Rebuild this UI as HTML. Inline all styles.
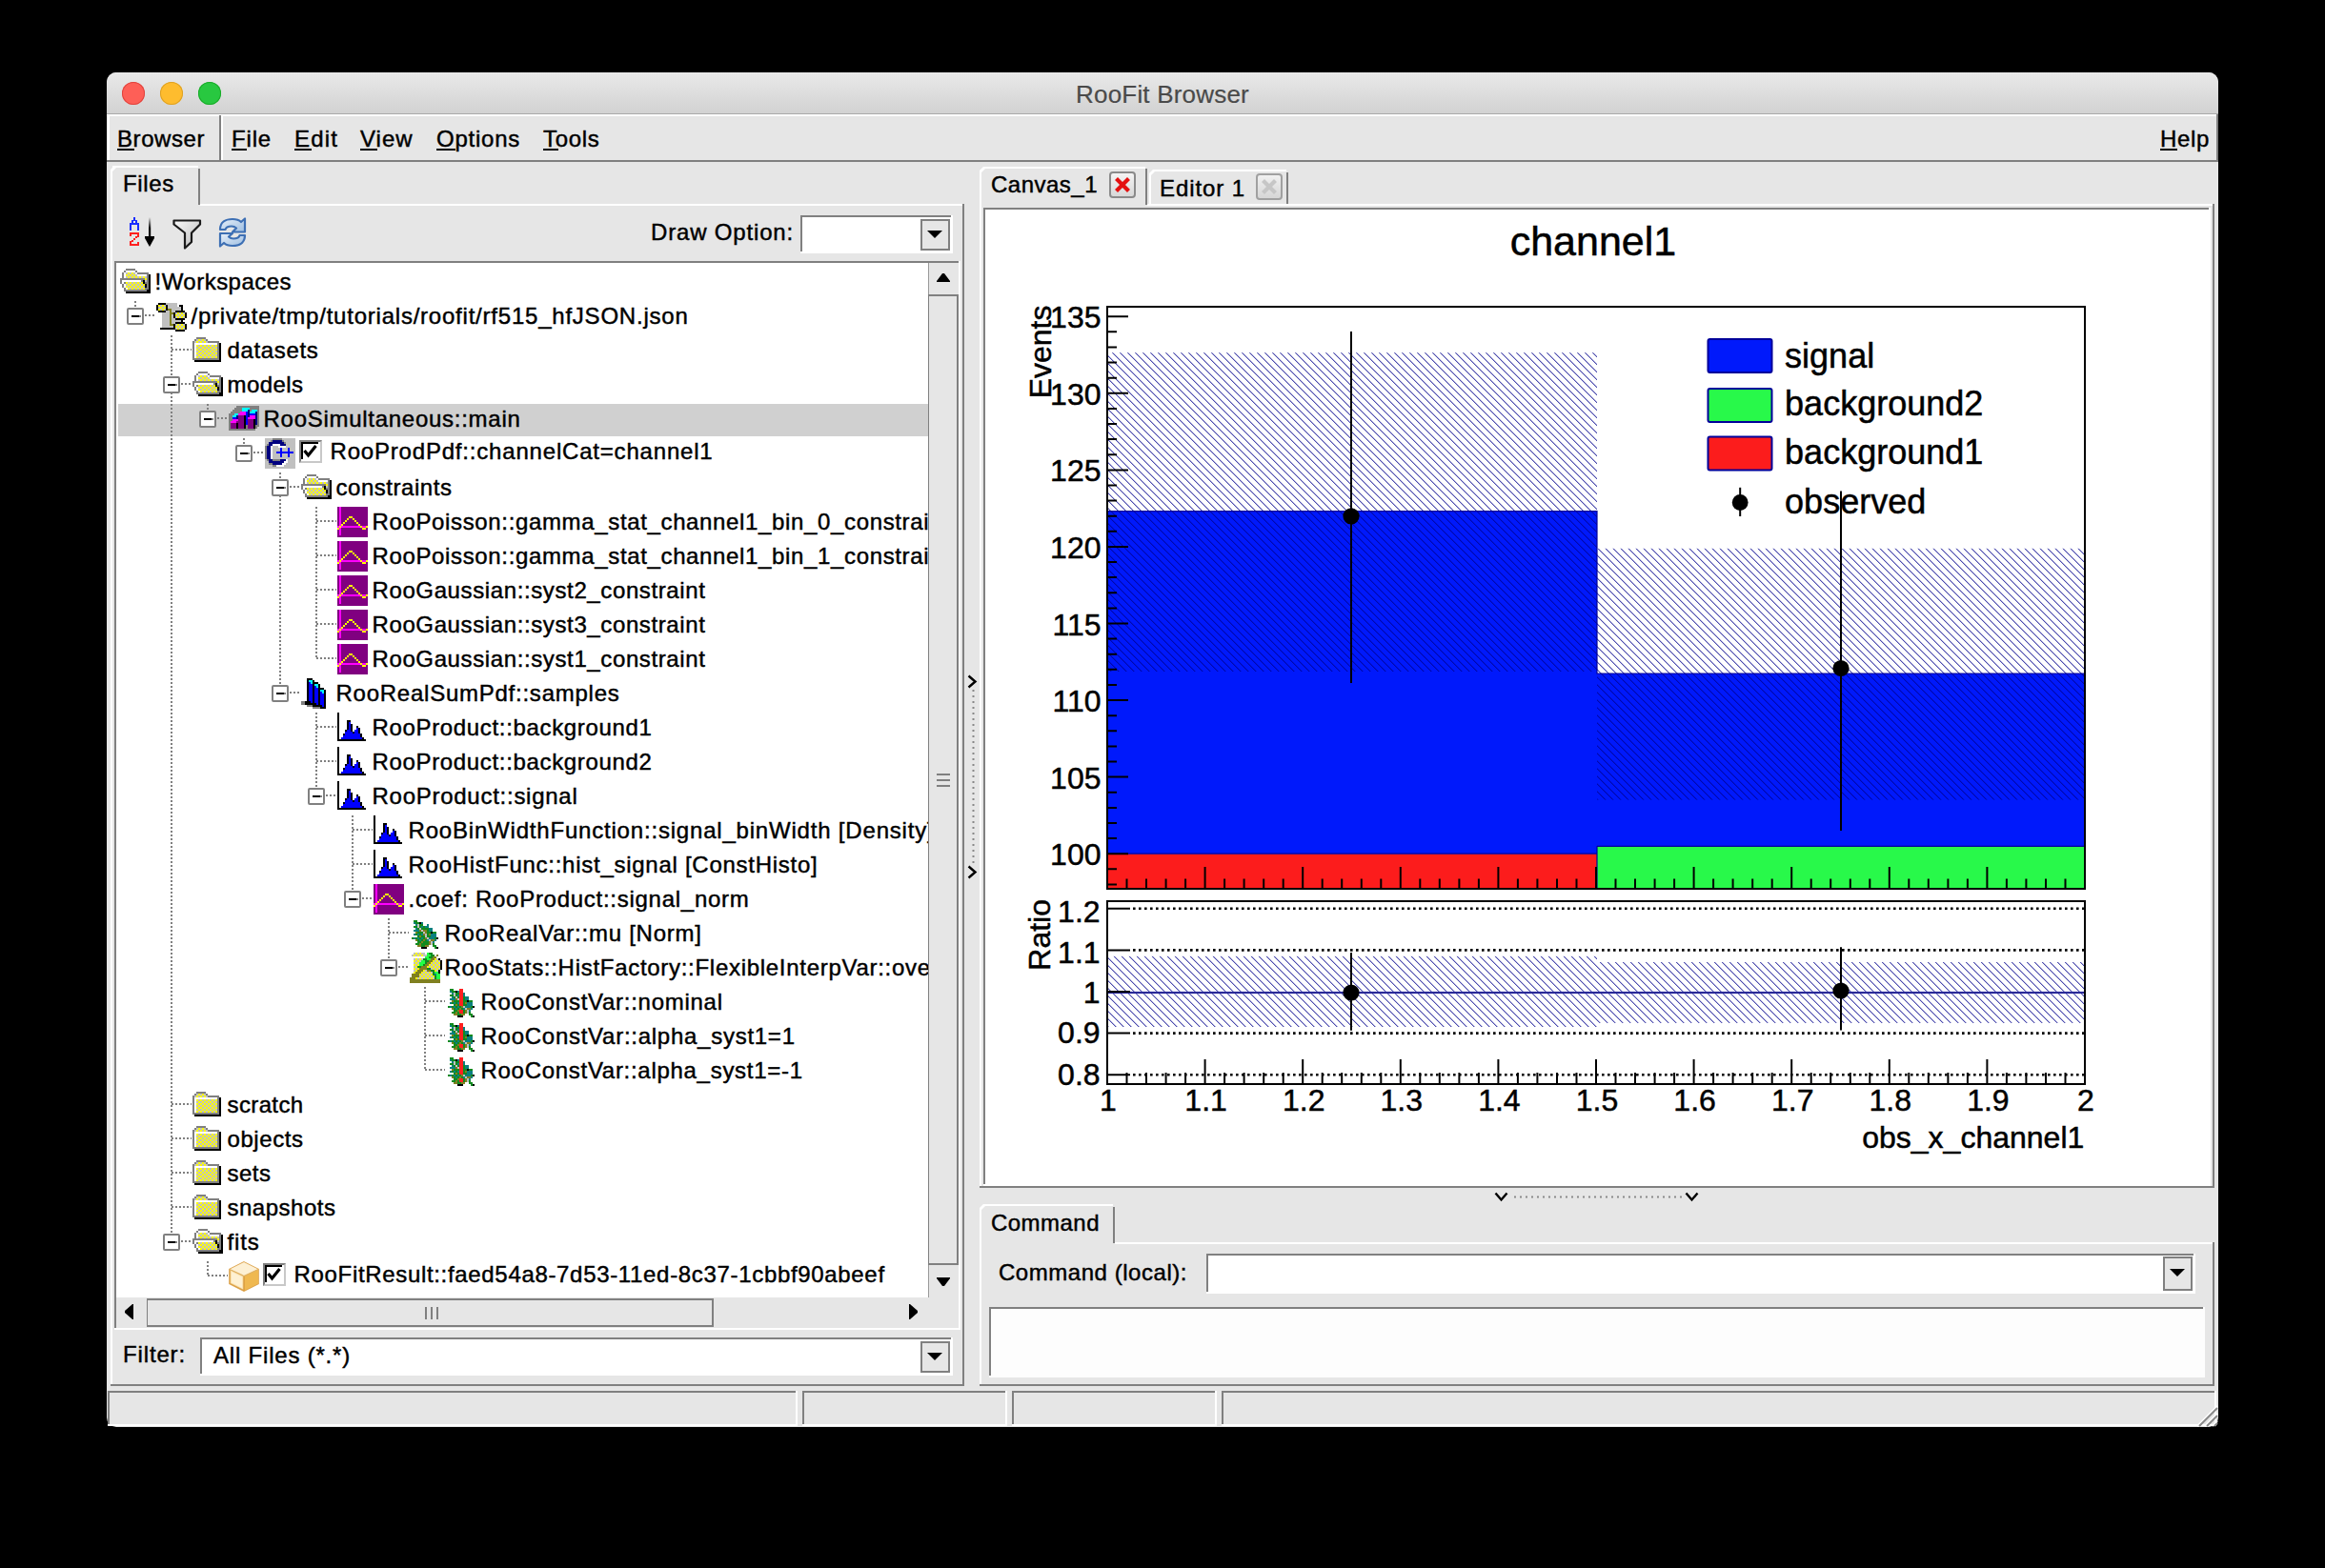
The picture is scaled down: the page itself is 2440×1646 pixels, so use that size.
<!DOCTYPE html>
<html><head><meta charset="utf-8"><style>
html,body{margin:0;padding:0;background:#000;width:2440px;height:1646px;overflow:hidden}
.r{position:absolute}
.t{position:absolute;white-space:pre;line-height:1;font-family:"Liberation Sans",sans-serif;-webkit-text-stroke:0.45px currentColor}
svg{position:absolute;overflow:visible}
</style></head><body>
<div class=r style="left:112px;top:76px;width:2216px;height:1422px;background:#e6e6e6;border-radius:10px 10px 10px 10px;overflow:hidden">
<div class=r style="left:0;top:0;width:2216px;height:43px;background:linear-gradient(#e9e9e9,#d2d2d2)"></div>
<div class=r style="left:0;top:43px;width:2216px;height:1px;background:#a9a9a9"></div>
</div>
<div class=r style="left:128px;top:86px;width:24px;height:24px;border-radius:50%;background:#fe5f57;box-shadow:inset 0 0 0 1px #e0443e"></div>
<div class=r style="left:168px;top:86px;width:24px;height:24px;border-radius:50%;background:#febc2e;box-shadow:inset 0 0 0 1px #dea123"></div>
<div class=r style="left:208px;top:86px;width:24px;height:24px;border-radius:50%;background:#28c840;box-shadow:inset 0 0 0 1px #1aab29"></div>
<div class=t style="left:1129px;top:85.90px;font-size:26px;color:#4a4a4a;letter-spacing:0.200px;-webkit-text-stroke:0.2px #4a4a4a">RooFit Browser</div>
<div class=r style="left:112px;top:120px;width:2216px;height:2px;background:#ffffff;"></div>
<div class=r style="left:113px;top:120px;width:2px;height:50px;background:#ffffff;"></div>
<div class=r style="left:112px;top:168px;width:2216px;height:2px;background:#808080;"></div>
<div class=r style="left:2326px;top:120px;width:2px;height:50px;background:#808080;"></div>
<div class=r style="left:230px;top:121px;width:2px;height:49px;background:#808080;"></div>
<div class=r style="left:232px;top:121px;width:2px;height:47px;background:#ffffff;"></div>
<div class=t style="left:123px;top:133.60px;font-size:24px;color:#000;letter-spacing:0.569px;">Browser</div>
<div class=r style="left:123px;top:156px;width:18px;height:2px;background:#000;"></div>
<div class=t style="left:243px;top:133.60px;font-size:24px;color:#000;letter-spacing:0.832px;">File</div>
<div class=r style="left:243px;top:156px;width:16px;height:2px;background:#000;"></div>
<div class=t style="left:309px;top:133.60px;font-size:24px;color:#000;letter-spacing:1.161px;">Edit</div>
<div class=r style="left:309px;top:156px;width:18px;height:2px;background:#000;"></div>
<div class=t style="left:378px;top:133.60px;font-size:24px;color:#000;letter-spacing:0.995px;">View</div>
<div class=r style="left:378px;top:156px;width:18px;height:2px;background:#000;"></div>
<div class=t style="left:458px;top:133.60px;font-size:24px;color:#000;letter-spacing:0.756px;">Options</div>
<div class=r style="left:458px;top:156px;width:20px;height:2px;background:#000;"></div>
<div class=t style="left:570px;top:133.60px;font-size:24px;color:#000;letter-spacing:0.662px;">Tools</div>
<div class=r style="left:570px;top:156px;width:16px;height:2px;background:#000;"></div>
<div class=t style="left:2267px;top:133.60px;font-size:24px;color:#000;letter-spacing:0.660px;">Help</div>
<div class=r style="left:2267px;top:156px;width:18px;height:2px;background:#000;"></div>
<div class=r style="left:118px;top:174px;width:90px;height:2px;background:#ffffff;"></div>
<svg style="left:116px;top:174px" width="6" height="6"><path d="M0 6 L0 4 L4 0 L6 0 L6 2 L2 6Z" fill="#fff"/></svg>
<div class=r style="left:116px;top:178px;width:2px;height:38px;background:#ffffff;"></div>
<div class=r style="left:208px;top:177px;width:2px;height:38px;background:#808080;"></div>
<div class=t style="left:129px;top:180.60px;font-size:24px;color:#000;letter-spacing:0.666px;">Files</div>
<div class=r style="left:210px;top:214px;width:802px;height:2px;background:#ffffff;"></div>
<div class=r style="left:116px;top:214px;width:2px;height:1241px;background:#ffffff;"></div>
<div class=r style="left:1010px;top:214px;width:2px;height:1241px;background:#808080;"></div>
<div class=r style="left:116px;top:1453px;width:896px;height:2px;background:#808080;"></div>
<svg style="left:134px;top:226px" width="32" height="36" viewBox="0 0 32 36" shape-rendering="crispEdges">
<g fill="#1a2cff"><rect x="6" y="2" width="2" height="4"/><rect x="4" y="5" width="2" height="4"/><rect x="8" y="5" width="2" height="4"/><rect x="2" y="8" width="10" height="2"/><rect x="2" y="8" width="2" height="8"/><rect x="10" y="8" width="2" height="8"/></g>
<g fill="#ff2020"><rect x="2" y="18" width="10" height="2"/><rect x="2" y="18" width="2" height="4"/><rect x="10" y="18" width="2" height="5"/><rect x="8" y="22" width="2" height="2"/><rect x="6" y="24" width="2" height="2"/><rect x="4" y="26" width="2" height="2"/><rect x="2" y="30" width="10" height="2"/><rect x="2" y="27" width="2" height="5"/><rect x="10" y="28" width="2" height="4"/></g>
</svg>
<svg style="left:150px;top:226px" width="16" height="36" viewBox="0 0 16 36"><defs><linearGradient id="ag" x1="0" y1="0" x2="0" y2="1"><stop offset="0" stop-color="#e6e6e6"/><stop offset="0.5" stop-color="#000"/></linearGradient></defs><rect x="6" y="2" width="2.2" height="24" fill="url(#ag)"/><path d="M2 22H12V24L7 33L2 24Z" fill="#000"/></svg>
<svg style="left:180px;top:228px" width="34" height="34" viewBox="0 0 34 34"><defs><linearGradient id="fg" x1="0" y1="0" x2="1" y2="1"><stop offset="0" stop-color="#fafafa"/><stop offset="1" stop-color="#b8b8b8"/></linearGradient></defs>
<path d="M2.5 3.5 H30 V7.5 L21 16.5 V26 L14 32.5 V16.5 L2.5 7.5Z" fill="url(#fg)" stroke="#1a1a1a" stroke-width="2.2" stroke-linejoin="round"/></svg>
<svg style="left:228px;top:226px" width="32" height="36" viewBox="0 0 32 36"><defs><linearGradient id="rg" x1="0" y1="0" x2="1" y2="1"><stop offset="0" stop-color="#e8f0fa"/><stop offset="1" stop-color="#9cbde0"/></linearGradient></defs>
<path d="M3 15 C3 7 9 4 16 4 C20 4 23 5 25 7 L29 3.5 V17.5 H16 L20 13.5 C18.5 12 17 11.5 15 11.5 C11 11.5 9 13 8.5 15Z" fill="url(#rg)" stroke="#3d6fb4" stroke-width="2.2" stroke-linejoin="round"/>
<path d="M29 21 C29 29 23 32 16 32 C12 32 9 31 7 29 L3 32.5 V19 H16 L12 22.5 C13.5 24 15 24.5 17 24.5 C21 24.5 23 23 23.5 21Z" fill="url(#rg)" stroke="#3d6fb4" stroke-width="2.2" stroke-linejoin="round"/>
</svg>
<div class=t style="left:683px;top:231.60px;font-size:24px;color:#000;letter-spacing:0.829px;">Draw Option:</div>
<div class=r style="left:840px;top:226px;width:160px;height:40px;background:#ffffff;"></div>
<div class=r style="left:840px;top:226px;width:158px;height:2px;background:#808080;"></div>
<div class=r style="left:840px;top:226px;width:2px;height:38px;background:#808080;"></div>
<div class=r style="left:966px;top:230px;width:31px;height:33px;background:#e6e6e6;"></div>
<div class=r style="left:966px;top:230px;width:27px;height:29px;border:2px solid #808080;background:#e6e6e6"></div>
<svg style="left:973px;top:242px" width="16" height="9"><path d="M0 0H16L8 8Z" fill="#000"/></svg>
<div class=r style="left:120px;top:274px;width:888px;height:1122px;background:#ffffff;"></div>
<div class=r style="left:120px;top:274px;width:886px;height:2px;background:#808080;"></div>
<div class=r style="left:120px;top:274px;width:2px;height:1120px;background:#808080;"></div>
<div class=r style="left:122px;top:1394px;width:886px;height:2px;background:#ffffff;"></div>
<div class=r style="left:1006px;top:274px;width:2px;height:1122px;background:#ffffff;"></div>
<div class=r style="left:974px;top:276px;width:32px;height:1086px;background:#e6e6e6;"></div>
<div class=r style="left:974px;top:276px;width:1px;height:1086px;background:#9a9a9a;"></div>
<svg style="left:982px;top:287px" width="16" height="10"><path d="M7 0H9L15 8V9H1V8Z" fill="#000"/></svg>
<div class=r style="left:974px;top:309px;width:29px;height:1015px;border:2px solid #808080;border-left-width:1.5px;background:#e6e6e6"></div>
<div class=r style="left:983px;top:812px;width:14px;height:2px;background:#808080;"></div>
<div class=r style="left:983px;top:818px;width:14px;height:2px;background:#808080;"></div>
<div class=r style="left:983px;top:824px;width:14px;height:2px;background:#808080;"></div>
<svg style="left:982px;top:1341px" width="16" height="10"><path d="M1 0H15V1L9 9H7L1 1Z" fill="#000"/></svg>
<div class=r style="left:122px;top:1362px;width:852px;height:32px;background:#e6e6e6;"></div>
<div class=r style="left:974px;top:1362px;width:32px;height:32px;background:#e6e6e6;"></div>
<svg style="left:131px;top:1369px" width="10" height="16"><path d="M9 0V16H8L0 9V7L8 0Z" fill="#000"/></svg>
<div class=r style="left:154px;top:1363px;width:592px;height:26px;border:2px solid #808080;border-left-width:1.5px;border-right-width:2px"></div>
<div class=r style="left:446px;top:1372px;width:2px;height:13px;background:#808080;"></div>
<div class=r style="left:452px;top:1372px;width:2px;height:13px;background:#808080;"></div>
<div class=r style="left:458px;top:1372px;width:2px;height:13px;background:#808080;"></div>
<svg style="left:954px;top:1369px" width="10" height="16"><path d="M0 0V16H1L9 9V7L1 0Z" fill="#000"/></svg>
<div class=t style="left:129px;top:1409.60px;font-size:24px;color:#000;letter-spacing:0.857px;">Filter:</div>
<div class=r style="left:210px;top:1404px;width:790px;height:40px;background:#ffffff;"></div>
<div class=r style="left:210px;top:1404px;width:788px;height:2px;background:#808080;"></div>
<div class=r style="left:210px;top:1404px;width:2px;height:38px;background:#808080;"></div>
<div class=t style="left:224px;top:1410.60px;font-size:24px;color:#000;letter-spacing:0.799px;">All Files (*.*)</div>
<div class=r style="left:966px;top:1408px;width:27px;height:29px;border:2px solid #808080;background:#e6e6e6"></div>
<svg style="left:973px;top:1420px" width="16" height="9"><path d="M0 0H16L8 8Z" fill="#000"/></svg>
<svg style="left:1015px;top:708px" width="11" height="15"><path d="M1.5 1.5 L8.5 7.5 L1.5 13.5" fill="none" stroke="#000" stroke-width="2.4"/></svg>
<svg style="left:1015px;top:908px" width="11" height="15"><path d="M1.5 1.5 L8.5 7.5 L1.5 13.5" fill="none" stroke="#000" stroke-width="2.4"/></svg>
<svg style="left:1020px;top:724px" width="3" height="182"><line x1="1.5" y1="0" x2="1.5" y2="182" stroke="#888" stroke-width="2" stroke-dasharray="2 4"/></svg>
<div class=r style="left:122px;top:276px;width:852px;height:1086px;overflow:hidden"><div class=r style="left:-122px;top:-276px;width:2440px;height:1646px">
<div class=r style="left:124px;top:424px;width:850px;height:34px;background:#d0d0d0;"></div>
<svg style="left:0;top:0" width="2440" height="1646"><g stroke="#808080" stroke-width="2" stroke-dasharray="2 2" fill="none" shape-rendering="crispEdges"><line x1="142.0" y1="316" x2="142.0" y2="323"/><line x1="180.0" y1="352" x2="180.0" y2="1295"/><line x1="218.0" y1="424" x2="218.0" y2="431"/><line x1="256.0" y1="460" x2="256.0" y2="467"/><line x1="294.0" y1="496" x2="294.0" y2="719"/><line x1="332.0" y1="532" x2="332.0" y2="691"/><line x1="332.0" y1="748" x2="332.0" y2="827"/><line x1="370.0" y1="856" x2="370.0" y2="935"/><line x1="408.0" y1="964" x2="408.0" y2="1007"/><line x1="446.0" y1="1036" x2="446.0" y2="1123"/><line x1="218.0" y1="1324" x2="218.0" y2="1339"/><line x1="152" y1="331" x2="163" y2="331"/><line x1="180" y1="367" x2="201" y2="367"/><line x1="190" y1="403" x2="201" y2="403"/><line x1="228" y1="439" x2="239" y2="439"/><line x1="266" y1="475" x2="277" y2="475"/><line x1="304" y1="511" x2="315" y2="511"/><line x1="332" y1="547" x2="353" y2="547"/><line x1="332" y1="583" x2="353" y2="583"/><line x1="332" y1="619" x2="353" y2="619"/><line x1="332" y1="655" x2="353" y2="655"/><line x1="332" y1="691" x2="353" y2="691"/><line x1="304" y1="727" x2="315" y2="727"/><line x1="332" y1="763" x2="353" y2="763"/><line x1="332" y1="799" x2="353" y2="799"/><line x1="342" y1="835" x2="353" y2="835"/><line x1="370" y1="871" x2="391" y2="871"/><line x1="370" y1="907" x2="391" y2="907"/><line x1="380" y1="943" x2="391" y2="943"/><line x1="408" y1="979" x2="429" y2="979"/><line x1="418" y1="1015" x2="429" y2="1015"/><line x1="446" y1="1051" x2="467" y2="1051"/><line x1="446" y1="1087" x2="467" y2="1087"/><line x1="446" y1="1123" x2="467" y2="1123"/><line x1="180" y1="1159" x2="201" y2="1159"/><line x1="180" y1="1195" x2="201" y2="1195"/><line x1="180" y1="1231" x2="201" y2="1231"/><line x1="180" y1="1267" x2="201" y2="1267"/><line x1="190" y1="1303" x2="201" y2="1303"/><line x1="218" y1="1339" x2="239" y2="1339"/></g></svg>
<svg style="left:126px;top:282px" width="32" height="26" viewBox="0 0 16 13" shape-rendering="crispEdges"><rect x="3" y="0" width="5" height="1" fill="#808080"/><rect x="2" y="1" width="1" height="1" fill="#808080"/><rect x="3" y="1" width="5" height="1" fill="#fff"/><rect x="8" y="1" width="1" height="1" fill="#808080"/><rect x="1" y="2" width="1" height="1" fill="#808080"/><rect x="2" y="2" width="1" height="1" fill="#fff"/><rect x="3" y="2" width="1" height="1" fill="#c0c0c0"/><rect x="4" y="2" width="1" height="1" fill="#ffff00"/><rect x="5" y="2" width="1" height="1" fill="#c0c0c0"/><rect x="6" y="2" width="1" height="1" fill="#ffff00"/><rect x="7" y="2" width="1" height="1" fill="#c0c0c0"/><rect x="8" y="2" width="1" height="1" fill="#fff"/><rect x="9" y="2" width="6" height="1" fill="#808080"/><rect x="1" y="3" width="1" height="1" fill="#808080"/><rect x="2" y="3" width="1" height="1" fill="#fff"/><rect x="3" y="3" width="1" height="1" fill="#ffff00"/><rect x="4" y="3" width="1" height="1" fill="#c0c0c0"/><rect x="5" y="3" width="1" height="1" fill="#ffff00"/><rect x="6" y="3" width="1" height="1" fill="#c0c0c0"/><rect x="7" y="3" width="1" height="1" fill="#ffff00"/><rect x="8" y="3" width="1" height="1" fill="#c0c0c0"/><rect x="9" y="3" width="5" height="1" fill="#fff"/><rect x="14" y="3" width="1" height="1" fill="#808080"/><rect x="15" y="3" width="1" height="1" fill="#000"/><rect x="1" y="4" width="1" height="1" fill="#808080"/><rect x="2" y="4" width="1" height="1" fill="#fff"/><rect x="3" y="4" width="1" height="1" fill="#c0c0c0"/><rect x="4" y="4" width="1" height="1" fill="#ffff00"/><rect x="5" y="4" width="1" height="1" fill="#c0c0c0"/><rect x="6" y="4" width="1" height="1" fill="#ffff00"/><rect x="7" y="4" width="1" height="1" fill="#c0c0c0"/><rect x="8" y="4" width="1" height="1" fill="#ffff00"/><rect x="9" y="4" width="1" height="1" fill="#c0c0c0"/><rect x="10" y="4" width="1" height="1" fill="#ffff00"/><rect x="11" y="4" width="1" height="1" fill="#c0c0c0"/><rect x="12" y="4" width="1" height="1" fill="#ffff00"/><rect x="13" y="4" width="1" height="1" fill="#c0c0c0"/><rect x="14" y="4" width="1" height="1" fill="#808080"/><rect x="15" y="4" width="1" height="1" fill="#000"/><rect x="0" y="5" width="13" height="1" fill="#808080"/><rect x="13" y="5" width="1" height="1" fill="#ffff00"/><rect x="14" y="5" width="1" height="1" fill="#808080"/><rect x="15" y="5" width="1" height="1" fill="#000"/><rect x="0" y="6" width="1" height="1" fill="#808080"/><rect x="1" y="6" width="10" height="1" fill="#fff"/><rect x="11" y="6" width="1" height="1" fill="#808080"/><rect x="12" y="6" width="1" height="1" fill="#000"/><rect x="13" y="6" width="1" height="1" fill="#c0c0c0"/><rect x="14" y="6" width="1" height="1" fill="#808080"/><rect x="15" y="6" width="1" height="1" fill="#000"/><rect x="0" y="7" width="1" height="1" fill="#808080"/><rect x="1" y="7" width="1" height="1" fill="#fff"/><rect x="2" y="7" width="1" height="1" fill="#808080"/><rect x="3" y="7" width="1" height="1" fill="#ffff00"/><rect x="4" y="7" width="1" height="1" fill="#c0c0c0"/><rect x="5" y="7" width="1" height="1" fill="#ffff00"/><rect x="6" y="7" width="1" height="1" fill="#c0c0c0"/><rect x="7" y="7" width="1" height="1" fill="#ffff00"/><rect x="8" y="7" width="1" height="1" fill="#c0c0c0"/><rect x="9" y="7" width="1" height="1" fill="#ffff00"/><rect x="10" y="7" width="1" height="1" fill="#c0c0c0"/><rect x="11" y="7" width="1" height="1" fill="#ffff00"/><rect x="12" y="7" width="1" height="1" fill="#000"/><rect x="13" y="7" width="2" height="1" fill="#808080"/><rect x="15" y="7" width="1" height="1" fill="#000"/><rect x="1" y="8" width="1" height="1" fill="#808080"/><rect x="2" y="8" width="1" height="1" fill="#fff"/><rect x="3" y="8" width="1" height="1" fill="#c0c0c0"/><rect x="4" y="8" width="1" height="1" fill="#ffff00"/><rect x="5" y="8" width="1" height="1" fill="#c0c0c0"/><rect x="6" y="8" width="1" height="1" fill="#ffff00"/><rect x="7" y="8" width="1" height="1" fill="#c0c0c0"/><rect x="8" y="8" width="1" height="1" fill="#ffff00"/><rect x="9" y="8" width="1" height="1" fill="#c0c0c0"/><rect x="10" y="8" width="1" height="1" fill="#ffff00"/><rect x="11" y="8" width="1" height="1" fill="#c0c0c0"/><rect x="12" y="8" width="1" height="1" fill="#ffff00"/><rect x="13" y="8" width="1" height="1" fill="#000"/><rect x="14" y="8" width="1" height="1" fill="#808080"/><rect x="15" y="8" width="1" height="1" fill="#000"/><rect x="1" y="9" width="1" height="1" fill="#808080"/><rect x="2" y="9" width="1" height="1" fill="#fff"/><rect x="3" y="9" width="1" height="1" fill="#ffff00"/><rect x="4" y="9" width="1" height="1" fill="#c0c0c0"/><rect x="5" y="9" width="1" height="1" fill="#ffff00"/><rect x="6" y="9" width="1" height="1" fill="#c0c0c0"/><rect x="7" y="9" width="1" height="1" fill="#ffff00"/><rect x="8" y="9" width="1" height="1" fill="#c0c0c0"/><rect x="9" y="9" width="1" height="1" fill="#ffff00"/><rect x="10" y="9" width="1" height="1" fill="#c0c0c0"/><rect x="11" y="9" width="1" height="1" fill="#ffff00"/><rect x="12" y="9" width="1" height="1" fill="#c0c0c0"/><rect x="13" y="9" width="1" height="1" fill="#000"/><rect x="14" y="9" width="1" height="1" fill="#808080"/><rect x="15" y="9" width="1" height="1" fill="#000"/><rect x="2" y="10" width="1" height="1" fill="#808080"/><rect x="3" y="10" width="1" height="1" fill="#fff"/><rect x="4" y="10" width="1" height="1" fill="#ffff00"/><rect x="5" y="10" width="1" height="1" fill="#c0c0c0"/><rect x="6" y="10" width="1" height="1" fill="#ffff00"/><rect x="7" y="10" width="1" height="1" fill="#c0c0c0"/><rect x="8" y="10" width="1" height="1" fill="#ffff00"/><rect x="9" y="10" width="1" height="1" fill="#c0c0c0"/><rect x="10" y="10" width="1" height="1" fill="#ffff00"/><rect x="11" y="10" width="1" height="1" fill="#c0c0c0"/><rect x="12" y="10" width="1" height="1" fill="#ffff00"/><rect x="13" y="10" width="2" height="1" fill="#808080"/><rect x="15" y="10" width="1" height="1" fill="#000"/><rect x="2" y="11" width="12" height="1" fill="#808080"/><rect x="14" y="11" width="2" height="1" fill="#000"/><rect x="3" y="12" width="13" height="1" fill="#000"/></svg>
<div class=t style="left:162.5px;top:283.60px;font-size:24px;color:#000;letter-spacing:0.482px;">!Workspaces</div>
<svg style="left:164px;top:318px" width="32" height="30" viewBox="0 0 16 15" shape-rendering="crispEdges"><rect x="1" y="0" width="4" height="1" fill="#000"/><rect x="5" y="0" width="6" height="1" fill="#c0c0c0"/><rect x="11" y="0" width="1" height="1" fill="#fff"/><rect x="0" y="1" width="1" height="1" fill="#000"/><rect x="1" y="1" width="1" height="1" fill="#ffff00"/><rect x="2" y="1" width="1" height="1" fill="#c0c0c0"/><rect x="3" y="1" width="1" height="1" fill="#ffff00"/><rect x="4" y="1" width="1" height="1" fill="#c0c0c0"/><rect x="5" y="1" width="1" height="1" fill="#000"/><rect x="6" y="1" width="5" height="1" fill="#c0c0c0"/><rect x="11" y="1" width="1" height="1" fill="#fff"/><rect x="12" y="1" width="2" height="1" fill="#000"/><rect x="0" y="2" width="1" height="1" fill="#000"/><rect x="1" y="2" width="1" height="1" fill="#c0c0c0"/><rect x="2" y="2" width="1" height="1" fill="#ffff00"/><rect x="3" y="2" width="1" height="1" fill="#c0c0c0"/><rect x="4" y="2" width="1" height="1" fill="#ffff00"/><rect x="5" y="2" width="1" height="1" fill="#000"/><rect x="6" y="2" width="7" height="1" fill="#c0c0c0"/><rect x="13" y="2" width="1" height="1" fill="#000"/><rect x="0" y="3" width="1" height="1" fill="#000"/><rect x="1" y="3" width="1" height="1" fill="#ffff00"/><rect x="2" y="3" width="1" height="1" fill="#c0c0c0"/><rect x="3" y="3" width="1" height="1" fill="#ffff00"/><rect x="4" y="3" width="1" height="1" fill="#c0c0c0"/><rect x="5" y="3" width="1" height="1" fill="#000"/><rect x="6" y="3" width="2" height="1" fill="#808020"/><rect x="8" y="3" width="5" height="1" fill="#c0c0c0"/><rect x="13" y="3" width="1" height="1" fill="#000"/><rect x="1" y="4" width="4" height="1" fill="#000"/><rect x="5" y="4" width="2" height="1" fill="#c0c0c0"/><rect x="7" y="4" width="1" height="1" fill="#808020"/><rect x="8" y="4" width="2" height="1" fill="#c0c0c0"/><rect x="10" y="4" width="5" height="1" fill="#000"/><rect x="3" y="5" width="4" height="1" fill="#c0c0c0"/><rect x="7" y="5" width="2" height="1" fill="#808020"/><rect x="9" y="5" width="1" height="1" fill="#000"/><rect x="10" y="5" width="1" height="1" fill="#c0c0c0"/><rect x="11" y="5" width="1" height="1" fill="#ffff00"/><rect x="12" y="5" width="1" height="1" fill="#c0c0c0"/><rect x="13" y="5" width="1" height="1" fill="#ffff00"/><rect x="14" y="5" width="1" height="1" fill="#c0c0c0"/><rect x="15" y="5" width="1" height="1" fill="#000"/><rect x="3" y="6" width="4" height="1" fill="#c0c0c0"/><rect x="7" y="6" width="1" height="1" fill="#808020"/><rect x="8" y="6" width="1" height="1" fill="#c0c0c0"/><rect x="9" y="6" width="1" height="1" fill="#000"/><rect x="10" y="6" width="1" height="1" fill="#ffff00"/><rect x="11" y="6" width="1" height="1" fill="#c0c0c0"/><rect x="12" y="6" width="1" height="1" fill="#ffff00"/><rect x="13" y="6" width="1" height="1" fill="#c0c0c0"/><rect x="14" y="6" width="1" height="1" fill="#ffff00"/><rect x="15" y="6" width="1" height="1" fill="#000"/><rect x="3" y="7" width="4" height="1" fill="#c0c0c0"/><rect x="7" y="7" width="1" height="1" fill="#808020"/><rect x="8" y="7" width="1" height="1" fill="#c0c0c0"/><rect x="9" y="7" width="1" height="1" fill="#000"/><rect x="10" y="7" width="1" height="1" fill="#c0c0c0"/><rect x="11" y="7" width="1" height="1" fill="#ffff00"/><rect x="12" y="7" width="1" height="1" fill="#c0c0c0"/><rect x="13" y="7" width="1" height="1" fill="#ffff00"/><rect x="14" y="7" width="1" height="1" fill="#c0c0c0"/><rect x="15" y="7" width="1" height="1" fill="#000"/><rect x="3" y="8" width="4" height="1" fill="#c0c0c0"/><rect x="7" y="8" width="1" height="1" fill="#808020"/><rect x="8" y="8" width="2" height="1" fill="#c0c0c0"/><rect x="10" y="8" width="5" height="1" fill="#000"/><rect x="3" y="9" width="4" height="1" fill="#c0c0c0"/><rect x="7" y="9" width="1" height="1" fill="#808020"/><rect x="8" y="9" width="5" height="1" fill="#c0c0c0"/><rect x="13" y="9" width="1" height="1" fill="#000"/><rect x="3" y="10" width="4" height="1" fill="#c0c0c0"/><rect x="7" y="10" width="1" height="1" fill="#808020"/><rect x="8" y="10" width="2" height="1" fill="#c0c0c0"/><rect x="10" y="10" width="5" height="1" fill="#000"/><rect x="3" y="11" width="4" height="1" fill="#c0c0c0"/><rect x="7" y="11" width="2" height="1" fill="#808020"/><rect x="9" y="11" width="1" height="1" fill="#000"/><rect x="10" y="11" width="1" height="1" fill="#c0c0c0"/><rect x="11" y="11" width="1" height="1" fill="#ffff00"/><rect x="12" y="11" width="1" height="1" fill="#c0c0c0"/><rect x="13" y="11" width="1" height="1" fill="#ffff00"/><rect x="14" y="11" width="1" height="1" fill="#c0c0c0"/><rect x="15" y="11" width="1" height="1" fill="#000"/><rect x="3" y="12" width="6" height="1" fill="#c0c0c0"/><rect x="9" y="12" width="1" height="1" fill="#000"/><rect x="10" y="12" width="1" height="1" fill="#ffff00"/><rect x="11" y="12" width="1" height="1" fill="#c0c0c0"/><rect x="12" y="12" width="1" height="1" fill="#ffff00"/><rect x="13" y="12" width="1" height="1" fill="#c0c0c0"/><rect x="14" y="12" width="1" height="1" fill="#ffff00"/><rect x="15" y="12" width="1" height="1" fill="#000"/><rect x="2" y="13" width="8" height="1" fill="#000"/><rect x="10" y="13" width="1" height="1" fill="#c0c0c0"/><rect x="11" y="13" width="1" height="1" fill="#ffff00"/><rect x="12" y="13" width="1" height="1" fill="#c0c0c0"/><rect x="13" y="13" width="1" height="1" fill="#ffff00"/><rect x="14" y="13" width="1" height="1" fill="#c0c0c0"/><rect x="15" y="13" width="1" height="1" fill="#000"/><rect x="10" y="14" width="5" height="1" fill="#000"/></svg>
<div class=r style="left:133px;top:323px;width:14px;height:14px;border:2px solid #808080;border-radius:2px;background:#fff"></div>
<div class=r style="left:138px;top:331px;width:8px;height:2px;background:#000;"></div>
<div class=r style="left:146px;top:331px;width:2px;height:2px;background:#808080;"></div>
<div class=t style="left:200.5px;top:319.60px;font-size:24px;color:#000;letter-spacing:0.776px;">/private/tmp/tutorials/roofit/rf515_hfJSON.json</div>
<svg style="left:202px;top:354px" width="30" height="26" viewBox="0 0 15 13" shape-rendering="crispEdges"><rect x="2" y="0" width="5" height="1" fill="#808080"/><rect x="1" y="1" width="1" height="1" fill="#808080"/><rect x="2" y="1" width="1" height="1" fill="#c0c0c0"/><rect x="3" y="1" width="1" height="1" fill="#ffff00"/><rect x="4" y="1" width="1" height="1" fill="#c0c0c0"/><rect x="5" y="1" width="1" height="1" fill="#ffff00"/><rect x="6" y="1" width="1" height="1" fill="#c0c0c0"/><rect x="7" y="1" width="1" height="1" fill="#808080"/><rect x="0" y="2" width="1" height="1" fill="#808080"/><rect x="1" y="2" width="1" height="1" fill="#c0c0c0"/><rect x="2" y="2" width="1" height="1" fill="#ffff00"/><rect x="3" y="2" width="1" height="1" fill="#c0c0c0"/><rect x="4" y="2" width="1" height="1" fill="#ffff00"/><rect x="5" y="2" width="1" height="1" fill="#c0c0c0"/><rect x="6" y="2" width="1" height="1" fill="#ffff00"/><rect x="7" y="2" width="1" height="1" fill="#c0c0c0"/><rect x="8" y="2" width="6" height="1" fill="#808080"/><rect x="0" y="3" width="1" height="1" fill="#808080"/><rect x="1" y="3" width="12" height="1" fill="#fff"/><rect x="13" y="3" width="1" height="1" fill="#808080"/><rect x="14" y="3" width="1" height="1" fill="#000"/><rect x="0" y="4" width="1" height="1" fill="#808080"/><rect x="1" y="4" width="1" height="1" fill="#fff"/><rect x="2" y="4" width="1" height="1" fill="#ffff00"/><rect x="3" y="4" width="1" height="1" fill="#c0c0c0"/><rect x="4" y="4" width="1" height="1" fill="#ffff00"/><rect x="5" y="4" width="1" height="1" fill="#c0c0c0"/><rect x="6" y="4" width="1" height="1" fill="#ffff00"/><rect x="7" y="4" width="1" height="1" fill="#c0c0c0"/><rect x="8" y="4" width="1" height="1" fill="#ffff00"/><rect x="9" y="4" width="1" height="1" fill="#c0c0c0"/><rect x="10" y="4" width="1" height="1" fill="#ffff00"/><rect x="11" y="4" width="1" height="1" fill="#c0c0c0"/><rect x="12" y="4" width="1" height="1" fill="#ffff00"/><rect x="13" y="4" width="1" height="1" fill="#808080"/><rect x="14" y="4" width="1" height="1" fill="#000"/><rect x="0" y="5" width="1" height="1" fill="#808080"/><rect x="1" y="5" width="1" height="1" fill="#fff"/><rect x="2" y="5" width="1" height="1" fill="#c0c0c0"/><rect x="3" y="5" width="1" height="1" fill="#ffff00"/><rect x="4" y="5" width="1" height="1" fill="#c0c0c0"/><rect x="5" y="5" width="1" height="1" fill="#ffff00"/><rect x="6" y="5" width="1" height="1" fill="#c0c0c0"/><rect x="7" y="5" width="1" height="1" fill="#ffff00"/><rect x="8" y="5" width="1" height="1" fill="#c0c0c0"/><rect x="9" y="5" width="1" height="1" fill="#ffff00"/><rect x="10" y="5" width="1" height="1" fill="#c0c0c0"/><rect x="11" y="5" width="1" height="1" fill="#ffff00"/><rect x="12" y="5" width="1" height="1" fill="#c0c0c0"/><rect x="13" y="5" width="1" height="1" fill="#808080"/><rect x="14" y="5" width="1" height="1" fill="#000"/><rect x="0" y="6" width="1" height="1" fill="#808080"/><rect x="1" y="6" width="1" height="1" fill="#fff"/><rect x="2" y="6" width="1" height="1" fill="#ffff00"/><rect x="3" y="6" width="1" height="1" fill="#c0c0c0"/><rect x="4" y="6" width="1" height="1" fill="#ffff00"/><rect x="5" y="6" width="1" height="1" fill="#c0c0c0"/><rect x="6" y="6" width="1" height="1" fill="#ffff00"/><rect x="7" y="6" width="1" height="1" fill="#c0c0c0"/><rect x="8" y="6" width="1" height="1" fill="#ffff00"/><rect x="9" y="6" width="1" height="1" fill="#c0c0c0"/><rect x="10" y="6" width="1" height="1" fill="#ffff00"/><rect x="11" y="6" width="1" height="1" fill="#c0c0c0"/><rect x="12" y="6" width="1" height="1" fill="#ffff00"/><rect x="13" y="6" width="1" height="1" fill="#808080"/><rect x="14" y="6" width="1" height="1" fill="#000"/><rect x="0" y="7" width="1" height="1" fill="#808080"/><rect x="1" y="7" width="1" height="1" fill="#fff"/><rect x="2" y="7" width="1" height="1" fill="#c0c0c0"/><rect x="3" y="7" width="1" height="1" fill="#ffff00"/><rect x="4" y="7" width="1" height="1" fill="#c0c0c0"/><rect x="5" y="7" width="1" height="1" fill="#ffff00"/><rect x="6" y="7" width="1" height="1" fill="#c0c0c0"/><rect x="7" y="7" width="1" height="1" fill="#ffff00"/><rect x="8" y="7" width="1" height="1" fill="#c0c0c0"/><rect x="9" y="7" width="1" height="1" fill="#ffff00"/><rect x="10" y="7" width="1" height="1" fill="#c0c0c0"/><rect x="11" y="7" width="1" height="1" fill="#ffff00"/><rect x="12" y="7" width="1" height="1" fill="#c0c0c0"/><rect x="13" y="7" width="1" height="1" fill="#808080"/><rect x="14" y="7" width="1" height="1" fill="#000"/><rect x="0" y="8" width="1" height="1" fill="#808080"/><rect x="1" y="8" width="1" height="1" fill="#fff"/><rect x="2" y="8" width="1" height="1" fill="#ffff00"/><rect x="3" y="8" width="1" height="1" fill="#c0c0c0"/><rect x="4" y="8" width="1" height="1" fill="#ffff00"/><rect x="5" y="8" width="1" height="1" fill="#c0c0c0"/><rect x="6" y="8" width="1" height="1" fill="#ffff00"/><rect x="7" y="8" width="1" height="1" fill="#c0c0c0"/><rect x="8" y="8" width="1" height="1" fill="#ffff00"/><rect x="9" y="8" width="1" height="1" fill="#c0c0c0"/><rect x="10" y="8" width="1" height="1" fill="#ffff00"/><rect x="11" y="8" width="1" height="1" fill="#c0c0c0"/><rect x="12" y="8" width="1" height="1" fill="#ffff00"/><rect x="13" y="8" width="1" height="1" fill="#808080"/><rect x="14" y="8" width="1" height="1" fill="#000"/><rect x="0" y="9" width="1" height="1" fill="#808080"/><rect x="1" y="9" width="1" height="1" fill="#fff"/><rect x="2" y="9" width="1" height="1" fill="#c0c0c0"/><rect x="3" y="9" width="1" height="1" fill="#ffff00"/><rect x="4" y="9" width="1" height="1" fill="#c0c0c0"/><rect x="5" y="9" width="1" height="1" fill="#ffff00"/><rect x="6" y="9" width="1" height="1" fill="#c0c0c0"/><rect x="7" y="9" width="1" height="1" fill="#ffff00"/><rect x="8" y="9" width="1" height="1" fill="#c0c0c0"/><rect x="9" y="9" width="1" height="1" fill="#ffff00"/><rect x="10" y="9" width="1" height="1" fill="#c0c0c0"/><rect x="11" y="9" width="1" height="1" fill="#ffff00"/><rect x="12" y="9" width="1" height="1" fill="#c0c0c0"/><rect x="13" y="9" width="1" height="1" fill="#808080"/><rect x="14" y="9" width="1" height="1" fill="#000"/><rect x="0" y="10" width="1" height="1" fill="#808080"/><rect x="1" y="10" width="1" height="1" fill="#fff"/><rect x="2" y="10" width="1" height="1" fill="#ffff00"/><rect x="3" y="10" width="1" height="1" fill="#c0c0c0"/><rect x="4" y="10" width="1" height="1" fill="#ffff00"/><rect x="5" y="10" width="1" height="1" fill="#c0c0c0"/><rect x="6" y="10" width="1" height="1" fill="#ffff00"/><rect x="7" y="10" width="1" height="1" fill="#c0c0c0"/><rect x="8" y="10" width="1" height="1" fill="#ffff00"/><rect x="9" y="10" width="1" height="1" fill="#c0c0c0"/><rect x="10" y="10" width="1" height="1" fill="#ffff00"/><rect x="11" y="10" width="1" height="1" fill="#c0c0c0"/><rect x="12" y="10" width="1" height="1" fill="#ffff00"/><rect x="13" y="10" width="1" height="1" fill="#808080"/><rect x="14" y="10" width="1" height="1" fill="#000"/><rect x="0" y="11" width="14" height="1" fill="#808080"/><rect x="14" y="11" width="1" height="1" fill="#000"/><rect x="1" y="12" width="14" height="1" fill="#000"/></svg>
<div class=t style="left:238.5px;top:355.60px;font-size:24px;color:#000;letter-spacing:0.659px;">datasets</div>
<svg style="left:202px;top:390px" width="32" height="26" viewBox="0 0 16 13" shape-rendering="crispEdges"><rect x="3" y="0" width="5" height="1" fill="#808080"/><rect x="2" y="1" width="1" height="1" fill="#808080"/><rect x="3" y="1" width="5" height="1" fill="#fff"/><rect x="8" y="1" width="1" height="1" fill="#808080"/><rect x="1" y="2" width="1" height="1" fill="#808080"/><rect x="2" y="2" width="1" height="1" fill="#fff"/><rect x="3" y="2" width="1" height="1" fill="#c0c0c0"/><rect x="4" y="2" width="1" height="1" fill="#ffff00"/><rect x="5" y="2" width="1" height="1" fill="#c0c0c0"/><rect x="6" y="2" width="1" height="1" fill="#ffff00"/><rect x="7" y="2" width="1" height="1" fill="#c0c0c0"/><rect x="8" y="2" width="1" height="1" fill="#fff"/><rect x="9" y="2" width="6" height="1" fill="#808080"/><rect x="1" y="3" width="1" height="1" fill="#808080"/><rect x="2" y="3" width="1" height="1" fill="#fff"/><rect x="3" y="3" width="1" height="1" fill="#ffff00"/><rect x="4" y="3" width="1" height="1" fill="#c0c0c0"/><rect x="5" y="3" width="1" height="1" fill="#ffff00"/><rect x="6" y="3" width="1" height="1" fill="#c0c0c0"/><rect x="7" y="3" width="1" height="1" fill="#ffff00"/><rect x="8" y="3" width="1" height="1" fill="#c0c0c0"/><rect x="9" y="3" width="5" height="1" fill="#fff"/><rect x="14" y="3" width="1" height="1" fill="#808080"/><rect x="15" y="3" width="1" height="1" fill="#000"/><rect x="1" y="4" width="1" height="1" fill="#808080"/><rect x="2" y="4" width="1" height="1" fill="#fff"/><rect x="3" y="4" width="1" height="1" fill="#c0c0c0"/><rect x="4" y="4" width="1" height="1" fill="#ffff00"/><rect x="5" y="4" width="1" height="1" fill="#c0c0c0"/><rect x="6" y="4" width="1" height="1" fill="#ffff00"/><rect x="7" y="4" width="1" height="1" fill="#c0c0c0"/><rect x="8" y="4" width="1" height="1" fill="#ffff00"/><rect x="9" y="4" width="1" height="1" fill="#c0c0c0"/><rect x="10" y="4" width="1" height="1" fill="#ffff00"/><rect x="11" y="4" width="1" height="1" fill="#c0c0c0"/><rect x="12" y="4" width="1" height="1" fill="#ffff00"/><rect x="13" y="4" width="1" height="1" fill="#c0c0c0"/><rect x="14" y="4" width="1" height="1" fill="#808080"/><rect x="15" y="4" width="1" height="1" fill="#000"/><rect x="0" y="5" width="13" height="1" fill="#808080"/><rect x="13" y="5" width="1" height="1" fill="#ffff00"/><rect x="14" y="5" width="1" height="1" fill="#808080"/><rect x="15" y="5" width="1" height="1" fill="#000"/><rect x="0" y="6" width="1" height="1" fill="#808080"/><rect x="1" y="6" width="10" height="1" fill="#fff"/><rect x="11" y="6" width="1" height="1" fill="#808080"/><rect x="12" y="6" width="1" height="1" fill="#000"/><rect x="13" y="6" width="1" height="1" fill="#c0c0c0"/><rect x="14" y="6" width="1" height="1" fill="#808080"/><rect x="15" y="6" width="1" height="1" fill="#000"/><rect x="0" y="7" width="1" height="1" fill="#808080"/><rect x="1" y="7" width="1" height="1" fill="#fff"/><rect x="2" y="7" width="1" height="1" fill="#808080"/><rect x="3" y="7" width="1" height="1" fill="#ffff00"/><rect x="4" y="7" width="1" height="1" fill="#c0c0c0"/><rect x="5" y="7" width="1" height="1" fill="#ffff00"/><rect x="6" y="7" width="1" height="1" fill="#c0c0c0"/><rect x="7" y="7" width="1" height="1" fill="#ffff00"/><rect x="8" y="7" width="1" height="1" fill="#c0c0c0"/><rect x="9" y="7" width="1" height="1" fill="#ffff00"/><rect x="10" y="7" width="1" height="1" fill="#c0c0c0"/><rect x="11" y="7" width="1" height="1" fill="#ffff00"/><rect x="12" y="7" width="1" height="1" fill="#000"/><rect x="13" y="7" width="2" height="1" fill="#808080"/><rect x="15" y="7" width="1" height="1" fill="#000"/><rect x="1" y="8" width="1" height="1" fill="#808080"/><rect x="2" y="8" width="1" height="1" fill="#fff"/><rect x="3" y="8" width="1" height="1" fill="#c0c0c0"/><rect x="4" y="8" width="1" height="1" fill="#ffff00"/><rect x="5" y="8" width="1" height="1" fill="#c0c0c0"/><rect x="6" y="8" width="1" height="1" fill="#ffff00"/><rect x="7" y="8" width="1" height="1" fill="#c0c0c0"/><rect x="8" y="8" width="1" height="1" fill="#ffff00"/><rect x="9" y="8" width="1" height="1" fill="#c0c0c0"/><rect x="10" y="8" width="1" height="1" fill="#ffff00"/><rect x="11" y="8" width="1" height="1" fill="#c0c0c0"/><rect x="12" y="8" width="1" height="1" fill="#ffff00"/><rect x="13" y="8" width="1" height="1" fill="#000"/><rect x="14" y="8" width="1" height="1" fill="#808080"/><rect x="15" y="8" width="1" height="1" fill="#000"/><rect x="1" y="9" width="1" height="1" fill="#808080"/><rect x="2" y="9" width="1" height="1" fill="#fff"/><rect x="3" y="9" width="1" height="1" fill="#ffff00"/><rect x="4" y="9" width="1" height="1" fill="#c0c0c0"/><rect x="5" y="9" width="1" height="1" fill="#ffff00"/><rect x="6" y="9" width="1" height="1" fill="#c0c0c0"/><rect x="7" y="9" width="1" height="1" fill="#ffff00"/><rect x="8" y="9" width="1" height="1" fill="#c0c0c0"/><rect x="9" y="9" width="1" height="1" fill="#ffff00"/><rect x="10" y="9" width="1" height="1" fill="#c0c0c0"/><rect x="11" y="9" width="1" height="1" fill="#ffff00"/><rect x="12" y="9" width="1" height="1" fill="#c0c0c0"/><rect x="13" y="9" width="1" height="1" fill="#000"/><rect x="14" y="9" width="1" height="1" fill="#808080"/><rect x="15" y="9" width="1" height="1" fill="#000"/><rect x="2" y="10" width="1" height="1" fill="#808080"/><rect x="3" y="10" width="1" height="1" fill="#fff"/><rect x="4" y="10" width="1" height="1" fill="#ffff00"/><rect x="5" y="10" width="1" height="1" fill="#c0c0c0"/><rect x="6" y="10" width="1" height="1" fill="#ffff00"/><rect x="7" y="10" width="1" height="1" fill="#c0c0c0"/><rect x="8" y="10" width="1" height="1" fill="#ffff00"/><rect x="9" y="10" width="1" height="1" fill="#c0c0c0"/><rect x="10" y="10" width="1" height="1" fill="#ffff00"/><rect x="11" y="10" width="1" height="1" fill="#c0c0c0"/><rect x="12" y="10" width="1" height="1" fill="#ffff00"/><rect x="13" y="10" width="2" height="1" fill="#808080"/><rect x="15" y="10" width="1" height="1" fill="#000"/><rect x="2" y="11" width="12" height="1" fill="#808080"/><rect x="14" y="11" width="2" height="1" fill="#000"/><rect x="3" y="12" width="13" height="1" fill="#000"/></svg>
<div class=r style="left:171px;top:395px;width:14px;height:14px;border:2px solid #808080;border-radius:2px;background:#fff"></div>
<div class=r style="left:176px;top:403px;width:8px;height:2px;background:#000;"></div>
<div class=r style="left:184px;top:403px;width:2px;height:2px;background:#808080;"></div>
<div class=t style="left:238.5px;top:391.60px;font-size:24px;color:#000;letter-spacing:0.439px;">models</div>
<svg style="left:240px;top:426px" width="32" height="26" viewBox="0 0 16 13" shape-rendering="crispEdges"><rect x="4" y="0" width="12" height="1" fill="#808080"/><rect x="3" y="1" width="4" height="1" fill="#808080"/><rect x="7" y="1" width="4" height="1" fill="#00ffff"/><rect x="11" y="1" width="5" height="1" fill="#808080"/><rect x="2" y="2" width="5" height="1" fill="#808080"/><rect x="7" y="2" width="3" height="1" fill="#00ffff"/><rect x="10" y="2" width="1" height="1" fill="#000080"/><rect x="11" y="2" width="1" height="1" fill="#808080"/><rect x="12" y="2" width="3" height="1" fill="#00ffff"/><rect x="15" y="2" width="1" height="1" fill="#808080"/><rect x="1" y="3" width="5" height="1" fill="#808080"/><rect x="6" y="3" width="3" height="1" fill="#ff00ff"/><rect x="9" y="3" width="1" height="1" fill="#0000ff"/><rect x="10" y="3" width="1" height="1" fill="#000080"/><rect x="11" y="3" width="3" height="1" fill="#00ffff"/><rect x="14" y="3" width="1" height="1" fill="#000080"/><rect x="15" y="3" width="1" height="1" fill="#808080"/><rect x="0" y="4" width="3" height="1" fill="#808080"/><rect x="3" y="4" width="2" height="1" fill="#00ffff"/><rect x="5" y="4" width="4" height="1" fill="#ff00ff"/><rect x="9" y="4" width="1" height="1" fill="#0000ff"/><rect x="10" y="4" width="1" height="1" fill="#000080"/><rect x="11" y="4" width="3" height="1" fill="#0000ff"/><rect x="14" y="4" width="1" height="1" fill="#000080"/><rect x="15" y="4" width="1" height="1" fill="#808080"/><rect x="0" y="5" width="2" height="1" fill="#808080"/><rect x="2" y="5" width="2" height="1" fill="#00ffff"/><rect x="4" y="5" width="1" height="1" fill="#000080"/><rect x="5" y="5" width="3" height="1" fill="#800080"/><rect x="8" y="5" width="1" height="1" fill="#000"/><rect x="9" y="5" width="1" height="1" fill="#0000ff"/><rect x="10" y="5" width="1" height="1" fill="#000080"/><rect x="11" y="5" width="3" height="1" fill="#ff00ff"/><rect x="14" y="5" width="1" height="1" fill="#000080"/><rect x="15" y="5" width="1" height="1" fill="#808080"/><rect x="0" y="6" width="2" height="1" fill="#808080"/><rect x="2" y="6" width="2" height="1" fill="#0000ff"/><rect x="4" y="6" width="1" height="1" fill="#000080"/><rect x="5" y="6" width="3" height="1" fill="#800080"/><rect x="8" y="6" width="1" height="1" fill="#000"/><rect x="9" y="6" width="1" height="1" fill="#0000ff"/><rect x="10" y="6" width="4" height="1" fill="#ff00ff"/><rect x="14" y="6" width="1" height="1" fill="#000080"/><rect x="15" y="6" width="1" height="1" fill="#808080"/><rect x="0" y="7" width="2" height="1" fill="#808080"/><rect x="2" y="7" width="3" height="1" fill="#ff00ff"/><rect x="5" y="7" width="3" height="1" fill="#800080"/><rect x="8" y="7" width="1" height="1" fill="#000"/><rect x="9" y="7" width="1" height="1" fill="#0000ff"/><rect x="10" y="7" width="3" height="1" fill="#800080"/><rect x="13" y="7" width="1" height="1" fill="#000"/><rect x="14" y="7" width="1" height="1" fill="#000080"/><rect x="15" y="7" width="1" height="1" fill="#808080"/><rect x="0" y="8" width="1" height="1" fill="#808080"/><rect x="1" y="8" width="3" height="1" fill="#ff00ff"/><rect x="4" y="8" width="4" height="1" fill="#800080"/><rect x="8" y="8" width="1" height="1" fill="#000"/><rect x="9" y="8" width="1" height="1" fill="#0000ff"/><rect x="10" y="8" width="3" height="1" fill="#800080"/><rect x="13" y="8" width="1" height="1" fill="#000"/><rect x="14" y="8" width="1" height="1" fill="#000080"/><rect x="15" y="8" width="1" height="1" fill="#808080"/><rect x="0" y="9" width="1" height="1" fill="#808080"/><rect x="1" y="9" width="3" height="1" fill="#800080"/><rect x="4" y="9" width="1" height="1" fill="#000"/><rect x="5" y="9" width="3" height="1" fill="#800080"/><rect x="8" y="9" width="1" height="1" fill="#000"/><rect x="9" y="9" width="1" height="1" fill="#0000ff"/><rect x="10" y="9" width="3" height="1" fill="#800080"/><rect x="13" y="9" width="1" height="1" fill="#000"/><rect x="14" y="9" width="1" height="1" fill="#000080"/><rect x="15" y="9" width="1" height="1" fill="#808080"/><rect x="0" y="10" width="1" height="1" fill="#808080"/><rect x="1" y="10" width="3" height="1" fill="#800080"/><rect x="4" y="10" width="1" height="1" fill="#000"/><rect x="5" y="10" width="3" height="1" fill="#800080"/><rect x="8" y="10" width="1" height="1" fill="#000"/><rect x="9" y="10" width="1" height="1" fill="#808080"/><rect x="10" y="10" width="3" height="1" fill="#800080"/><rect x="13" y="10" width="1" height="1" fill="#000"/><rect x="14" y="10" width="2" height="1" fill="#808080"/><rect x="0" y="11" width="1" height="1" fill="#808080"/><rect x="1" y="11" width="3" height="1" fill="#800080"/><rect x="4" y="11" width="1" height="1" fill="#000"/><rect x="5" y="11" width="3" height="1" fill="#800080"/><rect x="8" y="11" width="1" height="1" fill="#000"/><rect x="9" y="11" width="1" height="1" fill="#808080"/><rect x="10" y="11" width="3" height="1" fill="#800080"/><rect x="13" y="11" width="1" height="1" fill="#000"/><rect x="14" y="11" width="1" height="1" fill="#808080"/><rect x="0" y="12" width="14" height="1" fill="#808080"/></svg>
<div class=r style="left:209px;top:431px;width:14px;height:14px;border:2px solid #808080;border-radius:2px;background:#fff"></div>
<div class=r style="left:214px;top:439px;width:8px;height:2px;background:#000;"></div>
<div class=r style="left:222px;top:439px;width:2px;height:2px;background:#808080;"></div>
<div class=t style="left:276.5px;top:427.60px;font-size:24px;color:#000;letter-spacing:0.724px;">RooSimultaneous::main</div>
<svg style="left:278px;top:460px" width="32" height="32" viewBox="0 0 16 16" shape-rendering="crispEdges"><rect x="0" y="0" width="4" height="1" fill="#c0c0c0"/><rect x="4" y="0" width="5" height="1" fill="#808080"/><rect x="9" y="0" width="7" height="1" fill="#c0c0c0"/><rect x="0" y="1" width="3" height="1" fill="#c0c0c0"/><rect x="3" y="1" width="1" height="1" fill="#808080"/><rect x="4" y="1" width="5" height="1" fill="#000080"/><rect x="9" y="1" width="1" height="1" fill="#808080"/><rect x="10" y="1" width="6" height="1" fill="#c0c0c0"/><rect x="0" y="2" width="2" height="1" fill="#c0c0c0"/><rect x="2" y="2" width="8" height="1" fill="#000080"/><rect x="10" y="2" width="1" height="1" fill="#808080"/><rect x="11" y="2" width="5" height="1" fill="#c0c0c0"/><rect x="0" y="3" width="1" height="1" fill="#c0c0c0"/><rect x="1" y="3" width="1" height="1" fill="#808080"/><rect x="2" y="3" width="2" height="1" fill="#000080"/><rect x="4" y="3" width="4" height="1" fill="#fff"/><rect x="8" y="3" width="3" height="1" fill="#000080"/><rect x="11" y="3" width="5" height="1" fill="#c0c0c0"/><rect x="0" y="4" width="1" height="1" fill="#808080"/><rect x="1" y="4" width="2" height="1" fill="#000080"/><rect x="3" y="4" width="1" height="1" fill="#fff"/><rect x="4" y="4" width="3" height="1" fill="#c0c0c0"/><rect x="7" y="4" width="4" height="1" fill="#fff"/><rect x="11" y="4" width="5" height="1" fill="#c0c0c0"/><rect x="0" y="5" width="1" height="1" fill="#808080"/><rect x="1" y="5" width="2" height="1" fill="#000080"/><rect x="3" y="5" width="1" height="1" fill="#fff"/><rect x="4" y="5" width="4" height="1" fill="#c0c0c0"/><rect x="8" y="5" width="1" height="1" fill="#0000ff"/><rect x="9" y="5" width="3" height="1" fill="#c0c0c0"/><rect x="12" y="5" width="1" height="1" fill="#0000ff"/><rect x="13" y="5" width="3" height="1" fill="#c0c0c0"/><rect x="0" y="6" width="1" height="1" fill="#808080"/><rect x="1" y="6" width="2" height="1" fill="#000080"/><rect x="3" y="6" width="1" height="1" fill="#fff"/><rect x="4" y="6" width="4" height="1" fill="#c0c0c0"/><rect x="8" y="6" width="1" height="1" fill="#0000ff"/><rect x="9" y="6" width="3" height="1" fill="#c0c0c0"/><rect x="12" y="6" width="1" height="1" fill="#0000ff"/><rect x="13" y="6" width="3" height="1" fill="#c0c0c0"/><rect x="0" y="7" width="1" height="1" fill="#808080"/><rect x="1" y="7" width="2" height="1" fill="#000080"/><rect x="3" y="7" width="1" height="1" fill="#fff"/><rect x="4" y="7" width="2" height="1" fill="#c0c0c0"/><rect x="6" y="7" width="9" height="1" fill="#0000ff"/><rect x="15" y="7" width="1" height="1" fill="#c0c0c0"/><rect x="0" y="8" width="1" height="1" fill="#808080"/><rect x="1" y="8" width="2" height="1" fill="#000080"/><rect x="3" y="8" width="1" height="1" fill="#fff"/><rect x="4" y="8" width="4" height="1" fill="#c0c0c0"/><rect x="8" y="8" width="1" height="1" fill="#0000ff"/><rect x="9" y="8" width="3" height="1" fill="#c0c0c0"/><rect x="12" y="8" width="1" height="1" fill="#0000ff"/><rect x="13" y="8" width="3" height="1" fill="#c0c0c0"/><rect x="0" y="9" width="1" height="1" fill="#808080"/><rect x="1" y="9" width="2" height="1" fill="#000080"/><rect x="3" y="9" width="1" height="1" fill="#fff"/><rect x="4" y="9" width="4" height="1" fill="#c0c0c0"/><rect x="8" y="9" width="1" height="1" fill="#0000ff"/><rect x="9" y="9" width="3" height="1" fill="#c0c0c0"/><rect x="12" y="9" width="1" height="1" fill="#0000ff"/><rect x="13" y="9" width="3" height="1" fill="#c0c0c0"/><rect x="0" y="10" width="1" height="1" fill="#808080"/><rect x="1" y="10" width="2" height="1" fill="#000080"/><rect x="3" y="10" width="1" height="1" fill="#fff"/><rect x="4" y="10" width="12" height="1" fill="#c0c0c0"/><rect x="0" y="11" width="1" height="1" fill="#c0c0c0"/><rect x="1" y="11" width="1" height="1" fill="#808080"/><rect x="2" y="11" width="2" height="1" fill="#000080"/><rect x="4" y="11" width="4" height="1" fill="#808080"/><rect x="8" y="11" width="3" height="1" fill="#000080"/><rect x="11" y="11" width="1" height="1" fill="#fff"/><rect x="12" y="11" width="4" height="1" fill="#c0c0c0"/><rect x="0" y="12" width="2" height="1" fill="#c0c0c0"/><rect x="2" y="12" width="8" height="1" fill="#000080"/><rect x="10" y="12" width="2" height="1" fill="#fff"/><rect x="12" y="12" width="4" height="1" fill="#c0c0c0"/><rect x="0" y="13" width="2" height="1" fill="#c0c0c0"/><rect x="2" y="13" width="2" height="1" fill="#808080"/><rect x="4" y="13" width="5" height="1" fill="#000080"/><rect x="9" y="13" width="2" height="1" fill="#fff"/><rect x="11" y="13" width="5" height="1" fill="#c0c0c0"/><rect x="0" y="14" width="4" height="1" fill="#c0c0c0"/><rect x="4" y="14" width="2" height="1" fill="#808080"/><rect x="6" y="14" width="4" height="1" fill="#fff"/><rect x="10" y="14" width="6" height="1" fill="#c0c0c0"/><rect x="0" y="15" width="16" height="1" fill="#c0c0c0"/></svg>
<div class=r style="left:247px;top:467px;width:14px;height:14px;border:2px solid #808080;border-radius:2px;background:#fff"></div>
<div class=r style="left:252px;top:475px;width:8px;height:2px;background:#000;"></div>
<div class=r style="left:260px;top:475px;width:2px;height:2px;background:#808080;"></div>
<div class=r style="left:314px;top:462px;width:20px;height:20px;border-top:2px solid #808080;border-left:2px solid #808080;border-bottom:2px solid #c8c8c8;border-right:2px solid #c8c8c8;background:#fff"></div>
<div class=r style="left:316px;top:464px;width:18px;height:18px;border-top:2px solid #000;border-left:2px solid #000;box-sizing:border-box"></div>
<svg style="left:318px;top:466px" width="16" height="16"><path d="M1.5 7 L5.5 12 L13.5 2" fill="none" stroke="#000" stroke-width="3.2"/></svg>
<div class=t style="left:346.5px;top:461.60px;font-size:24px;color:#000;letter-spacing:0.809px;">RooProdPdf::channelCat=channel1</div>
<svg style="left:316px;top:498px" width="32" height="26" viewBox="0 0 16 13" shape-rendering="crispEdges"><rect x="3" y="0" width="5" height="1" fill="#808080"/><rect x="2" y="1" width="1" height="1" fill="#808080"/><rect x="3" y="1" width="5" height="1" fill="#fff"/><rect x="8" y="1" width="1" height="1" fill="#808080"/><rect x="1" y="2" width="1" height="1" fill="#808080"/><rect x="2" y="2" width="1" height="1" fill="#fff"/><rect x="3" y="2" width="1" height="1" fill="#c0c0c0"/><rect x="4" y="2" width="1" height="1" fill="#ffff00"/><rect x="5" y="2" width="1" height="1" fill="#c0c0c0"/><rect x="6" y="2" width="1" height="1" fill="#ffff00"/><rect x="7" y="2" width="1" height="1" fill="#c0c0c0"/><rect x="8" y="2" width="1" height="1" fill="#fff"/><rect x="9" y="2" width="6" height="1" fill="#808080"/><rect x="1" y="3" width="1" height="1" fill="#808080"/><rect x="2" y="3" width="1" height="1" fill="#fff"/><rect x="3" y="3" width="1" height="1" fill="#ffff00"/><rect x="4" y="3" width="1" height="1" fill="#c0c0c0"/><rect x="5" y="3" width="1" height="1" fill="#ffff00"/><rect x="6" y="3" width="1" height="1" fill="#c0c0c0"/><rect x="7" y="3" width="1" height="1" fill="#ffff00"/><rect x="8" y="3" width="1" height="1" fill="#c0c0c0"/><rect x="9" y="3" width="5" height="1" fill="#fff"/><rect x="14" y="3" width="1" height="1" fill="#808080"/><rect x="15" y="3" width="1" height="1" fill="#000"/><rect x="1" y="4" width="1" height="1" fill="#808080"/><rect x="2" y="4" width="1" height="1" fill="#fff"/><rect x="3" y="4" width="1" height="1" fill="#c0c0c0"/><rect x="4" y="4" width="1" height="1" fill="#ffff00"/><rect x="5" y="4" width="1" height="1" fill="#c0c0c0"/><rect x="6" y="4" width="1" height="1" fill="#ffff00"/><rect x="7" y="4" width="1" height="1" fill="#c0c0c0"/><rect x="8" y="4" width="1" height="1" fill="#ffff00"/><rect x="9" y="4" width="1" height="1" fill="#c0c0c0"/><rect x="10" y="4" width="1" height="1" fill="#ffff00"/><rect x="11" y="4" width="1" height="1" fill="#c0c0c0"/><rect x="12" y="4" width="1" height="1" fill="#ffff00"/><rect x="13" y="4" width="1" height="1" fill="#c0c0c0"/><rect x="14" y="4" width="1" height="1" fill="#808080"/><rect x="15" y="4" width="1" height="1" fill="#000"/><rect x="0" y="5" width="13" height="1" fill="#808080"/><rect x="13" y="5" width="1" height="1" fill="#ffff00"/><rect x="14" y="5" width="1" height="1" fill="#808080"/><rect x="15" y="5" width="1" height="1" fill="#000"/><rect x="0" y="6" width="1" height="1" fill="#808080"/><rect x="1" y="6" width="10" height="1" fill="#fff"/><rect x="11" y="6" width="1" height="1" fill="#808080"/><rect x="12" y="6" width="1" height="1" fill="#000"/><rect x="13" y="6" width="1" height="1" fill="#c0c0c0"/><rect x="14" y="6" width="1" height="1" fill="#808080"/><rect x="15" y="6" width="1" height="1" fill="#000"/><rect x="0" y="7" width="1" height="1" fill="#808080"/><rect x="1" y="7" width="1" height="1" fill="#fff"/><rect x="2" y="7" width="1" height="1" fill="#808080"/><rect x="3" y="7" width="1" height="1" fill="#ffff00"/><rect x="4" y="7" width="1" height="1" fill="#c0c0c0"/><rect x="5" y="7" width="1" height="1" fill="#ffff00"/><rect x="6" y="7" width="1" height="1" fill="#c0c0c0"/><rect x="7" y="7" width="1" height="1" fill="#ffff00"/><rect x="8" y="7" width="1" height="1" fill="#c0c0c0"/><rect x="9" y="7" width="1" height="1" fill="#ffff00"/><rect x="10" y="7" width="1" height="1" fill="#c0c0c0"/><rect x="11" y="7" width="1" height="1" fill="#ffff00"/><rect x="12" y="7" width="1" height="1" fill="#000"/><rect x="13" y="7" width="2" height="1" fill="#808080"/><rect x="15" y="7" width="1" height="1" fill="#000"/><rect x="1" y="8" width="1" height="1" fill="#808080"/><rect x="2" y="8" width="1" height="1" fill="#fff"/><rect x="3" y="8" width="1" height="1" fill="#c0c0c0"/><rect x="4" y="8" width="1" height="1" fill="#ffff00"/><rect x="5" y="8" width="1" height="1" fill="#c0c0c0"/><rect x="6" y="8" width="1" height="1" fill="#ffff00"/><rect x="7" y="8" width="1" height="1" fill="#c0c0c0"/><rect x="8" y="8" width="1" height="1" fill="#ffff00"/><rect x="9" y="8" width="1" height="1" fill="#c0c0c0"/><rect x="10" y="8" width="1" height="1" fill="#ffff00"/><rect x="11" y="8" width="1" height="1" fill="#c0c0c0"/><rect x="12" y="8" width="1" height="1" fill="#ffff00"/><rect x="13" y="8" width="1" height="1" fill="#000"/><rect x="14" y="8" width="1" height="1" fill="#808080"/><rect x="15" y="8" width="1" height="1" fill="#000"/><rect x="1" y="9" width="1" height="1" fill="#808080"/><rect x="2" y="9" width="1" height="1" fill="#fff"/><rect x="3" y="9" width="1" height="1" fill="#ffff00"/><rect x="4" y="9" width="1" height="1" fill="#c0c0c0"/><rect x="5" y="9" width="1" height="1" fill="#ffff00"/><rect x="6" y="9" width="1" height="1" fill="#c0c0c0"/><rect x="7" y="9" width="1" height="1" fill="#ffff00"/><rect x="8" y="9" width="1" height="1" fill="#c0c0c0"/><rect x="9" y="9" width="1" height="1" fill="#ffff00"/><rect x="10" y="9" width="1" height="1" fill="#c0c0c0"/><rect x="11" y="9" width="1" height="1" fill="#ffff00"/><rect x="12" y="9" width="1" height="1" fill="#c0c0c0"/><rect x="13" y="9" width="1" height="1" fill="#000"/><rect x="14" y="9" width="1" height="1" fill="#808080"/><rect x="15" y="9" width="1" height="1" fill="#000"/><rect x="2" y="10" width="1" height="1" fill="#808080"/><rect x="3" y="10" width="1" height="1" fill="#fff"/><rect x="4" y="10" width="1" height="1" fill="#ffff00"/><rect x="5" y="10" width="1" height="1" fill="#c0c0c0"/><rect x="6" y="10" width="1" height="1" fill="#ffff00"/><rect x="7" y="10" width="1" height="1" fill="#c0c0c0"/><rect x="8" y="10" width="1" height="1" fill="#ffff00"/><rect x="9" y="10" width="1" height="1" fill="#c0c0c0"/><rect x="10" y="10" width="1" height="1" fill="#ffff00"/><rect x="11" y="10" width="1" height="1" fill="#c0c0c0"/><rect x="12" y="10" width="1" height="1" fill="#ffff00"/><rect x="13" y="10" width="2" height="1" fill="#808080"/><rect x="15" y="10" width="1" height="1" fill="#000"/><rect x="2" y="11" width="12" height="1" fill="#808080"/><rect x="14" y="11" width="2" height="1" fill="#000"/><rect x="3" y="12" width="13" height="1" fill="#000"/></svg>
<div class=r style="left:285px;top:503px;width:14px;height:14px;border:2px solid #808080;border-radius:2px;background:#fff"></div>
<div class=r style="left:290px;top:511px;width:8px;height:2px;background:#000;"></div>
<div class=r style="left:298px;top:511px;width:2px;height:2px;background:#808080;"></div>
<div class=t style="left:352.5px;top:499.60px;font-size:24px;color:#000;letter-spacing:0.541px;">constraints</div>
<svg style="left:354px;top:532px" width="32" height="32" viewBox="0 0 16 16" shape-rendering="crispEdges"><rect x="0" y="0" width="1" height="1" fill="#800080"/><rect x="1" y="0" width="1" height="1" fill="#ff00ff"/><rect x="2" y="0" width="14" height="1" fill="#800080"/><rect x="0" y="1" width="1" height="1" fill="#800080"/><rect x="1" y="1" width="1" height="1" fill="#ff00ff"/><rect x="2" y="1" width="14" height="1" fill="#800080"/><rect x="0" y="2" width="1" height="1" fill="#800080"/><rect x="1" y="2" width="1" height="1" fill="#ff00ff"/><rect x="2" y="2" width="14" height="1" fill="#800080"/><rect x="0" y="3" width="1" height="1" fill="#800080"/><rect x="1" y="3" width="1" height="1" fill="#ff00ff"/><rect x="2" y="3" width="14" height="1" fill="#800080"/><rect x="0" y="4" width="1" height="1" fill="#800080"/><rect x="1" y="4" width="1" height="1" fill="#ff00ff"/><rect x="2" y="4" width="14" height="1" fill="#800080"/><rect x="0" y="5" width="1" height="1" fill="#800080"/><rect x="1" y="5" width="1" height="1" fill="#ff00ff"/><rect x="2" y="5" width="4" height="1" fill="#800080"/><rect x="6" y="5" width="2" height="1" fill="#ffff00"/><rect x="8" y="5" width="8" height="1" fill="#800080"/><rect x="0" y="6" width="1" height="1" fill="#800080"/><rect x="1" y="6" width="1" height="1" fill="#ff00ff"/><rect x="2" y="6" width="3" height="1" fill="#800080"/><rect x="5" y="6" width="1" height="1" fill="#ffff00"/><rect x="6" y="6" width="2" height="1" fill="#800080"/><rect x="8" y="6" width="1" height="1" fill="#ffff00"/><rect x="9" y="6" width="7" height="1" fill="#800080"/><rect x="0" y="7" width="1" height="1" fill="#800080"/><rect x="1" y="7" width="1" height="1" fill="#ff00ff"/><rect x="2" y="7" width="2" height="1" fill="#800080"/><rect x="4" y="7" width="1" height="1" fill="#ffff00"/><rect x="5" y="7" width="4" height="1" fill="#800080"/><rect x="9" y="7" width="1" height="1" fill="#ffff00"/><rect x="10" y="7" width="6" height="1" fill="#800080"/><rect x="0" y="8" width="1" height="1" fill="#800080"/><rect x="1" y="8" width="1" height="1" fill="#ff00ff"/><rect x="2" y="8" width="1" height="1" fill="#800080"/><rect x="3" y="8" width="1" height="1" fill="#ffff00"/><rect x="4" y="8" width="6" height="1" fill="#800080"/><rect x="10" y="8" width="1" height="1" fill="#ffff00"/><rect x="11" y="8" width="5" height="1" fill="#800080"/><rect x="0" y="9" width="1" height="1" fill="#800080"/><rect x="1" y="9" width="1" height="1" fill="#ff00ff"/><rect x="2" y="9" width="1" height="1" fill="#ffff00"/><rect x="3" y="9" width="8" height="1" fill="#800080"/><rect x="11" y="9" width="1" height="1" fill="#ffff00"/><rect x="12" y="9" width="4" height="1" fill="#800080"/><rect x="0" y="10" width="1" height="1" fill="#ff00ff"/><rect x="1" y="10" width="1" height="1" fill="#ffff00"/><rect x="2" y="10" width="10" height="1" fill="#ff00ff"/><rect x="12" y="10" width="1" height="1" fill="#ffff00"/><rect x="13" y="10" width="2" height="1" fill="#ff00ff"/><rect x="15" y="10" width="1" height="1" fill="#ffff00"/><rect x="0" y="11" width="1" height="1" fill="#ffff00"/><rect x="1" y="11" width="1" height="1" fill="#ff00ff"/><rect x="2" y="11" width="11" height="1" fill="#800080"/><rect x="13" y="11" width="2" height="1" fill="#ffff00"/><rect x="15" y="11" width="1" height="1" fill="#800080"/><rect x="0" y="12" width="1" height="1" fill="#800080"/><rect x="1" y="12" width="1" height="1" fill="#ff00ff"/><rect x="2" y="12" width="14" height="1" fill="#800080"/><rect x="0" y="13" width="1" height="1" fill="#800080"/><rect x="1" y="13" width="1" height="1" fill="#ff00ff"/><rect x="2" y="13" width="14" height="1" fill="#800080"/><rect x="0" y="14" width="1" height="1" fill="#800080"/><rect x="1" y="14" width="1" height="1" fill="#ff00ff"/><rect x="2" y="14" width="14" height="1" fill="#800080"/><rect x="0" y="15" width="16" height="1" fill="#800080"/></svg>
<div class=t style="left:390.5px;top:535.60px;font-size:24px;color:#000;letter-spacing:0.645px;">RooPoisson::gamma_stat_channel1_bin_0_constraint</div>
<svg style="left:354px;top:568px" width="32" height="32" viewBox="0 0 16 16" shape-rendering="crispEdges"><rect x="0" y="0" width="1" height="1" fill="#800080"/><rect x="1" y="0" width="1" height="1" fill="#ff00ff"/><rect x="2" y="0" width="14" height="1" fill="#800080"/><rect x="0" y="1" width="1" height="1" fill="#800080"/><rect x="1" y="1" width="1" height="1" fill="#ff00ff"/><rect x="2" y="1" width="14" height="1" fill="#800080"/><rect x="0" y="2" width="1" height="1" fill="#800080"/><rect x="1" y="2" width="1" height="1" fill="#ff00ff"/><rect x="2" y="2" width="14" height="1" fill="#800080"/><rect x="0" y="3" width="1" height="1" fill="#800080"/><rect x="1" y="3" width="1" height="1" fill="#ff00ff"/><rect x="2" y="3" width="14" height="1" fill="#800080"/><rect x="0" y="4" width="1" height="1" fill="#800080"/><rect x="1" y="4" width="1" height="1" fill="#ff00ff"/><rect x="2" y="4" width="14" height="1" fill="#800080"/><rect x="0" y="5" width="1" height="1" fill="#800080"/><rect x="1" y="5" width="1" height="1" fill="#ff00ff"/><rect x="2" y="5" width="4" height="1" fill="#800080"/><rect x="6" y="5" width="2" height="1" fill="#ffff00"/><rect x="8" y="5" width="8" height="1" fill="#800080"/><rect x="0" y="6" width="1" height="1" fill="#800080"/><rect x="1" y="6" width="1" height="1" fill="#ff00ff"/><rect x="2" y="6" width="3" height="1" fill="#800080"/><rect x="5" y="6" width="1" height="1" fill="#ffff00"/><rect x="6" y="6" width="2" height="1" fill="#800080"/><rect x="8" y="6" width="1" height="1" fill="#ffff00"/><rect x="9" y="6" width="7" height="1" fill="#800080"/><rect x="0" y="7" width="1" height="1" fill="#800080"/><rect x="1" y="7" width="1" height="1" fill="#ff00ff"/><rect x="2" y="7" width="2" height="1" fill="#800080"/><rect x="4" y="7" width="1" height="1" fill="#ffff00"/><rect x="5" y="7" width="4" height="1" fill="#800080"/><rect x="9" y="7" width="1" height="1" fill="#ffff00"/><rect x="10" y="7" width="6" height="1" fill="#800080"/><rect x="0" y="8" width="1" height="1" fill="#800080"/><rect x="1" y="8" width="1" height="1" fill="#ff00ff"/><rect x="2" y="8" width="1" height="1" fill="#800080"/><rect x="3" y="8" width="1" height="1" fill="#ffff00"/><rect x="4" y="8" width="6" height="1" fill="#800080"/><rect x="10" y="8" width="1" height="1" fill="#ffff00"/><rect x="11" y="8" width="5" height="1" fill="#800080"/><rect x="0" y="9" width="1" height="1" fill="#800080"/><rect x="1" y="9" width="1" height="1" fill="#ff00ff"/><rect x="2" y="9" width="1" height="1" fill="#ffff00"/><rect x="3" y="9" width="8" height="1" fill="#800080"/><rect x="11" y="9" width="1" height="1" fill="#ffff00"/><rect x="12" y="9" width="4" height="1" fill="#800080"/><rect x="0" y="10" width="1" height="1" fill="#ff00ff"/><rect x="1" y="10" width="1" height="1" fill="#ffff00"/><rect x="2" y="10" width="10" height="1" fill="#ff00ff"/><rect x="12" y="10" width="1" height="1" fill="#ffff00"/><rect x="13" y="10" width="2" height="1" fill="#ff00ff"/><rect x="15" y="10" width="1" height="1" fill="#ffff00"/><rect x="0" y="11" width="1" height="1" fill="#ffff00"/><rect x="1" y="11" width="1" height="1" fill="#ff00ff"/><rect x="2" y="11" width="11" height="1" fill="#800080"/><rect x="13" y="11" width="2" height="1" fill="#ffff00"/><rect x="15" y="11" width="1" height="1" fill="#800080"/><rect x="0" y="12" width="1" height="1" fill="#800080"/><rect x="1" y="12" width="1" height="1" fill="#ff00ff"/><rect x="2" y="12" width="14" height="1" fill="#800080"/><rect x="0" y="13" width="1" height="1" fill="#800080"/><rect x="1" y="13" width="1" height="1" fill="#ff00ff"/><rect x="2" y="13" width="14" height="1" fill="#800080"/><rect x="0" y="14" width="1" height="1" fill="#800080"/><rect x="1" y="14" width="1" height="1" fill="#ff00ff"/><rect x="2" y="14" width="14" height="1" fill="#800080"/><rect x="0" y="15" width="16" height="1" fill="#800080"/></svg>
<div class=t style="left:390.5px;top:571.60px;font-size:24px;color:#000;letter-spacing:0.645px;">RooPoisson::gamma_stat_channel1_bin_1_constraint</div>
<svg style="left:354px;top:604px" width="32" height="32" viewBox="0 0 16 16" shape-rendering="crispEdges"><rect x="0" y="0" width="1" height="1" fill="#800080"/><rect x="1" y="0" width="1" height="1" fill="#ff00ff"/><rect x="2" y="0" width="14" height="1" fill="#800080"/><rect x="0" y="1" width="1" height="1" fill="#800080"/><rect x="1" y="1" width="1" height="1" fill="#ff00ff"/><rect x="2" y="1" width="14" height="1" fill="#800080"/><rect x="0" y="2" width="1" height="1" fill="#800080"/><rect x="1" y="2" width="1" height="1" fill="#ff00ff"/><rect x="2" y="2" width="14" height="1" fill="#800080"/><rect x="0" y="3" width="1" height="1" fill="#800080"/><rect x="1" y="3" width="1" height="1" fill="#ff00ff"/><rect x="2" y="3" width="14" height="1" fill="#800080"/><rect x="0" y="4" width="1" height="1" fill="#800080"/><rect x="1" y="4" width="1" height="1" fill="#ff00ff"/><rect x="2" y="4" width="14" height="1" fill="#800080"/><rect x="0" y="5" width="1" height="1" fill="#800080"/><rect x="1" y="5" width="1" height="1" fill="#ff00ff"/><rect x="2" y="5" width="4" height="1" fill="#800080"/><rect x="6" y="5" width="2" height="1" fill="#ffff00"/><rect x="8" y="5" width="8" height="1" fill="#800080"/><rect x="0" y="6" width="1" height="1" fill="#800080"/><rect x="1" y="6" width="1" height="1" fill="#ff00ff"/><rect x="2" y="6" width="3" height="1" fill="#800080"/><rect x="5" y="6" width="1" height="1" fill="#ffff00"/><rect x="6" y="6" width="2" height="1" fill="#800080"/><rect x="8" y="6" width="1" height="1" fill="#ffff00"/><rect x="9" y="6" width="7" height="1" fill="#800080"/><rect x="0" y="7" width="1" height="1" fill="#800080"/><rect x="1" y="7" width="1" height="1" fill="#ff00ff"/><rect x="2" y="7" width="2" height="1" fill="#800080"/><rect x="4" y="7" width="1" height="1" fill="#ffff00"/><rect x="5" y="7" width="4" height="1" fill="#800080"/><rect x="9" y="7" width="1" height="1" fill="#ffff00"/><rect x="10" y="7" width="6" height="1" fill="#800080"/><rect x="0" y="8" width="1" height="1" fill="#800080"/><rect x="1" y="8" width="1" height="1" fill="#ff00ff"/><rect x="2" y="8" width="1" height="1" fill="#800080"/><rect x="3" y="8" width="1" height="1" fill="#ffff00"/><rect x="4" y="8" width="6" height="1" fill="#800080"/><rect x="10" y="8" width="1" height="1" fill="#ffff00"/><rect x="11" y="8" width="5" height="1" fill="#800080"/><rect x="0" y="9" width="1" height="1" fill="#800080"/><rect x="1" y="9" width="1" height="1" fill="#ff00ff"/><rect x="2" y="9" width="1" height="1" fill="#ffff00"/><rect x="3" y="9" width="8" height="1" fill="#800080"/><rect x="11" y="9" width="1" height="1" fill="#ffff00"/><rect x="12" y="9" width="4" height="1" fill="#800080"/><rect x="0" y="10" width="1" height="1" fill="#ff00ff"/><rect x="1" y="10" width="1" height="1" fill="#ffff00"/><rect x="2" y="10" width="10" height="1" fill="#ff00ff"/><rect x="12" y="10" width="1" height="1" fill="#ffff00"/><rect x="13" y="10" width="2" height="1" fill="#ff00ff"/><rect x="15" y="10" width="1" height="1" fill="#ffff00"/><rect x="0" y="11" width="1" height="1" fill="#ffff00"/><rect x="1" y="11" width="1" height="1" fill="#ff00ff"/><rect x="2" y="11" width="11" height="1" fill="#800080"/><rect x="13" y="11" width="2" height="1" fill="#ffff00"/><rect x="15" y="11" width="1" height="1" fill="#800080"/><rect x="0" y="12" width="1" height="1" fill="#800080"/><rect x="1" y="12" width="1" height="1" fill="#ff00ff"/><rect x="2" y="12" width="14" height="1" fill="#800080"/><rect x="0" y="13" width="1" height="1" fill="#800080"/><rect x="1" y="13" width="1" height="1" fill="#ff00ff"/><rect x="2" y="13" width="14" height="1" fill="#800080"/><rect x="0" y="14" width="1" height="1" fill="#800080"/><rect x="1" y="14" width="1" height="1" fill="#ff00ff"/><rect x="2" y="14" width="14" height="1" fill="#800080"/><rect x="0" y="15" width="16" height="1" fill="#800080"/></svg>
<div class=t style="left:390.5px;top:607.60px;font-size:24px;color:#000;letter-spacing:0.615px;">RooGaussian::syst2_constraint</div>
<svg style="left:354px;top:640px" width="32" height="32" viewBox="0 0 16 16" shape-rendering="crispEdges"><rect x="0" y="0" width="1" height="1" fill="#800080"/><rect x="1" y="0" width="1" height="1" fill="#ff00ff"/><rect x="2" y="0" width="14" height="1" fill="#800080"/><rect x="0" y="1" width="1" height="1" fill="#800080"/><rect x="1" y="1" width="1" height="1" fill="#ff00ff"/><rect x="2" y="1" width="14" height="1" fill="#800080"/><rect x="0" y="2" width="1" height="1" fill="#800080"/><rect x="1" y="2" width="1" height="1" fill="#ff00ff"/><rect x="2" y="2" width="14" height="1" fill="#800080"/><rect x="0" y="3" width="1" height="1" fill="#800080"/><rect x="1" y="3" width="1" height="1" fill="#ff00ff"/><rect x="2" y="3" width="14" height="1" fill="#800080"/><rect x="0" y="4" width="1" height="1" fill="#800080"/><rect x="1" y="4" width="1" height="1" fill="#ff00ff"/><rect x="2" y="4" width="14" height="1" fill="#800080"/><rect x="0" y="5" width="1" height="1" fill="#800080"/><rect x="1" y="5" width="1" height="1" fill="#ff00ff"/><rect x="2" y="5" width="4" height="1" fill="#800080"/><rect x="6" y="5" width="2" height="1" fill="#ffff00"/><rect x="8" y="5" width="8" height="1" fill="#800080"/><rect x="0" y="6" width="1" height="1" fill="#800080"/><rect x="1" y="6" width="1" height="1" fill="#ff00ff"/><rect x="2" y="6" width="3" height="1" fill="#800080"/><rect x="5" y="6" width="1" height="1" fill="#ffff00"/><rect x="6" y="6" width="2" height="1" fill="#800080"/><rect x="8" y="6" width="1" height="1" fill="#ffff00"/><rect x="9" y="6" width="7" height="1" fill="#800080"/><rect x="0" y="7" width="1" height="1" fill="#800080"/><rect x="1" y="7" width="1" height="1" fill="#ff00ff"/><rect x="2" y="7" width="2" height="1" fill="#800080"/><rect x="4" y="7" width="1" height="1" fill="#ffff00"/><rect x="5" y="7" width="4" height="1" fill="#800080"/><rect x="9" y="7" width="1" height="1" fill="#ffff00"/><rect x="10" y="7" width="6" height="1" fill="#800080"/><rect x="0" y="8" width="1" height="1" fill="#800080"/><rect x="1" y="8" width="1" height="1" fill="#ff00ff"/><rect x="2" y="8" width="1" height="1" fill="#800080"/><rect x="3" y="8" width="1" height="1" fill="#ffff00"/><rect x="4" y="8" width="6" height="1" fill="#800080"/><rect x="10" y="8" width="1" height="1" fill="#ffff00"/><rect x="11" y="8" width="5" height="1" fill="#800080"/><rect x="0" y="9" width="1" height="1" fill="#800080"/><rect x="1" y="9" width="1" height="1" fill="#ff00ff"/><rect x="2" y="9" width="1" height="1" fill="#ffff00"/><rect x="3" y="9" width="8" height="1" fill="#800080"/><rect x="11" y="9" width="1" height="1" fill="#ffff00"/><rect x="12" y="9" width="4" height="1" fill="#800080"/><rect x="0" y="10" width="1" height="1" fill="#ff00ff"/><rect x="1" y="10" width="1" height="1" fill="#ffff00"/><rect x="2" y="10" width="10" height="1" fill="#ff00ff"/><rect x="12" y="10" width="1" height="1" fill="#ffff00"/><rect x="13" y="10" width="2" height="1" fill="#ff00ff"/><rect x="15" y="10" width="1" height="1" fill="#ffff00"/><rect x="0" y="11" width="1" height="1" fill="#ffff00"/><rect x="1" y="11" width="1" height="1" fill="#ff00ff"/><rect x="2" y="11" width="11" height="1" fill="#800080"/><rect x="13" y="11" width="2" height="1" fill="#ffff00"/><rect x="15" y="11" width="1" height="1" fill="#800080"/><rect x="0" y="12" width="1" height="1" fill="#800080"/><rect x="1" y="12" width="1" height="1" fill="#ff00ff"/><rect x="2" y="12" width="14" height="1" fill="#800080"/><rect x="0" y="13" width="1" height="1" fill="#800080"/><rect x="1" y="13" width="1" height="1" fill="#ff00ff"/><rect x="2" y="13" width="14" height="1" fill="#800080"/><rect x="0" y="14" width="1" height="1" fill="#800080"/><rect x="1" y="14" width="1" height="1" fill="#ff00ff"/><rect x="2" y="14" width="14" height="1" fill="#800080"/><rect x="0" y="15" width="16" height="1" fill="#800080"/></svg>
<div class=t style="left:390.5px;top:643.60px;font-size:24px;color:#000;letter-spacing:0.615px;">RooGaussian::syst3_constraint</div>
<svg style="left:354px;top:676px" width="32" height="32" viewBox="0 0 16 16" shape-rendering="crispEdges"><rect x="0" y="0" width="1" height="1" fill="#800080"/><rect x="1" y="0" width="1" height="1" fill="#ff00ff"/><rect x="2" y="0" width="14" height="1" fill="#800080"/><rect x="0" y="1" width="1" height="1" fill="#800080"/><rect x="1" y="1" width="1" height="1" fill="#ff00ff"/><rect x="2" y="1" width="14" height="1" fill="#800080"/><rect x="0" y="2" width="1" height="1" fill="#800080"/><rect x="1" y="2" width="1" height="1" fill="#ff00ff"/><rect x="2" y="2" width="14" height="1" fill="#800080"/><rect x="0" y="3" width="1" height="1" fill="#800080"/><rect x="1" y="3" width="1" height="1" fill="#ff00ff"/><rect x="2" y="3" width="14" height="1" fill="#800080"/><rect x="0" y="4" width="1" height="1" fill="#800080"/><rect x="1" y="4" width="1" height="1" fill="#ff00ff"/><rect x="2" y="4" width="14" height="1" fill="#800080"/><rect x="0" y="5" width="1" height="1" fill="#800080"/><rect x="1" y="5" width="1" height="1" fill="#ff00ff"/><rect x="2" y="5" width="4" height="1" fill="#800080"/><rect x="6" y="5" width="2" height="1" fill="#ffff00"/><rect x="8" y="5" width="8" height="1" fill="#800080"/><rect x="0" y="6" width="1" height="1" fill="#800080"/><rect x="1" y="6" width="1" height="1" fill="#ff00ff"/><rect x="2" y="6" width="3" height="1" fill="#800080"/><rect x="5" y="6" width="1" height="1" fill="#ffff00"/><rect x="6" y="6" width="2" height="1" fill="#800080"/><rect x="8" y="6" width="1" height="1" fill="#ffff00"/><rect x="9" y="6" width="7" height="1" fill="#800080"/><rect x="0" y="7" width="1" height="1" fill="#800080"/><rect x="1" y="7" width="1" height="1" fill="#ff00ff"/><rect x="2" y="7" width="2" height="1" fill="#800080"/><rect x="4" y="7" width="1" height="1" fill="#ffff00"/><rect x="5" y="7" width="4" height="1" fill="#800080"/><rect x="9" y="7" width="1" height="1" fill="#ffff00"/><rect x="10" y="7" width="6" height="1" fill="#800080"/><rect x="0" y="8" width="1" height="1" fill="#800080"/><rect x="1" y="8" width="1" height="1" fill="#ff00ff"/><rect x="2" y="8" width="1" height="1" fill="#800080"/><rect x="3" y="8" width="1" height="1" fill="#ffff00"/><rect x="4" y="8" width="6" height="1" fill="#800080"/><rect x="10" y="8" width="1" height="1" fill="#ffff00"/><rect x="11" y="8" width="5" height="1" fill="#800080"/><rect x="0" y="9" width="1" height="1" fill="#800080"/><rect x="1" y="9" width="1" height="1" fill="#ff00ff"/><rect x="2" y="9" width="1" height="1" fill="#ffff00"/><rect x="3" y="9" width="8" height="1" fill="#800080"/><rect x="11" y="9" width="1" height="1" fill="#ffff00"/><rect x="12" y="9" width="4" height="1" fill="#800080"/><rect x="0" y="10" width="1" height="1" fill="#ff00ff"/><rect x="1" y="10" width="1" height="1" fill="#ffff00"/><rect x="2" y="10" width="10" height="1" fill="#ff00ff"/><rect x="12" y="10" width="1" height="1" fill="#ffff00"/><rect x="13" y="10" width="2" height="1" fill="#ff00ff"/><rect x="15" y="10" width="1" height="1" fill="#ffff00"/><rect x="0" y="11" width="1" height="1" fill="#ffff00"/><rect x="1" y="11" width="1" height="1" fill="#ff00ff"/><rect x="2" y="11" width="11" height="1" fill="#800080"/><rect x="13" y="11" width="2" height="1" fill="#ffff00"/><rect x="15" y="11" width="1" height="1" fill="#800080"/><rect x="0" y="12" width="1" height="1" fill="#800080"/><rect x="1" y="12" width="1" height="1" fill="#ff00ff"/><rect x="2" y="12" width="14" height="1" fill="#800080"/><rect x="0" y="13" width="1" height="1" fill="#800080"/><rect x="1" y="13" width="1" height="1" fill="#ff00ff"/><rect x="2" y="13" width="14" height="1" fill="#800080"/><rect x="0" y="14" width="1" height="1" fill="#800080"/><rect x="1" y="14" width="1" height="1" fill="#ff00ff"/><rect x="2" y="14" width="14" height="1" fill="#800080"/><rect x="0" y="15" width="16" height="1" fill="#800080"/></svg>
<div class=t style="left:390.5px;top:679.60px;font-size:24px;color:#000;letter-spacing:0.615px;">RooGaussian::syst1_constraint</div>
<svg style="left:316px;top:710px" width="26" height="34" viewBox="0 0 13 17" shape-rendering="crispEdges"><rect x="3" y="1" width="3" height="1" fill="#000"/><rect x="3" y="2" width="1" height="1" fill="#000"/><rect x="4" y="2" width="2" height="1" fill="#00ffff"/><rect x="6" y="2" width="1" height="1" fill="#000"/><rect x="3" y="3" width="1" height="1" fill="#000"/><rect x="4" y="3" width="1" height="1" fill="#0000ff"/><rect x="5" y="3" width="1" height="1" fill="#00ffff"/><rect x="6" y="3" width="3" height="1" fill="#000"/><rect x="3" y="4" width="1" height="1" fill="#000"/><rect x="4" y="4" width="2" height="1" fill="#0000ff"/><rect x="6" y="4" width="1" height="1" fill="#000"/><rect x="7" y="4" width="2" height="1" fill="#00ffff"/><rect x="9" y="4" width="1" height="1" fill="#000"/><rect x="3" y="5" width="1" height="1" fill="#000"/><rect x="4" y="5" width="2" height="1" fill="#0000ff"/><rect x="6" y="5" width="1" height="1" fill="#000"/><rect x="7" y="5" width="1" height="1" fill="#0000ff"/><rect x="8" y="5" width="1" height="1" fill="#00ffff"/><rect x="9" y="5" width="1" height="1" fill="#000"/><rect x="3" y="6" width="1" height="1" fill="#000"/><rect x="4" y="6" width="2" height="1" fill="#0000ff"/><rect x="6" y="6" width="1" height="1" fill="#000"/><rect x="7" y="6" width="2" height="1" fill="#0000ff"/><rect x="9" y="6" width="3" height="1" fill="#000"/><rect x="3" y="7" width="1" height="1" fill="#000"/><rect x="4" y="7" width="2" height="1" fill="#0000ff"/><rect x="6" y="7" width="1" height="1" fill="#000"/><rect x="7" y="7" width="2" height="1" fill="#0000ff"/><rect x="9" y="7" width="1" height="1" fill="#000"/><rect x="10" y="7" width="2" height="1" fill="#00ffff"/><rect x="12" y="7" width="1" height="1" fill="#000"/><rect x="3" y="8" width="1" height="1" fill="#000"/><rect x="4" y="8" width="2" height="1" fill="#0000ff"/><rect x="6" y="8" width="1" height="1" fill="#000"/><rect x="7" y="8" width="2" height="1" fill="#0000ff"/><rect x="9" y="8" width="1" height="1" fill="#000"/><rect x="10" y="8" width="1" height="1" fill="#0000ff"/><rect x="11" y="8" width="1" height="1" fill="#00ffff"/><rect x="12" y="8" width="1" height="1" fill="#000"/><rect x="3" y="9" width="1" height="1" fill="#000"/><rect x="4" y="9" width="2" height="1" fill="#0000ff"/><rect x="6" y="9" width="1" height="1" fill="#000"/><rect x="7" y="9" width="2" height="1" fill="#0000ff"/><rect x="9" y="9" width="1" height="1" fill="#000"/><rect x="10" y="9" width="2" height="1" fill="#0000ff"/><rect x="12" y="9" width="1" height="1" fill="#000"/><rect x="3" y="10" width="1" height="1" fill="#000"/><rect x="4" y="10" width="2" height="1" fill="#0000ff"/><rect x="6" y="10" width="1" height="1" fill="#000"/><rect x="7" y="10" width="2" height="1" fill="#0000ff"/><rect x="9" y="10" width="1" height="1" fill="#000"/><rect x="10" y="10" width="2" height="1" fill="#0000ff"/><rect x="12" y="10" width="1" height="1" fill="#000"/><rect x="3" y="11" width="1" height="1" fill="#000"/><rect x="4" y="11" width="2" height="1" fill="#0000ff"/><rect x="6" y="11" width="1" height="1" fill="#000"/><rect x="7" y="11" width="2" height="1" fill="#0000ff"/><rect x="9" y="11" width="1" height="1" fill="#000"/><rect x="10" y="11" width="2" height="1" fill="#0000ff"/><rect x="12" y="11" width="1" height="1" fill="#000"/><rect x="3" y="12" width="1" height="1" fill="#000"/><rect x="4" y="12" width="2" height="1" fill="#0000ff"/><rect x="6" y="12" width="1" height="1" fill="#000"/><rect x="7" y="12" width="2" height="1" fill="#0000ff"/><rect x="9" y="12" width="1" height="1" fill="#000"/><rect x="10" y="12" width="2" height="1" fill="#0000ff"/><rect x="12" y="12" width="1" height="1" fill="#000"/><rect x="0" y="13" width="2" height="1" fill="#808080"/><rect x="2" y="13" width="3" height="1" fill="#000"/><rect x="5" y="13" width="1" height="1" fill="#0000ff"/><rect x="6" y="13" width="1" height="1" fill="#000"/><rect x="7" y="13" width="2" height="1" fill="#0000ff"/><rect x="9" y="13" width="1" height="1" fill="#000"/><rect x="10" y="13" width="2" height="1" fill="#0000ff"/><rect x="12" y="13" width="1" height="1" fill="#000"/><rect x="0" y="14" width="2" height="1" fill="#808080"/><rect x="2" y="14" width="6" height="1" fill="#000"/><rect x="8" y="14" width="1" height="1" fill="#0000ff"/><rect x="9" y="14" width="1" height="1" fill="#000"/><rect x="10" y="14" width="2" height="1" fill="#0000ff"/><rect x="12" y="14" width="1" height="1" fill="#000"/><rect x="3" y="15" width="3" height="1" fill="#808080"/><rect x="6" y="15" width="5" height="1" fill="#000"/><rect x="11" y="15" width="1" height="1" fill="#0000ff"/><rect x="12" y="15" width="1" height="1" fill="#000"/><rect x="6" y="16" width="4" height="1" fill="#808080"/><rect x="10" y="16" width="3" height="1" fill="#000"/></svg>
<div class=r style="left:285px;top:719px;width:14px;height:14px;border:2px solid #808080;border-radius:2px;background:#fff"></div>
<div class=r style="left:290px;top:727px;width:8px;height:2px;background:#000;"></div>
<div class=r style="left:298px;top:727px;width:2px;height:2px;background:#808080;"></div>
<div class=t style="left:352.5px;top:715.60px;font-size:24px;color:#000;letter-spacing:0.752px;">RooRealSumPdf::samples</div>
<svg style="left:354px;top:748px" width="32" height="30" viewBox="0 0 16 15" shape-rendering="crispEdges"><rect x="0" y="0" width="1" height="1" fill="#000"/><rect x="0" y="1" width="1" height="1" fill="#000"/><rect x="0" y="2" width="1" height="1" fill="#000"/><rect x="0" y="3" width="1" height="1" fill="#000"/><rect x="0" y="4" width="1" height="1" fill="#000"/><rect x="5" y="4" width="2" height="1" fill="#000"/><rect x="0" y="5" width="1" height="1" fill="#000"/><rect x="5" y="5" width="1" height="1" fill="#000"/><rect x="6" y="5" width="1" height="1" fill="#0000ff"/><rect x="0" y="6" width="1" height="1" fill="#000"/><rect x="5" y="6" width="1" height="1" fill="#000"/><rect x="6" y="6" width="1" height="1" fill="#0000ff"/><rect x="7" y="6" width="1" height="1" fill="#000"/><rect x="0" y="7" width="1" height="1" fill="#000"/><rect x="5" y="7" width="1" height="1" fill="#000"/><rect x="6" y="7" width="1" height="1" fill="#0000ff"/><rect x="7" y="7" width="1" height="1" fill="#000"/><rect x="10" y="7" width="1" height="1" fill="#000"/><rect x="0" y="8" width="1" height="1" fill="#000"/><rect x="5" y="8" width="1" height="1" fill="#000"/><rect x="6" y="8" width="1" height="1" fill="#0000ff"/><rect x="7" y="8" width="1" height="1" fill="#000"/><rect x="10" y="8" width="1" height="1" fill="#0000ff"/><rect x="11" y="8" width="1" height="1" fill="#000"/><rect x="0" y="9" width="1" height="1" fill="#000"/><rect x="4" y="9" width="1" height="1" fill="#000"/><rect x="5" y="9" width="2" height="1" fill="#0000ff"/><rect x="7" y="9" width="1" height="1" fill="#000"/><rect x="9" y="9" width="2" height="1" fill="#0000ff"/><rect x="11" y="9" width="1" height="1" fill="#000"/><rect x="0" y="10" width="1" height="1" fill="#000"/><rect x="4" y="10" width="4" height="1" fill="#0000ff"/><rect x="8" y="10" width="1" height="1" fill="#000"/><rect x="9" y="10" width="2" height="1" fill="#0000ff"/><rect x="11" y="10" width="1" height="1" fill="#000"/><rect x="0" y="11" width="1" height="1" fill="#000"/><rect x="3" y="11" width="1" height="1" fill="#000"/><rect x="4" y="11" width="8" height="1" fill="#0000ff"/><rect x="12" y="11" width="1" height="1" fill="#000"/><rect x="0" y="12" width="1" height="1" fill="#000"/><rect x="3" y="12" width="9" height="1" fill="#0000ff"/><rect x="12" y="12" width="1" height="1" fill="#000"/><rect x="0" y="13" width="1" height="1" fill="#000"/><rect x="2" y="13" width="11" height="1" fill="#0000ff"/><rect x="13" y="13" width="1" height="1" fill="#000"/><rect x="0" y="14" width="15" height="1" fill="#000"/></svg>
<div class=t style="left:390.5px;top:751.60px;font-size:24px;color:#000;letter-spacing:0.659px;">RooProduct::background1</div>
<svg style="left:354px;top:784px" width="32" height="30" viewBox="0 0 16 15" shape-rendering="crispEdges"><rect x="0" y="0" width="1" height="1" fill="#000"/><rect x="0" y="1" width="1" height="1" fill="#000"/><rect x="0" y="2" width="1" height="1" fill="#000"/><rect x="0" y="3" width="1" height="1" fill="#000"/><rect x="0" y="4" width="1" height="1" fill="#000"/><rect x="5" y="4" width="2" height="1" fill="#000"/><rect x="0" y="5" width="1" height="1" fill="#000"/><rect x="5" y="5" width="1" height="1" fill="#000"/><rect x="6" y="5" width="1" height="1" fill="#0000ff"/><rect x="0" y="6" width="1" height="1" fill="#000"/><rect x="5" y="6" width="1" height="1" fill="#000"/><rect x="6" y="6" width="1" height="1" fill="#0000ff"/><rect x="7" y="6" width="1" height="1" fill="#000"/><rect x="0" y="7" width="1" height="1" fill="#000"/><rect x="5" y="7" width="1" height="1" fill="#000"/><rect x="6" y="7" width="1" height="1" fill="#0000ff"/><rect x="7" y="7" width="1" height="1" fill="#000"/><rect x="10" y="7" width="1" height="1" fill="#000"/><rect x="0" y="8" width="1" height="1" fill="#000"/><rect x="5" y="8" width="1" height="1" fill="#000"/><rect x="6" y="8" width="1" height="1" fill="#0000ff"/><rect x="7" y="8" width="1" height="1" fill="#000"/><rect x="10" y="8" width="1" height="1" fill="#0000ff"/><rect x="11" y="8" width="1" height="1" fill="#000"/><rect x="0" y="9" width="1" height="1" fill="#000"/><rect x="4" y="9" width="1" height="1" fill="#000"/><rect x="5" y="9" width="2" height="1" fill="#0000ff"/><rect x="7" y="9" width="1" height="1" fill="#000"/><rect x="9" y="9" width="2" height="1" fill="#0000ff"/><rect x="11" y="9" width="1" height="1" fill="#000"/><rect x="0" y="10" width="1" height="1" fill="#000"/><rect x="4" y="10" width="4" height="1" fill="#0000ff"/><rect x="8" y="10" width="1" height="1" fill="#000"/><rect x="9" y="10" width="2" height="1" fill="#0000ff"/><rect x="11" y="10" width="1" height="1" fill="#000"/><rect x="0" y="11" width="1" height="1" fill="#000"/><rect x="3" y="11" width="1" height="1" fill="#000"/><rect x="4" y="11" width="8" height="1" fill="#0000ff"/><rect x="12" y="11" width="1" height="1" fill="#000"/><rect x="0" y="12" width="1" height="1" fill="#000"/><rect x="3" y="12" width="9" height="1" fill="#0000ff"/><rect x="12" y="12" width="1" height="1" fill="#000"/><rect x="0" y="13" width="1" height="1" fill="#000"/><rect x="2" y="13" width="11" height="1" fill="#0000ff"/><rect x="13" y="13" width="1" height="1" fill="#000"/><rect x="0" y="14" width="15" height="1" fill="#000"/></svg>
<div class=t style="left:390.5px;top:787.60px;font-size:24px;color:#000;letter-spacing:0.659px;">RooProduct::background2</div>
<svg style="left:354px;top:820px" width="32" height="30" viewBox="0 0 16 15" shape-rendering="crispEdges"><rect x="0" y="0" width="1" height="1" fill="#000"/><rect x="0" y="1" width="1" height="1" fill="#000"/><rect x="0" y="2" width="1" height="1" fill="#000"/><rect x="0" y="3" width="1" height="1" fill="#000"/><rect x="0" y="4" width="1" height="1" fill="#000"/><rect x="5" y="4" width="2" height="1" fill="#000"/><rect x="0" y="5" width="1" height="1" fill="#000"/><rect x="5" y="5" width="1" height="1" fill="#000"/><rect x="6" y="5" width="1" height="1" fill="#0000ff"/><rect x="0" y="6" width="1" height="1" fill="#000"/><rect x="5" y="6" width="1" height="1" fill="#000"/><rect x="6" y="6" width="1" height="1" fill="#0000ff"/><rect x="7" y="6" width="1" height="1" fill="#000"/><rect x="0" y="7" width="1" height="1" fill="#000"/><rect x="5" y="7" width="1" height="1" fill="#000"/><rect x="6" y="7" width="1" height="1" fill="#0000ff"/><rect x="7" y="7" width="1" height="1" fill="#000"/><rect x="10" y="7" width="1" height="1" fill="#000"/><rect x="0" y="8" width="1" height="1" fill="#000"/><rect x="5" y="8" width="1" height="1" fill="#000"/><rect x="6" y="8" width="1" height="1" fill="#0000ff"/><rect x="7" y="8" width="1" height="1" fill="#000"/><rect x="10" y="8" width="1" height="1" fill="#0000ff"/><rect x="11" y="8" width="1" height="1" fill="#000"/><rect x="0" y="9" width="1" height="1" fill="#000"/><rect x="4" y="9" width="1" height="1" fill="#000"/><rect x="5" y="9" width="2" height="1" fill="#0000ff"/><rect x="7" y="9" width="1" height="1" fill="#000"/><rect x="9" y="9" width="2" height="1" fill="#0000ff"/><rect x="11" y="9" width="1" height="1" fill="#000"/><rect x="0" y="10" width="1" height="1" fill="#000"/><rect x="4" y="10" width="4" height="1" fill="#0000ff"/><rect x="8" y="10" width="1" height="1" fill="#000"/><rect x="9" y="10" width="2" height="1" fill="#0000ff"/><rect x="11" y="10" width="1" height="1" fill="#000"/><rect x="0" y="11" width="1" height="1" fill="#000"/><rect x="3" y="11" width="1" height="1" fill="#000"/><rect x="4" y="11" width="8" height="1" fill="#0000ff"/><rect x="12" y="11" width="1" height="1" fill="#000"/><rect x="0" y="12" width="1" height="1" fill="#000"/><rect x="3" y="12" width="9" height="1" fill="#0000ff"/><rect x="12" y="12" width="1" height="1" fill="#000"/><rect x="0" y="13" width="1" height="1" fill="#000"/><rect x="2" y="13" width="11" height="1" fill="#0000ff"/><rect x="13" y="13" width="1" height="1" fill="#000"/><rect x="0" y="14" width="15" height="1" fill="#000"/></svg>
<div class=r style="left:323px;top:827px;width:14px;height:14px;border:2px solid #808080;border-radius:2px;background:#fff"></div>
<div class=r style="left:328px;top:835px;width:8px;height:2px;background:#000;"></div>
<div class=r style="left:336px;top:835px;width:2px;height:2px;background:#808080;"></div>
<div class=t style="left:390.5px;top:823.60px;font-size:24px;color:#000;letter-spacing:0.734px;">RooProduct::signal</div>
<svg style="left:392px;top:856px" width="32" height="30" viewBox="0 0 16 15" shape-rendering="crispEdges"><rect x="0" y="0" width="1" height="1" fill="#000"/><rect x="0" y="1" width="1" height="1" fill="#000"/><rect x="0" y="2" width="1" height="1" fill="#000"/><rect x="0" y="3" width="1" height="1" fill="#000"/><rect x="0" y="4" width="1" height="1" fill="#000"/><rect x="5" y="4" width="2" height="1" fill="#000"/><rect x="0" y="5" width="1" height="1" fill="#000"/><rect x="5" y="5" width="1" height="1" fill="#000"/><rect x="6" y="5" width="1" height="1" fill="#0000ff"/><rect x="0" y="6" width="1" height="1" fill="#000"/><rect x="5" y="6" width="1" height="1" fill="#000"/><rect x="6" y="6" width="1" height="1" fill="#0000ff"/><rect x="7" y="6" width="1" height="1" fill="#000"/><rect x="0" y="7" width="1" height="1" fill="#000"/><rect x="5" y="7" width="1" height="1" fill="#000"/><rect x="6" y="7" width="1" height="1" fill="#0000ff"/><rect x="7" y="7" width="1" height="1" fill="#000"/><rect x="10" y="7" width="1" height="1" fill="#000"/><rect x="0" y="8" width="1" height="1" fill="#000"/><rect x="5" y="8" width="1" height="1" fill="#000"/><rect x="6" y="8" width="1" height="1" fill="#0000ff"/><rect x="7" y="8" width="1" height="1" fill="#000"/><rect x="10" y="8" width="1" height="1" fill="#0000ff"/><rect x="11" y="8" width="1" height="1" fill="#000"/><rect x="0" y="9" width="1" height="1" fill="#000"/><rect x="4" y="9" width="1" height="1" fill="#000"/><rect x="5" y="9" width="2" height="1" fill="#0000ff"/><rect x="7" y="9" width="1" height="1" fill="#000"/><rect x="9" y="9" width="2" height="1" fill="#0000ff"/><rect x="11" y="9" width="1" height="1" fill="#000"/><rect x="0" y="10" width="1" height="1" fill="#000"/><rect x="4" y="10" width="4" height="1" fill="#0000ff"/><rect x="8" y="10" width="1" height="1" fill="#000"/><rect x="9" y="10" width="2" height="1" fill="#0000ff"/><rect x="11" y="10" width="1" height="1" fill="#000"/><rect x="0" y="11" width="1" height="1" fill="#000"/><rect x="3" y="11" width="1" height="1" fill="#000"/><rect x="4" y="11" width="8" height="1" fill="#0000ff"/><rect x="12" y="11" width="1" height="1" fill="#000"/><rect x="0" y="12" width="1" height="1" fill="#000"/><rect x="3" y="12" width="9" height="1" fill="#0000ff"/><rect x="12" y="12" width="1" height="1" fill="#000"/><rect x="0" y="13" width="1" height="1" fill="#000"/><rect x="2" y="13" width="11" height="1" fill="#0000ff"/><rect x="13" y="13" width="1" height="1" fill="#000"/><rect x="0" y="14" width="15" height="1" fill="#000"/></svg>
<div class=t style="left:428.5px;top:859.60px;font-size:24px;color:#000;letter-spacing:0.806px;">RooBinWidthFunction::signal_binWidth [Density]</div>
<svg style="left:392px;top:892px" width="32" height="30" viewBox="0 0 16 15" shape-rendering="crispEdges"><rect x="0" y="0" width="1" height="1" fill="#000"/><rect x="0" y="1" width="1" height="1" fill="#000"/><rect x="0" y="2" width="1" height="1" fill="#000"/><rect x="0" y="3" width="1" height="1" fill="#000"/><rect x="0" y="4" width="1" height="1" fill="#000"/><rect x="5" y="4" width="2" height="1" fill="#000"/><rect x="0" y="5" width="1" height="1" fill="#000"/><rect x="5" y="5" width="1" height="1" fill="#000"/><rect x="6" y="5" width="1" height="1" fill="#0000ff"/><rect x="0" y="6" width="1" height="1" fill="#000"/><rect x="5" y="6" width="1" height="1" fill="#000"/><rect x="6" y="6" width="1" height="1" fill="#0000ff"/><rect x="7" y="6" width="1" height="1" fill="#000"/><rect x="0" y="7" width="1" height="1" fill="#000"/><rect x="5" y="7" width="1" height="1" fill="#000"/><rect x="6" y="7" width="1" height="1" fill="#0000ff"/><rect x="7" y="7" width="1" height="1" fill="#000"/><rect x="10" y="7" width="1" height="1" fill="#000"/><rect x="0" y="8" width="1" height="1" fill="#000"/><rect x="5" y="8" width="1" height="1" fill="#000"/><rect x="6" y="8" width="1" height="1" fill="#0000ff"/><rect x="7" y="8" width="1" height="1" fill="#000"/><rect x="10" y="8" width="1" height="1" fill="#0000ff"/><rect x="11" y="8" width="1" height="1" fill="#000"/><rect x="0" y="9" width="1" height="1" fill="#000"/><rect x="4" y="9" width="1" height="1" fill="#000"/><rect x="5" y="9" width="2" height="1" fill="#0000ff"/><rect x="7" y="9" width="1" height="1" fill="#000"/><rect x="9" y="9" width="2" height="1" fill="#0000ff"/><rect x="11" y="9" width="1" height="1" fill="#000"/><rect x="0" y="10" width="1" height="1" fill="#000"/><rect x="4" y="10" width="4" height="1" fill="#0000ff"/><rect x="8" y="10" width="1" height="1" fill="#000"/><rect x="9" y="10" width="2" height="1" fill="#0000ff"/><rect x="11" y="10" width="1" height="1" fill="#000"/><rect x="0" y="11" width="1" height="1" fill="#000"/><rect x="3" y="11" width="1" height="1" fill="#000"/><rect x="4" y="11" width="8" height="1" fill="#0000ff"/><rect x="12" y="11" width="1" height="1" fill="#000"/><rect x="0" y="12" width="1" height="1" fill="#000"/><rect x="3" y="12" width="9" height="1" fill="#0000ff"/><rect x="12" y="12" width="1" height="1" fill="#000"/><rect x="0" y="13" width="1" height="1" fill="#000"/><rect x="2" y="13" width="11" height="1" fill="#0000ff"/><rect x="13" y="13" width="1" height="1" fill="#000"/><rect x="0" y="14" width="15" height="1" fill="#000"/></svg>
<div class=t style="left:428.5px;top:895.60px;font-size:24px;color:#000;letter-spacing:0.734px;">RooHistFunc::hist_signal [ConstHisto]</div>
<svg style="left:392px;top:928px" width="32" height="32" viewBox="0 0 16 16" shape-rendering="crispEdges"><rect x="0" y="0" width="1" height="1" fill="#800080"/><rect x="1" y="0" width="1" height="1" fill="#ff00ff"/><rect x="2" y="0" width="14" height="1" fill="#800080"/><rect x="0" y="1" width="1" height="1" fill="#800080"/><rect x="1" y="1" width="1" height="1" fill="#ff00ff"/><rect x="2" y="1" width="14" height="1" fill="#800080"/><rect x="0" y="2" width="1" height="1" fill="#800080"/><rect x="1" y="2" width="1" height="1" fill="#ff00ff"/><rect x="2" y="2" width="14" height="1" fill="#800080"/><rect x="0" y="3" width="1" height="1" fill="#800080"/><rect x="1" y="3" width="1" height="1" fill="#ff00ff"/><rect x="2" y="3" width="14" height="1" fill="#800080"/><rect x="0" y="4" width="1" height="1" fill="#800080"/><rect x="1" y="4" width="1" height="1" fill="#ff00ff"/><rect x="2" y="4" width="14" height="1" fill="#800080"/><rect x="0" y="5" width="1" height="1" fill="#800080"/><rect x="1" y="5" width="1" height="1" fill="#ff00ff"/><rect x="2" y="5" width="4" height="1" fill="#800080"/><rect x="6" y="5" width="2" height="1" fill="#ffff00"/><rect x="8" y="5" width="8" height="1" fill="#800080"/><rect x="0" y="6" width="1" height="1" fill="#800080"/><rect x="1" y="6" width="1" height="1" fill="#ff00ff"/><rect x="2" y="6" width="3" height="1" fill="#800080"/><rect x="5" y="6" width="1" height="1" fill="#ffff00"/><rect x="6" y="6" width="2" height="1" fill="#800080"/><rect x="8" y="6" width="1" height="1" fill="#ffff00"/><rect x="9" y="6" width="7" height="1" fill="#800080"/><rect x="0" y="7" width="1" height="1" fill="#800080"/><rect x="1" y="7" width="1" height="1" fill="#ff00ff"/><rect x="2" y="7" width="2" height="1" fill="#800080"/><rect x="4" y="7" width="1" height="1" fill="#ffff00"/><rect x="5" y="7" width="4" height="1" fill="#800080"/><rect x="9" y="7" width="1" height="1" fill="#ffff00"/><rect x="10" y="7" width="6" height="1" fill="#800080"/><rect x="0" y="8" width="1" height="1" fill="#800080"/><rect x="1" y="8" width="1" height="1" fill="#ff00ff"/><rect x="2" y="8" width="1" height="1" fill="#800080"/><rect x="3" y="8" width="1" height="1" fill="#ffff00"/><rect x="4" y="8" width="6" height="1" fill="#800080"/><rect x="10" y="8" width="1" height="1" fill="#ffff00"/><rect x="11" y="8" width="5" height="1" fill="#800080"/><rect x="0" y="9" width="1" height="1" fill="#800080"/><rect x="1" y="9" width="1" height="1" fill="#ff00ff"/><rect x="2" y="9" width="1" height="1" fill="#ffff00"/><rect x="3" y="9" width="8" height="1" fill="#800080"/><rect x="11" y="9" width="1" height="1" fill="#ffff00"/><rect x="12" y="9" width="4" height="1" fill="#800080"/><rect x="0" y="10" width="1" height="1" fill="#ff00ff"/><rect x="1" y="10" width="1" height="1" fill="#ffff00"/><rect x="2" y="10" width="10" height="1" fill="#ff00ff"/><rect x="12" y="10" width="1" height="1" fill="#ffff00"/><rect x="13" y="10" width="2" height="1" fill="#ff00ff"/><rect x="15" y="10" width="1" height="1" fill="#ffff00"/><rect x="0" y="11" width="1" height="1" fill="#ffff00"/><rect x="1" y="11" width="1" height="1" fill="#ff00ff"/><rect x="2" y="11" width="11" height="1" fill="#800080"/><rect x="13" y="11" width="2" height="1" fill="#ffff00"/><rect x="15" y="11" width="1" height="1" fill="#800080"/><rect x="0" y="12" width="1" height="1" fill="#800080"/><rect x="1" y="12" width="1" height="1" fill="#ff00ff"/><rect x="2" y="12" width="14" height="1" fill="#800080"/><rect x="0" y="13" width="1" height="1" fill="#800080"/><rect x="1" y="13" width="1" height="1" fill="#ff00ff"/><rect x="2" y="13" width="14" height="1" fill="#800080"/><rect x="0" y="14" width="1" height="1" fill="#800080"/><rect x="1" y="14" width="1" height="1" fill="#ff00ff"/><rect x="2" y="14" width="14" height="1" fill="#800080"/><rect x="0" y="15" width="16" height="1" fill="#800080"/></svg>
<div class=r style="left:361px;top:935px;width:14px;height:14px;border:2px solid #808080;border-radius:2px;background:#fff"></div>
<div class=r style="left:366px;top:943px;width:8px;height:2px;background:#000;"></div>
<div class=r style="left:374px;top:943px;width:2px;height:2px;background:#808080;"></div>
<div class=t style="left:428.5px;top:931.60px;font-size:24px;color:#000;letter-spacing:0.727px;">.coef: RooProduct::signal_norm</div>
<svg style="left:432px;top:966px" width="28" height="30" viewBox="0 0 14 15" shape-rendering="crispEdges"><rect x="1" y="0" width="2" height="1" fill="#118a1f"/><rect x="1" y="1" width="1" height="1" fill="#0a8080"/><rect x="2" y="1" width="2" height="1" fill="#118a1f"/><rect x="4" y="1" width="1" height="1" fill="#000"/><rect x="5" y="1" width="1" height="1" fill="#0a8080"/><rect x="2" y="2" width="1" height="1" fill="#0a8080"/><rect x="3" y="2" width="1" height="1" fill="#c0c0c0"/><rect x="4" y="2" width="2" height="1" fill="#118a1f"/><rect x="8" y="2" width="1" height="1" fill="#0a8080"/><rect x="1" y="3" width="2" height="1" fill="#118a1f"/><rect x="3" y="3" width="1" height="1" fill="#c0c0c0"/><rect x="4" y="3" width="1" height="1" fill="#118a1f"/><rect x="5" y="3" width="1" height="1" fill="#0a8080"/><rect x="6" y="3" width="1" height="1" fill="#118a1f"/><rect x="7" y="3" width="2" height="1" fill="#0a8080"/><rect x="2" y="4" width="1" height="1" fill="#0a8080"/><rect x="3" y="4" width="1" height="1" fill="#118a1f"/><rect x="4" y="4" width="1" height="1" fill="#c0c0c0"/><rect x="5" y="4" width="4" height="1" fill="#118a1f"/><rect x="9" y="4" width="2" height="1" fill="#0a8080"/><rect x="1" y="5" width="3" height="1" fill="#0a8080"/><rect x="4" y="5" width="1" height="1" fill="#808020"/><rect x="5" y="5" width="1" height="1" fill="#c0c0c0"/><rect x="6" y="5" width="2" height="1" fill="#808020"/><rect x="8" y="5" width="1" height="1" fill="#118a1f"/><rect x="9" y="5" width="2" height="1" fill="#0a8080"/><rect x="2" y="6" width="1" height="1" fill="#808020"/><rect x="3" y="6" width="3" height="1" fill="#118a1f"/><rect x="6" y="6" width="1" height="1" fill="#c0c0c0"/><rect x="7" y="6" width="1" height="1" fill="#808020"/><rect x="8" y="6" width="2" height="1" fill="#118a1f"/><rect x="10" y="6" width="1" height="1" fill="#000"/><rect x="11" y="6" width="2" height="1" fill="#118a1f"/><rect x="1" y="7" width="1" height="1" fill="#0a8080"/><rect x="2" y="7" width="1" height="1" fill="#118a1f"/><rect x="3" y="7" width="1" height="1" fill="#0a8080"/><rect x="4" y="7" width="1" height="1" fill="#118a1f"/><rect x="5" y="7" width="1" height="1" fill="#0a8080"/><rect x="6" y="7" width="1" height="1" fill="#808020"/><rect x="7" y="7" width="1" height="1" fill="#c0c0c0"/><rect x="8" y="7" width="1" height="1" fill="#118a1f"/><rect x="9" y="7" width="1" height="1" fill="#808020"/><rect x="10" y="7" width="3" height="1" fill="#0a8080"/><rect x="3" y="8" width="1" height="1" fill="#118a1f"/><rect x="4" y="8" width="1" height="1" fill="#808020"/><rect x="5" y="8" width="2" height="1" fill="#118a1f"/><rect x="7" y="8" width="1" height="1" fill="#c0c0c0"/><rect x="8" y="8" width="2" height="1" fill="#118a1f"/><rect x="10" y="8" width="3" height="1" fill="#0a8080"/><rect x="0" y="9" width="1" height="1" fill="#118a1f"/><rect x="1" y="9" width="1" height="1" fill="#0a8080"/><rect x="2" y="9" width="1" height="1" fill="#118a1f"/><rect x="3" y="9" width="1" height="1" fill="#0a8080"/><rect x="4" y="9" width="1" height="1" fill="#118a1f"/><rect x="5" y="9" width="1" height="1" fill="#0a8080"/><rect x="6" y="9" width="1" height="1" fill="#118a1f"/><rect x="7" y="9" width="1" height="1" fill="#808020"/><rect x="8" y="9" width="1" height="1" fill="#c0c0c0"/><rect x="9" y="9" width="3" height="1" fill="#0a8080"/><rect x="12" y="9" width="1" height="1" fill="#118a1f"/><rect x="13" y="9" width="1" height="1" fill="#000"/><rect x="2" y="10" width="1" height="1" fill="#808020"/><rect x="3" y="10" width="1" height="1" fill="#118a1f"/><rect x="4" y="10" width="1" height="1" fill="#0a8080"/><rect x="5" y="10" width="1" height="1" fill="#118a1f"/><rect x="6" y="10" width="1" height="1" fill="#808020"/><rect x="7" y="10" width="1" height="1" fill="#118a1f"/><rect x="8" y="10" width="1" height="1" fill="#0a8080"/><rect x="9" y="10" width="1" height="1" fill="#c0c0c0"/><rect x="10" y="10" width="2" height="1" fill="#808020"/><rect x="12" y="10" width="1" height="1" fill="#0a8080"/><rect x="3" y="11" width="2" height="1" fill="#118a1f"/><rect x="5" y="11" width="1" height="1" fill="#808020"/><rect x="6" y="11" width="3" height="1" fill="#118a1f"/><rect x="9" y="11" width="1" height="1" fill="#808020"/><rect x="10" y="11" width="1" height="1" fill="#c0c0c0"/><rect x="11" y="11" width="1" height="1" fill="#0a8080"/><rect x="2" y="12" width="2" height="1" fill="#118a1f"/><rect x="4" y="12" width="1" height="1" fill="#808020"/><rect x="5" y="12" width="4" height="1" fill="#118a1f"/><rect x="9" y="12" width="1" height="1" fill="#808020"/><rect x="10" y="12" width="1" height="1" fill="#c0c0c0"/><rect x="11" y="12" width="1" height="1" fill="#118a1f"/><rect x="3" y="13" width="2" height="1" fill="#808020"/><rect x="5" y="13" width="2" height="1" fill="#118a1f"/><rect x="7" y="13" width="2" height="1" fill="#808020"/><rect x="11" y="13" width="2" height="1" fill="#118a1f"/><rect x="5" y="14" width="3" height="1" fill="#000"/><rect x="12" y="14" width="1" height="1" fill="#118a1f"/><rect x="13" y="14" width="1" height="1" fill="#000"/></svg>
<div class=t style="left:466.5px;top:967.60px;font-size:24px;color:#000;letter-spacing:0.758px;">RooRealVar::mu [Norm]</div>
<svg style="left:430px;top:1000px" width="34" height="32" viewBox="0 0 17 16" shape-rendering="crispEdges"><rect x="2" y="0" width="1" height="1" fill="#c0c0c0"/><rect x="3" y="0" width="1" height="1" fill="#ffff00"/><rect x="4" y="0" width="1" height="1" fill="#c0c0c0"/><rect x="5" y="0" width="1" height="1" fill="#ffff00"/><rect x="6" y="0" width="2" height="1" fill="#c0c0c0"/><rect x="9" y="0" width="1" height="1" fill="#22ff44"/><rect x="10" y="0" width="2" height="1" fill="#118a1f"/><rect x="1" y="1" width="1" height="1" fill="#c0c0c0"/><rect x="2" y="1" width="1" height="1" fill="#ffff00"/><rect x="3" y="1" width="1" height="1" fill="#c0c0c0"/><rect x="4" y="1" width="1" height="1" fill="#ffff00"/><rect x="5" y="1" width="1" height="1" fill="#c0c0c0"/><rect x="6" y="1" width="1" height="1" fill="#ffff00"/><rect x="7" y="1" width="2" height="1" fill="#c0c0c0"/><rect x="9" y="1" width="2" height="1" fill="#22ff44"/><rect x="11" y="1" width="2" height="1" fill="#118a1f"/><rect x="14" y="1" width="1" height="1" fill="#808020"/><rect x="2" y="2" width="6" height="1" fill="#fff"/><rect x="8" y="2" width="2" height="1" fill="#22ff44"/><rect x="10" y="2" width="2" height="1" fill="#118a1f"/><rect x="12" y="2" width="2" height="1" fill="#808020"/><rect x="2" y="3" width="1" height="1" fill="#c0c0c0"/><rect x="3" y="3" width="1" height="1" fill="#ffff00"/><rect x="4" y="3" width="1" height="1" fill="#c0c0c0"/><rect x="5" y="3" width="1" height="1" fill="#ffff00"/><rect x="6" y="3" width="1" height="1" fill="#c0c0c0"/><rect x="7" y="3" width="2" height="1" fill="#118a1f"/><rect x="9" y="3" width="2" height="1" fill="#22ff44"/><rect x="11" y="3" width="2" height="1" fill="#808020"/><rect x="13" y="3" width="1" height="1" fill="#ffff00"/><rect x="14" y="3" width="1" height="1" fill="#c0c0c0"/><rect x="15" y="3" width="1" height="1" fill="#000"/><rect x="2" y="4" width="1" height="1" fill="#ffff00"/><rect x="3" y="4" width="1" height="1" fill="#c0c0c0"/><rect x="4" y="4" width="1" height="1" fill="#ffff00"/><rect x="5" y="4" width="1" height="1" fill="#c0c0c0"/><rect x="6" y="4" width="2" height="1" fill="#22ff44"/><rect x="8" y="4" width="2" height="1" fill="#118a1f"/><rect x="10" y="4" width="2" height="1" fill="#808020"/><rect x="12" y="4" width="1" height="1" fill="#ffff00"/><rect x="13" y="4" width="1" height="1" fill="#c0c0c0"/><rect x="14" y="4" width="1" height="1" fill="#ffff00"/><rect x="15" y="4" width="1" height="1" fill="#c0c0c0"/><rect x="16" y="4" width="1" height="1" fill="#000"/><rect x="2" y="5" width="1" height="1" fill="#c0c0c0"/><rect x="3" y="5" width="1" height="1" fill="#ffff00"/><rect x="4" y="5" width="1" height="1" fill="#c0c0c0"/><rect x="5" y="5" width="3" height="1" fill="#22ff44"/><rect x="8" y="5" width="1" height="1" fill="#118a1f"/><rect x="9" y="5" width="2" height="1" fill="#808020"/><rect x="11" y="5" width="1" height="1" fill="#ffff00"/><rect x="12" y="5" width="1" height="1" fill="#c0c0c0"/><rect x="13" y="5" width="1" height="1" fill="#ffff00"/><rect x="14" y="5" width="1" height="1" fill="#c0c0c0"/><rect x="15" y="5" width="1" height="1" fill="#ffff00"/><rect x="16" y="5" width="1" height="1" fill="#000"/><rect x="2" y="6" width="1" height="1" fill="#ffff00"/><rect x="3" y="6" width="1" height="1" fill="#c0c0c0"/><rect x="4" y="6" width="1" height="1" fill="#ffff00"/><rect x="5" y="6" width="2" height="1" fill="#22ff44"/><rect x="7" y="6" width="1" height="1" fill="#118a1f"/><rect x="8" y="6" width="2" height="1" fill="#808020"/><rect x="10" y="6" width="1" height="1" fill="#ffff00"/><rect x="11" y="6" width="1" height="1" fill="#c0c0c0"/><rect x="12" y="6" width="1" height="1" fill="#ffff00"/><rect x="13" y="6" width="1" height="1" fill="#c0c0c0"/><rect x="14" y="6" width="1" height="1" fill="#ffff00"/><rect x="15" y="6" width="1" height="1" fill="#c0c0c0"/><rect x="16" y="6" width="1" height="1" fill="#000"/><rect x="2" y="7" width="1" height="1" fill="#c0c0c0"/><rect x="3" y="7" width="1" height="1" fill="#ffff00"/><rect x="4" y="7" width="2" height="1" fill="#118a1f"/><rect x="6" y="7" width="3" height="1" fill="#808020"/><rect x="9" y="7" width="1" height="1" fill="#ffff00"/><rect x="10" y="7" width="1" height="1" fill="#c0c0c0"/><rect x="11" y="7" width="1" height="1" fill="#ffff00"/><rect x="12" y="7" width="1" height="1" fill="#c0c0c0"/><rect x="13" y="7" width="1" height="1" fill="#ffff00"/><rect x="14" y="7" width="1" height="1" fill="#c0c0c0"/><rect x="15" y="7" width="1" height="1" fill="#ffff00"/><rect x="16" y="7" width="1" height="1" fill="#000"/><rect x="2" y="8" width="1" height="1" fill="#ffff00"/><rect x="3" y="8" width="1" height="1" fill="#c0c0c0"/><rect x="4" y="8" width="1" height="1" fill="#ffff00"/><rect x="5" y="8" width="4" height="1" fill="#808020"/><rect x="9" y="8" width="2" height="1" fill="#118a1f"/><rect x="11" y="8" width="1" height="1" fill="#c0c0c0"/><rect x="12" y="8" width="1" height="1" fill="#ffff00"/><rect x="13" y="8" width="1" height="1" fill="#c0c0c0"/><rect x="14" y="8" width="1" height="1" fill="#ffff00"/><rect x="15" y="8" width="1" height="1" fill="#c0c0c0"/><rect x="16" y="8" width="1" height="1" fill="#000"/><rect x="2" y="9" width="1" height="1" fill="#c0c0c0"/><rect x="3" y="9" width="1" height="1" fill="#ffff00"/><rect x="4" y="9" width="3" height="1" fill="#808020"/><rect x="7" y="9" width="1" height="1" fill="#ffff00"/><rect x="8" y="9" width="1" height="1" fill="#c0c0c0"/><rect x="9" y="9" width="2" height="1" fill="#808020"/><rect x="11" y="9" width="2" height="1" fill="#118a1f"/><rect x="13" y="9" width="1" height="1" fill="#ffff00"/><rect x="14" y="9" width="1" height="1" fill="#c0c0c0"/><rect x="15" y="9" width="1" height="1" fill="#000"/><rect x="2" y="10" width="1" height="1" fill="#ffff00"/><rect x="3" y="10" width="3" height="1" fill="#808020"/><rect x="6" y="10" width="1" height="1" fill="#ffff00"/><rect x="7" y="10" width="1" height="1" fill="#c0c0c0"/><rect x="8" y="10" width="1" height="1" fill="#ffff00"/><rect x="9" y="10" width="1" height="1" fill="#c0c0c0"/><rect x="10" y="10" width="1" height="1" fill="#ffff00"/><rect x="11" y="10" width="1" height="1" fill="#c0c0c0"/><rect x="12" y="10" width="1" height="1" fill="#118a1f"/><rect x="13" y="10" width="2" height="1" fill="#22ff44"/><rect x="15" y="10" width="1" height="1" fill="#000"/><rect x="1" y="11" width="4" height="1" fill="#808020"/><rect x="5" y="11" width="1" height="1" fill="#ffff00"/><rect x="6" y="11" width="1" height="1" fill="#c0c0c0"/><rect x="7" y="11" width="1" height="1" fill="#ffff00"/><rect x="8" y="11" width="1" height="1" fill="#c0c0c0"/><rect x="9" y="11" width="1" height="1" fill="#ffff00"/><rect x="10" y="11" width="1" height="1" fill="#c0c0c0"/><rect x="11" y="11" width="1" height="1" fill="#ffff00"/><rect x="12" y="11" width="1" height="1" fill="#118a1f"/><rect x="13" y="11" width="1" height="1" fill="#0a8080"/><rect x="14" y="11" width="2" height="1" fill="#22ff44"/><rect x="1" y="12" width="4" height="1" fill="#808020"/><rect x="5" y="12" width="1" height="1" fill="#c0c0c0"/><rect x="6" y="12" width="1" height="1" fill="#ffff00"/><rect x="7" y="12" width="1" height="1" fill="#c0c0c0"/><rect x="8" y="12" width="1" height="1" fill="#ffff00"/><rect x="9" y="12" width="1" height="1" fill="#c0c0c0"/><rect x="10" y="12" width="1" height="1" fill="#ffff00"/><rect x="11" y="12" width="1" height="1" fill="#c0c0c0"/><rect x="12" y="12" width="1" height="1" fill="#ffff00"/><rect x="13" y="12" width="1" height="1" fill="#118a1f"/><rect x="14" y="12" width="2" height="1" fill="#22ff44"/><rect x="0" y="13" width="3" height="1" fill="#808020"/><rect x="3" y="13" width="1" height="1" fill="#ffff00"/><rect x="4" y="13" width="1" height="1" fill="#c0c0c0"/><rect x="5" y="13" width="1" height="1" fill="#ffff00"/><rect x="6" y="13" width="1" height="1" fill="#c0c0c0"/><rect x="7" y="13" width="1" height="1" fill="#ffff00"/><rect x="8" y="13" width="1" height="1" fill="#c0c0c0"/><rect x="9" y="13" width="1" height="1" fill="#ffff00"/><rect x="10" y="13" width="1" height="1" fill="#c0c0c0"/><rect x="11" y="13" width="1" height="1" fill="#ffff00"/><rect x="12" y="13" width="1" height="1" fill="#c0c0c0"/><rect x="13" y="13" width="1" height="1" fill="#118a1f"/><rect x="14" y="13" width="2" height="1" fill="#22ff44"/><rect x="0" y="14" width="16" height="1" fill="#808020"/><rect x="0" y="15" width="16" height="1" fill="#808020"/></svg>
<div class=r style="left:399px;top:1007px;width:14px;height:14px;border:2px solid #808080;border-radius:2px;background:#fff"></div>
<div class=r style="left:404px;top:1015px;width:8px;height:2px;background:#000;"></div>
<div class=r style="left:412px;top:1015px;width:2px;height:2px;background:#808080;"></div>
<div class=t style="left:466.5px;top:1003.60px;font-size:24px;color:#000;letter-spacing:0.707px;">RooStats::HistFactory::FlexibleInterpVar::overall_systematics</div>
<svg style="left:470px;top:1038px" width="28" height="30" viewBox="0 0 14 15" shape-rendering="crispEdges"><rect x="1" y="0" width="2" height="1" fill="#118a1f"/><rect x="6" y="0" width="2" height="1" fill="#ff2020"/><rect x="1" y="1" width="1" height="1" fill="#0a8080"/><rect x="2" y="1" width="2" height="1" fill="#118a1f"/><rect x="4" y="1" width="1" height="1" fill="#000"/><rect x="5" y="1" width="1" height="1" fill="#0a8080"/><rect x="6" y="1" width="2" height="1" fill="#ff2020"/><rect x="2" y="2" width="1" height="1" fill="#0a8080"/><rect x="3" y="2" width="1" height="1" fill="#c0c0c0"/><rect x="4" y="2" width="2" height="1" fill="#118a1f"/><rect x="6" y="2" width="2" height="1" fill="#ff2020"/><rect x="8" y="2" width="1" height="1" fill="#0a8080"/><rect x="1" y="3" width="2" height="1" fill="#118a1f"/><rect x="3" y="3" width="1" height="1" fill="#c0c0c0"/><rect x="4" y="3" width="1" height="1" fill="#118a1f"/><rect x="5" y="3" width="1" height="1" fill="#0a8080"/><rect x="6" y="3" width="2" height="1" fill="#ff2020"/><rect x="8" y="3" width="1" height="1" fill="#0a8080"/><rect x="2" y="4" width="1" height="1" fill="#0a8080"/><rect x="3" y="4" width="1" height="1" fill="#118a1f"/><rect x="4" y="4" width="1" height="1" fill="#c0c0c0"/><rect x="5" y="4" width="1" height="1" fill="#118a1f"/><rect x="6" y="4" width="2" height="1" fill="#ff2020"/><rect x="8" y="4" width="1" height="1" fill="#118a1f"/><rect x="9" y="4" width="2" height="1" fill="#0a8080"/><rect x="1" y="5" width="3" height="1" fill="#0a8080"/><rect x="4" y="5" width="1" height="1" fill="#808020"/><rect x="5" y="5" width="1" height="1" fill="#c0c0c0"/><rect x="6" y="5" width="2" height="1" fill="#ff2020"/><rect x="8" y="5" width="1" height="1" fill="#118a1f"/><rect x="9" y="5" width="2" height="1" fill="#0a8080"/><rect x="2" y="6" width="1" height="1" fill="#808020"/><rect x="3" y="6" width="3" height="1" fill="#118a1f"/><rect x="6" y="6" width="2" height="1" fill="#ff2020"/><rect x="8" y="6" width="2" height="1" fill="#118a1f"/><rect x="10" y="6" width="1" height="1" fill="#000"/><rect x="11" y="6" width="2" height="1" fill="#118a1f"/><rect x="1" y="7" width="1" height="1" fill="#0a8080"/><rect x="2" y="7" width="1" height="1" fill="#118a1f"/><rect x="3" y="7" width="1" height="1" fill="#0a8080"/><rect x="4" y="7" width="1" height="1" fill="#118a1f"/><rect x="5" y="7" width="1" height="1" fill="#0a8080"/><rect x="6" y="7" width="2" height="1" fill="#ff2020"/><rect x="8" y="7" width="1" height="1" fill="#118a1f"/><rect x="9" y="7" width="1" height="1" fill="#808020"/><rect x="10" y="7" width="3" height="1" fill="#0a8080"/><rect x="3" y="8" width="1" height="1" fill="#118a1f"/><rect x="4" y="8" width="1" height="1" fill="#808020"/><rect x="5" y="8" width="1" height="1" fill="#118a1f"/><rect x="6" y="8" width="2" height="1" fill="#ff2020"/><rect x="8" y="8" width="2" height="1" fill="#118a1f"/><rect x="10" y="8" width="3" height="1" fill="#0a8080"/><rect x="0" y="9" width="1" height="1" fill="#118a1f"/><rect x="1" y="9" width="1" height="1" fill="#0a8080"/><rect x="2" y="9" width="1" height="1" fill="#118a1f"/><rect x="3" y="9" width="1" height="1" fill="#0a8080"/><rect x="4" y="9" width="1" height="1" fill="#118a1f"/><rect x="5" y="9" width="1" height="1" fill="#0a8080"/><rect x="6" y="9" width="1" height="1" fill="#118a1f"/><rect x="7" y="9" width="1" height="1" fill="#808020"/><rect x="8" y="9" width="1" height="1" fill="#c0c0c0"/><rect x="9" y="9" width="3" height="1" fill="#0a8080"/><rect x="12" y="9" width="1" height="1" fill="#118a1f"/><rect x="13" y="9" width="1" height="1" fill="#000"/><rect x="2" y="10" width="1" height="1" fill="#808020"/><rect x="3" y="10" width="1" height="1" fill="#118a1f"/><rect x="4" y="10" width="1" height="1" fill="#0a8080"/><rect x="5" y="10" width="1" height="1" fill="#118a1f"/><rect x="6" y="10" width="1" height="1" fill="#808020"/><rect x="7" y="10" width="1" height="1" fill="#118a1f"/><rect x="8" y="10" width="1" height="1" fill="#0a8080"/><rect x="9" y="10" width="1" height="1" fill="#c0c0c0"/><rect x="10" y="10" width="2" height="1" fill="#808020"/><rect x="12" y="10" width="1" height="1" fill="#0a8080"/><rect x="3" y="11" width="2" height="1" fill="#118a1f"/><rect x="5" y="11" width="1" height="1" fill="#808020"/><rect x="6" y="11" width="2" height="1" fill="#ff2020"/><rect x="8" y="11" width="1" height="1" fill="#118a1f"/><rect x="9" y="11" width="1" height="1" fill="#808020"/><rect x="10" y="11" width="1" height="1" fill="#c0c0c0"/><rect x="11" y="11" width="1" height="1" fill="#0a8080"/><rect x="2" y="12" width="2" height="1" fill="#118a1f"/><rect x="4" y="12" width="1" height="1" fill="#808020"/><rect x="5" y="12" width="1" height="1" fill="#118a1f"/><rect x="6" y="12" width="2" height="1" fill="#ff2020"/><rect x="8" y="12" width="1" height="1" fill="#118a1f"/><rect x="9" y="12" width="1" height="1" fill="#808020"/><rect x="10" y="12" width="1" height="1" fill="#c0c0c0"/><rect x="11" y="12" width="1" height="1" fill="#118a1f"/><rect x="3" y="13" width="2" height="1" fill="#808020"/><rect x="5" y="13" width="2" height="1" fill="#118a1f"/><rect x="7" y="13" width="2" height="1" fill="#808020"/><rect x="11" y="13" width="2" height="1" fill="#118a1f"/><rect x="5" y="14" width="3" height="1" fill="#000"/><rect x="12" y="14" width="1" height="1" fill="#118a1f"/><rect x="13" y="14" width="1" height="1" fill="#000"/></svg>
<div class=t style="left:504.5px;top:1039.60px;font-size:24px;color:#000;letter-spacing:0.727px;">RooConstVar::nominal</div>
<svg style="left:470px;top:1074px" width="28" height="30" viewBox="0 0 14 15" shape-rendering="crispEdges"><rect x="1" y="0" width="2" height="1" fill="#118a1f"/><rect x="6" y="0" width="2" height="1" fill="#ff2020"/><rect x="1" y="1" width="1" height="1" fill="#0a8080"/><rect x="2" y="1" width="2" height="1" fill="#118a1f"/><rect x="4" y="1" width="1" height="1" fill="#000"/><rect x="5" y="1" width="1" height="1" fill="#0a8080"/><rect x="6" y="1" width="2" height="1" fill="#ff2020"/><rect x="2" y="2" width="1" height="1" fill="#0a8080"/><rect x="3" y="2" width="1" height="1" fill="#c0c0c0"/><rect x="4" y="2" width="2" height="1" fill="#118a1f"/><rect x="6" y="2" width="2" height="1" fill="#ff2020"/><rect x="8" y="2" width="1" height="1" fill="#0a8080"/><rect x="1" y="3" width="2" height="1" fill="#118a1f"/><rect x="3" y="3" width="1" height="1" fill="#c0c0c0"/><rect x="4" y="3" width="1" height="1" fill="#118a1f"/><rect x="5" y="3" width="1" height="1" fill="#0a8080"/><rect x="6" y="3" width="2" height="1" fill="#ff2020"/><rect x="8" y="3" width="1" height="1" fill="#0a8080"/><rect x="2" y="4" width="1" height="1" fill="#0a8080"/><rect x="3" y="4" width="1" height="1" fill="#118a1f"/><rect x="4" y="4" width="1" height="1" fill="#c0c0c0"/><rect x="5" y="4" width="1" height="1" fill="#118a1f"/><rect x="6" y="4" width="2" height="1" fill="#ff2020"/><rect x="8" y="4" width="1" height="1" fill="#118a1f"/><rect x="9" y="4" width="2" height="1" fill="#0a8080"/><rect x="1" y="5" width="3" height="1" fill="#0a8080"/><rect x="4" y="5" width="1" height="1" fill="#808020"/><rect x="5" y="5" width="1" height="1" fill="#c0c0c0"/><rect x="6" y="5" width="2" height="1" fill="#ff2020"/><rect x="8" y="5" width="1" height="1" fill="#118a1f"/><rect x="9" y="5" width="2" height="1" fill="#0a8080"/><rect x="2" y="6" width="1" height="1" fill="#808020"/><rect x="3" y="6" width="3" height="1" fill="#118a1f"/><rect x="6" y="6" width="2" height="1" fill="#ff2020"/><rect x="8" y="6" width="2" height="1" fill="#118a1f"/><rect x="10" y="6" width="1" height="1" fill="#000"/><rect x="11" y="6" width="2" height="1" fill="#118a1f"/><rect x="1" y="7" width="1" height="1" fill="#0a8080"/><rect x="2" y="7" width="1" height="1" fill="#118a1f"/><rect x="3" y="7" width="1" height="1" fill="#0a8080"/><rect x="4" y="7" width="1" height="1" fill="#118a1f"/><rect x="5" y="7" width="1" height="1" fill="#0a8080"/><rect x="6" y="7" width="2" height="1" fill="#ff2020"/><rect x="8" y="7" width="1" height="1" fill="#118a1f"/><rect x="9" y="7" width="1" height="1" fill="#808020"/><rect x="10" y="7" width="3" height="1" fill="#0a8080"/><rect x="3" y="8" width="1" height="1" fill="#118a1f"/><rect x="4" y="8" width="1" height="1" fill="#808020"/><rect x="5" y="8" width="1" height="1" fill="#118a1f"/><rect x="6" y="8" width="2" height="1" fill="#ff2020"/><rect x="8" y="8" width="2" height="1" fill="#118a1f"/><rect x="10" y="8" width="3" height="1" fill="#0a8080"/><rect x="0" y="9" width="1" height="1" fill="#118a1f"/><rect x="1" y="9" width="1" height="1" fill="#0a8080"/><rect x="2" y="9" width="1" height="1" fill="#118a1f"/><rect x="3" y="9" width="1" height="1" fill="#0a8080"/><rect x="4" y="9" width="1" height="1" fill="#118a1f"/><rect x="5" y="9" width="1" height="1" fill="#0a8080"/><rect x="6" y="9" width="1" height="1" fill="#118a1f"/><rect x="7" y="9" width="1" height="1" fill="#808020"/><rect x="8" y="9" width="1" height="1" fill="#c0c0c0"/><rect x="9" y="9" width="3" height="1" fill="#0a8080"/><rect x="12" y="9" width="1" height="1" fill="#118a1f"/><rect x="13" y="9" width="1" height="1" fill="#000"/><rect x="2" y="10" width="1" height="1" fill="#808020"/><rect x="3" y="10" width="1" height="1" fill="#118a1f"/><rect x="4" y="10" width="1" height="1" fill="#0a8080"/><rect x="5" y="10" width="1" height="1" fill="#118a1f"/><rect x="6" y="10" width="1" height="1" fill="#808020"/><rect x="7" y="10" width="1" height="1" fill="#118a1f"/><rect x="8" y="10" width="1" height="1" fill="#0a8080"/><rect x="9" y="10" width="1" height="1" fill="#c0c0c0"/><rect x="10" y="10" width="2" height="1" fill="#808020"/><rect x="12" y="10" width="1" height="1" fill="#0a8080"/><rect x="3" y="11" width="2" height="1" fill="#118a1f"/><rect x="5" y="11" width="1" height="1" fill="#808020"/><rect x="6" y="11" width="2" height="1" fill="#ff2020"/><rect x="8" y="11" width="1" height="1" fill="#118a1f"/><rect x="9" y="11" width="1" height="1" fill="#808020"/><rect x="10" y="11" width="1" height="1" fill="#c0c0c0"/><rect x="11" y="11" width="1" height="1" fill="#0a8080"/><rect x="2" y="12" width="2" height="1" fill="#118a1f"/><rect x="4" y="12" width="1" height="1" fill="#808020"/><rect x="5" y="12" width="1" height="1" fill="#118a1f"/><rect x="6" y="12" width="2" height="1" fill="#ff2020"/><rect x="8" y="12" width="1" height="1" fill="#118a1f"/><rect x="9" y="12" width="1" height="1" fill="#808020"/><rect x="10" y="12" width="1" height="1" fill="#c0c0c0"/><rect x="11" y="12" width="1" height="1" fill="#118a1f"/><rect x="3" y="13" width="2" height="1" fill="#808020"/><rect x="5" y="13" width="2" height="1" fill="#118a1f"/><rect x="7" y="13" width="2" height="1" fill="#808020"/><rect x="11" y="13" width="2" height="1" fill="#118a1f"/><rect x="5" y="14" width="3" height="1" fill="#000"/><rect x="12" y="14" width="1" height="1" fill="#118a1f"/><rect x="13" y="14" width="1" height="1" fill="#000"/></svg>
<div class=t style="left:504.5px;top:1075.60px;font-size:24px;color:#000;letter-spacing:0.736px;">RooConstVar::alpha_syst1=1</div>
<svg style="left:470px;top:1110px" width="28" height="30" viewBox="0 0 14 15" shape-rendering="crispEdges"><rect x="1" y="0" width="2" height="1" fill="#118a1f"/><rect x="6" y="0" width="2" height="1" fill="#ff2020"/><rect x="1" y="1" width="1" height="1" fill="#0a8080"/><rect x="2" y="1" width="2" height="1" fill="#118a1f"/><rect x="4" y="1" width="1" height="1" fill="#000"/><rect x="5" y="1" width="1" height="1" fill="#0a8080"/><rect x="6" y="1" width="2" height="1" fill="#ff2020"/><rect x="2" y="2" width="1" height="1" fill="#0a8080"/><rect x="3" y="2" width="1" height="1" fill="#c0c0c0"/><rect x="4" y="2" width="2" height="1" fill="#118a1f"/><rect x="6" y="2" width="2" height="1" fill="#ff2020"/><rect x="8" y="2" width="1" height="1" fill="#0a8080"/><rect x="1" y="3" width="2" height="1" fill="#118a1f"/><rect x="3" y="3" width="1" height="1" fill="#c0c0c0"/><rect x="4" y="3" width="1" height="1" fill="#118a1f"/><rect x="5" y="3" width="1" height="1" fill="#0a8080"/><rect x="6" y="3" width="2" height="1" fill="#ff2020"/><rect x="8" y="3" width="1" height="1" fill="#0a8080"/><rect x="2" y="4" width="1" height="1" fill="#0a8080"/><rect x="3" y="4" width="1" height="1" fill="#118a1f"/><rect x="4" y="4" width="1" height="1" fill="#c0c0c0"/><rect x="5" y="4" width="1" height="1" fill="#118a1f"/><rect x="6" y="4" width="2" height="1" fill="#ff2020"/><rect x="8" y="4" width="1" height="1" fill="#118a1f"/><rect x="9" y="4" width="2" height="1" fill="#0a8080"/><rect x="1" y="5" width="3" height="1" fill="#0a8080"/><rect x="4" y="5" width="1" height="1" fill="#808020"/><rect x="5" y="5" width="1" height="1" fill="#c0c0c0"/><rect x="6" y="5" width="2" height="1" fill="#ff2020"/><rect x="8" y="5" width="1" height="1" fill="#118a1f"/><rect x="9" y="5" width="2" height="1" fill="#0a8080"/><rect x="2" y="6" width="1" height="1" fill="#808020"/><rect x="3" y="6" width="3" height="1" fill="#118a1f"/><rect x="6" y="6" width="2" height="1" fill="#ff2020"/><rect x="8" y="6" width="2" height="1" fill="#118a1f"/><rect x="10" y="6" width="1" height="1" fill="#000"/><rect x="11" y="6" width="2" height="1" fill="#118a1f"/><rect x="1" y="7" width="1" height="1" fill="#0a8080"/><rect x="2" y="7" width="1" height="1" fill="#118a1f"/><rect x="3" y="7" width="1" height="1" fill="#0a8080"/><rect x="4" y="7" width="1" height="1" fill="#118a1f"/><rect x="5" y="7" width="1" height="1" fill="#0a8080"/><rect x="6" y="7" width="2" height="1" fill="#ff2020"/><rect x="8" y="7" width="1" height="1" fill="#118a1f"/><rect x="9" y="7" width="1" height="1" fill="#808020"/><rect x="10" y="7" width="3" height="1" fill="#0a8080"/><rect x="3" y="8" width="1" height="1" fill="#118a1f"/><rect x="4" y="8" width="1" height="1" fill="#808020"/><rect x="5" y="8" width="1" height="1" fill="#118a1f"/><rect x="6" y="8" width="2" height="1" fill="#ff2020"/><rect x="8" y="8" width="2" height="1" fill="#118a1f"/><rect x="10" y="8" width="3" height="1" fill="#0a8080"/><rect x="0" y="9" width="1" height="1" fill="#118a1f"/><rect x="1" y="9" width="1" height="1" fill="#0a8080"/><rect x="2" y="9" width="1" height="1" fill="#118a1f"/><rect x="3" y="9" width="1" height="1" fill="#0a8080"/><rect x="4" y="9" width="1" height="1" fill="#118a1f"/><rect x="5" y="9" width="1" height="1" fill="#0a8080"/><rect x="6" y="9" width="1" height="1" fill="#118a1f"/><rect x="7" y="9" width="1" height="1" fill="#808020"/><rect x="8" y="9" width="1" height="1" fill="#c0c0c0"/><rect x="9" y="9" width="3" height="1" fill="#0a8080"/><rect x="12" y="9" width="1" height="1" fill="#118a1f"/><rect x="13" y="9" width="1" height="1" fill="#000"/><rect x="2" y="10" width="1" height="1" fill="#808020"/><rect x="3" y="10" width="1" height="1" fill="#118a1f"/><rect x="4" y="10" width="1" height="1" fill="#0a8080"/><rect x="5" y="10" width="1" height="1" fill="#118a1f"/><rect x="6" y="10" width="1" height="1" fill="#808020"/><rect x="7" y="10" width="1" height="1" fill="#118a1f"/><rect x="8" y="10" width="1" height="1" fill="#0a8080"/><rect x="9" y="10" width="1" height="1" fill="#c0c0c0"/><rect x="10" y="10" width="2" height="1" fill="#808020"/><rect x="12" y="10" width="1" height="1" fill="#0a8080"/><rect x="3" y="11" width="2" height="1" fill="#118a1f"/><rect x="5" y="11" width="1" height="1" fill="#808020"/><rect x="6" y="11" width="2" height="1" fill="#ff2020"/><rect x="8" y="11" width="1" height="1" fill="#118a1f"/><rect x="9" y="11" width="1" height="1" fill="#808020"/><rect x="10" y="11" width="1" height="1" fill="#c0c0c0"/><rect x="11" y="11" width="1" height="1" fill="#0a8080"/><rect x="2" y="12" width="2" height="1" fill="#118a1f"/><rect x="4" y="12" width="1" height="1" fill="#808020"/><rect x="5" y="12" width="1" height="1" fill="#118a1f"/><rect x="6" y="12" width="2" height="1" fill="#ff2020"/><rect x="8" y="12" width="1" height="1" fill="#118a1f"/><rect x="9" y="12" width="1" height="1" fill="#808020"/><rect x="10" y="12" width="1" height="1" fill="#c0c0c0"/><rect x="11" y="12" width="1" height="1" fill="#118a1f"/><rect x="3" y="13" width="2" height="1" fill="#808020"/><rect x="5" y="13" width="2" height="1" fill="#118a1f"/><rect x="7" y="13" width="2" height="1" fill="#808020"/><rect x="11" y="13" width="2" height="1" fill="#118a1f"/><rect x="5" y="14" width="3" height="1" fill="#000"/><rect x="12" y="14" width="1" height="1" fill="#118a1f"/><rect x="13" y="14" width="1" height="1" fill="#000"/></svg>
<div class=t style="left:504.5px;top:1111.60px;font-size:24px;color:#000;letter-spacing:0.709px;">RooConstVar::alpha_syst1=-1</div>
<svg style="left:202px;top:1146px" width="30" height="26" viewBox="0 0 15 13" shape-rendering="crispEdges"><rect x="2" y="0" width="5" height="1" fill="#808080"/><rect x="1" y="1" width="1" height="1" fill="#808080"/><rect x="2" y="1" width="1" height="1" fill="#c0c0c0"/><rect x="3" y="1" width="1" height="1" fill="#ffff00"/><rect x="4" y="1" width="1" height="1" fill="#c0c0c0"/><rect x="5" y="1" width="1" height="1" fill="#ffff00"/><rect x="6" y="1" width="1" height="1" fill="#c0c0c0"/><rect x="7" y="1" width="1" height="1" fill="#808080"/><rect x="0" y="2" width="1" height="1" fill="#808080"/><rect x="1" y="2" width="1" height="1" fill="#c0c0c0"/><rect x="2" y="2" width="1" height="1" fill="#ffff00"/><rect x="3" y="2" width="1" height="1" fill="#c0c0c0"/><rect x="4" y="2" width="1" height="1" fill="#ffff00"/><rect x="5" y="2" width="1" height="1" fill="#c0c0c0"/><rect x="6" y="2" width="1" height="1" fill="#ffff00"/><rect x="7" y="2" width="1" height="1" fill="#c0c0c0"/><rect x="8" y="2" width="6" height="1" fill="#808080"/><rect x="0" y="3" width="1" height="1" fill="#808080"/><rect x="1" y="3" width="12" height="1" fill="#fff"/><rect x="13" y="3" width="1" height="1" fill="#808080"/><rect x="14" y="3" width="1" height="1" fill="#000"/><rect x="0" y="4" width="1" height="1" fill="#808080"/><rect x="1" y="4" width="1" height="1" fill="#fff"/><rect x="2" y="4" width="1" height="1" fill="#ffff00"/><rect x="3" y="4" width="1" height="1" fill="#c0c0c0"/><rect x="4" y="4" width="1" height="1" fill="#ffff00"/><rect x="5" y="4" width="1" height="1" fill="#c0c0c0"/><rect x="6" y="4" width="1" height="1" fill="#ffff00"/><rect x="7" y="4" width="1" height="1" fill="#c0c0c0"/><rect x="8" y="4" width="1" height="1" fill="#ffff00"/><rect x="9" y="4" width="1" height="1" fill="#c0c0c0"/><rect x="10" y="4" width="1" height="1" fill="#ffff00"/><rect x="11" y="4" width="1" height="1" fill="#c0c0c0"/><rect x="12" y="4" width="1" height="1" fill="#ffff00"/><rect x="13" y="4" width="1" height="1" fill="#808080"/><rect x="14" y="4" width="1" height="1" fill="#000"/><rect x="0" y="5" width="1" height="1" fill="#808080"/><rect x="1" y="5" width="1" height="1" fill="#fff"/><rect x="2" y="5" width="1" height="1" fill="#c0c0c0"/><rect x="3" y="5" width="1" height="1" fill="#ffff00"/><rect x="4" y="5" width="1" height="1" fill="#c0c0c0"/><rect x="5" y="5" width="1" height="1" fill="#ffff00"/><rect x="6" y="5" width="1" height="1" fill="#c0c0c0"/><rect x="7" y="5" width="1" height="1" fill="#ffff00"/><rect x="8" y="5" width="1" height="1" fill="#c0c0c0"/><rect x="9" y="5" width="1" height="1" fill="#ffff00"/><rect x="10" y="5" width="1" height="1" fill="#c0c0c0"/><rect x="11" y="5" width="1" height="1" fill="#ffff00"/><rect x="12" y="5" width="1" height="1" fill="#c0c0c0"/><rect x="13" y="5" width="1" height="1" fill="#808080"/><rect x="14" y="5" width="1" height="1" fill="#000"/><rect x="0" y="6" width="1" height="1" fill="#808080"/><rect x="1" y="6" width="1" height="1" fill="#fff"/><rect x="2" y="6" width="1" height="1" fill="#ffff00"/><rect x="3" y="6" width="1" height="1" fill="#c0c0c0"/><rect x="4" y="6" width="1" height="1" fill="#ffff00"/><rect x="5" y="6" width="1" height="1" fill="#c0c0c0"/><rect x="6" y="6" width="1" height="1" fill="#ffff00"/><rect x="7" y="6" width="1" height="1" fill="#c0c0c0"/><rect x="8" y="6" width="1" height="1" fill="#ffff00"/><rect x="9" y="6" width="1" height="1" fill="#c0c0c0"/><rect x="10" y="6" width="1" height="1" fill="#ffff00"/><rect x="11" y="6" width="1" height="1" fill="#c0c0c0"/><rect x="12" y="6" width="1" height="1" fill="#ffff00"/><rect x="13" y="6" width="1" height="1" fill="#808080"/><rect x="14" y="6" width="1" height="1" fill="#000"/><rect x="0" y="7" width="1" height="1" fill="#808080"/><rect x="1" y="7" width="1" height="1" fill="#fff"/><rect x="2" y="7" width="1" height="1" fill="#c0c0c0"/><rect x="3" y="7" width="1" height="1" fill="#ffff00"/><rect x="4" y="7" width="1" height="1" fill="#c0c0c0"/><rect x="5" y="7" width="1" height="1" fill="#ffff00"/><rect x="6" y="7" width="1" height="1" fill="#c0c0c0"/><rect x="7" y="7" width="1" height="1" fill="#ffff00"/><rect x="8" y="7" width="1" height="1" fill="#c0c0c0"/><rect x="9" y="7" width="1" height="1" fill="#ffff00"/><rect x="10" y="7" width="1" height="1" fill="#c0c0c0"/><rect x="11" y="7" width="1" height="1" fill="#ffff00"/><rect x="12" y="7" width="1" height="1" fill="#c0c0c0"/><rect x="13" y="7" width="1" height="1" fill="#808080"/><rect x="14" y="7" width="1" height="1" fill="#000"/><rect x="0" y="8" width="1" height="1" fill="#808080"/><rect x="1" y="8" width="1" height="1" fill="#fff"/><rect x="2" y="8" width="1" height="1" fill="#ffff00"/><rect x="3" y="8" width="1" height="1" fill="#c0c0c0"/><rect x="4" y="8" width="1" height="1" fill="#ffff00"/><rect x="5" y="8" width="1" height="1" fill="#c0c0c0"/><rect x="6" y="8" width="1" height="1" fill="#ffff00"/><rect x="7" y="8" width="1" height="1" fill="#c0c0c0"/><rect x="8" y="8" width="1" height="1" fill="#ffff00"/><rect x="9" y="8" width="1" height="1" fill="#c0c0c0"/><rect x="10" y="8" width="1" height="1" fill="#ffff00"/><rect x="11" y="8" width="1" height="1" fill="#c0c0c0"/><rect x="12" y="8" width="1" height="1" fill="#ffff00"/><rect x="13" y="8" width="1" height="1" fill="#808080"/><rect x="14" y="8" width="1" height="1" fill="#000"/><rect x="0" y="9" width="1" height="1" fill="#808080"/><rect x="1" y="9" width="1" height="1" fill="#fff"/><rect x="2" y="9" width="1" height="1" fill="#c0c0c0"/><rect x="3" y="9" width="1" height="1" fill="#ffff00"/><rect x="4" y="9" width="1" height="1" fill="#c0c0c0"/><rect x="5" y="9" width="1" height="1" fill="#ffff00"/><rect x="6" y="9" width="1" height="1" fill="#c0c0c0"/><rect x="7" y="9" width="1" height="1" fill="#ffff00"/><rect x="8" y="9" width="1" height="1" fill="#c0c0c0"/><rect x="9" y="9" width="1" height="1" fill="#ffff00"/><rect x="10" y="9" width="1" height="1" fill="#c0c0c0"/><rect x="11" y="9" width="1" height="1" fill="#ffff00"/><rect x="12" y="9" width="1" height="1" fill="#c0c0c0"/><rect x="13" y="9" width="1" height="1" fill="#808080"/><rect x="14" y="9" width="1" height="1" fill="#000"/><rect x="0" y="10" width="1" height="1" fill="#808080"/><rect x="1" y="10" width="1" height="1" fill="#fff"/><rect x="2" y="10" width="1" height="1" fill="#ffff00"/><rect x="3" y="10" width="1" height="1" fill="#c0c0c0"/><rect x="4" y="10" width="1" height="1" fill="#ffff00"/><rect x="5" y="10" width="1" height="1" fill="#c0c0c0"/><rect x="6" y="10" width="1" height="1" fill="#ffff00"/><rect x="7" y="10" width="1" height="1" fill="#c0c0c0"/><rect x="8" y="10" width="1" height="1" fill="#ffff00"/><rect x="9" y="10" width="1" height="1" fill="#c0c0c0"/><rect x="10" y="10" width="1" height="1" fill="#ffff00"/><rect x="11" y="10" width="1" height="1" fill="#c0c0c0"/><rect x="12" y="10" width="1" height="1" fill="#ffff00"/><rect x="13" y="10" width="1" height="1" fill="#808080"/><rect x="14" y="10" width="1" height="1" fill="#000"/><rect x="0" y="11" width="14" height="1" fill="#808080"/><rect x="14" y="11" width="1" height="1" fill="#000"/><rect x="1" y="12" width="14" height="1" fill="#000"/></svg>
<div class=t style="left:238.5px;top:1147.60px;font-size:24px;color:#000;letter-spacing:0.378px;">scratch</div>
<svg style="left:202px;top:1182px" width="30" height="26" viewBox="0 0 15 13" shape-rendering="crispEdges"><rect x="2" y="0" width="5" height="1" fill="#808080"/><rect x="1" y="1" width="1" height="1" fill="#808080"/><rect x="2" y="1" width="1" height="1" fill="#c0c0c0"/><rect x="3" y="1" width="1" height="1" fill="#ffff00"/><rect x="4" y="1" width="1" height="1" fill="#c0c0c0"/><rect x="5" y="1" width="1" height="1" fill="#ffff00"/><rect x="6" y="1" width="1" height="1" fill="#c0c0c0"/><rect x="7" y="1" width="1" height="1" fill="#808080"/><rect x="0" y="2" width="1" height="1" fill="#808080"/><rect x="1" y="2" width="1" height="1" fill="#c0c0c0"/><rect x="2" y="2" width="1" height="1" fill="#ffff00"/><rect x="3" y="2" width="1" height="1" fill="#c0c0c0"/><rect x="4" y="2" width="1" height="1" fill="#ffff00"/><rect x="5" y="2" width="1" height="1" fill="#c0c0c0"/><rect x="6" y="2" width="1" height="1" fill="#ffff00"/><rect x="7" y="2" width="1" height="1" fill="#c0c0c0"/><rect x="8" y="2" width="6" height="1" fill="#808080"/><rect x="0" y="3" width="1" height="1" fill="#808080"/><rect x="1" y="3" width="12" height="1" fill="#fff"/><rect x="13" y="3" width="1" height="1" fill="#808080"/><rect x="14" y="3" width="1" height="1" fill="#000"/><rect x="0" y="4" width="1" height="1" fill="#808080"/><rect x="1" y="4" width="1" height="1" fill="#fff"/><rect x="2" y="4" width="1" height="1" fill="#ffff00"/><rect x="3" y="4" width="1" height="1" fill="#c0c0c0"/><rect x="4" y="4" width="1" height="1" fill="#ffff00"/><rect x="5" y="4" width="1" height="1" fill="#c0c0c0"/><rect x="6" y="4" width="1" height="1" fill="#ffff00"/><rect x="7" y="4" width="1" height="1" fill="#c0c0c0"/><rect x="8" y="4" width="1" height="1" fill="#ffff00"/><rect x="9" y="4" width="1" height="1" fill="#c0c0c0"/><rect x="10" y="4" width="1" height="1" fill="#ffff00"/><rect x="11" y="4" width="1" height="1" fill="#c0c0c0"/><rect x="12" y="4" width="1" height="1" fill="#ffff00"/><rect x="13" y="4" width="1" height="1" fill="#808080"/><rect x="14" y="4" width="1" height="1" fill="#000"/><rect x="0" y="5" width="1" height="1" fill="#808080"/><rect x="1" y="5" width="1" height="1" fill="#fff"/><rect x="2" y="5" width="1" height="1" fill="#c0c0c0"/><rect x="3" y="5" width="1" height="1" fill="#ffff00"/><rect x="4" y="5" width="1" height="1" fill="#c0c0c0"/><rect x="5" y="5" width="1" height="1" fill="#ffff00"/><rect x="6" y="5" width="1" height="1" fill="#c0c0c0"/><rect x="7" y="5" width="1" height="1" fill="#ffff00"/><rect x="8" y="5" width="1" height="1" fill="#c0c0c0"/><rect x="9" y="5" width="1" height="1" fill="#ffff00"/><rect x="10" y="5" width="1" height="1" fill="#c0c0c0"/><rect x="11" y="5" width="1" height="1" fill="#ffff00"/><rect x="12" y="5" width="1" height="1" fill="#c0c0c0"/><rect x="13" y="5" width="1" height="1" fill="#808080"/><rect x="14" y="5" width="1" height="1" fill="#000"/><rect x="0" y="6" width="1" height="1" fill="#808080"/><rect x="1" y="6" width="1" height="1" fill="#fff"/><rect x="2" y="6" width="1" height="1" fill="#ffff00"/><rect x="3" y="6" width="1" height="1" fill="#c0c0c0"/><rect x="4" y="6" width="1" height="1" fill="#ffff00"/><rect x="5" y="6" width="1" height="1" fill="#c0c0c0"/><rect x="6" y="6" width="1" height="1" fill="#ffff00"/><rect x="7" y="6" width="1" height="1" fill="#c0c0c0"/><rect x="8" y="6" width="1" height="1" fill="#ffff00"/><rect x="9" y="6" width="1" height="1" fill="#c0c0c0"/><rect x="10" y="6" width="1" height="1" fill="#ffff00"/><rect x="11" y="6" width="1" height="1" fill="#c0c0c0"/><rect x="12" y="6" width="1" height="1" fill="#ffff00"/><rect x="13" y="6" width="1" height="1" fill="#808080"/><rect x="14" y="6" width="1" height="1" fill="#000"/><rect x="0" y="7" width="1" height="1" fill="#808080"/><rect x="1" y="7" width="1" height="1" fill="#fff"/><rect x="2" y="7" width="1" height="1" fill="#c0c0c0"/><rect x="3" y="7" width="1" height="1" fill="#ffff00"/><rect x="4" y="7" width="1" height="1" fill="#c0c0c0"/><rect x="5" y="7" width="1" height="1" fill="#ffff00"/><rect x="6" y="7" width="1" height="1" fill="#c0c0c0"/><rect x="7" y="7" width="1" height="1" fill="#ffff00"/><rect x="8" y="7" width="1" height="1" fill="#c0c0c0"/><rect x="9" y="7" width="1" height="1" fill="#ffff00"/><rect x="10" y="7" width="1" height="1" fill="#c0c0c0"/><rect x="11" y="7" width="1" height="1" fill="#ffff00"/><rect x="12" y="7" width="1" height="1" fill="#c0c0c0"/><rect x="13" y="7" width="1" height="1" fill="#808080"/><rect x="14" y="7" width="1" height="1" fill="#000"/><rect x="0" y="8" width="1" height="1" fill="#808080"/><rect x="1" y="8" width="1" height="1" fill="#fff"/><rect x="2" y="8" width="1" height="1" fill="#ffff00"/><rect x="3" y="8" width="1" height="1" fill="#c0c0c0"/><rect x="4" y="8" width="1" height="1" fill="#ffff00"/><rect x="5" y="8" width="1" height="1" fill="#c0c0c0"/><rect x="6" y="8" width="1" height="1" fill="#ffff00"/><rect x="7" y="8" width="1" height="1" fill="#c0c0c0"/><rect x="8" y="8" width="1" height="1" fill="#ffff00"/><rect x="9" y="8" width="1" height="1" fill="#c0c0c0"/><rect x="10" y="8" width="1" height="1" fill="#ffff00"/><rect x="11" y="8" width="1" height="1" fill="#c0c0c0"/><rect x="12" y="8" width="1" height="1" fill="#ffff00"/><rect x="13" y="8" width="1" height="1" fill="#808080"/><rect x="14" y="8" width="1" height="1" fill="#000"/><rect x="0" y="9" width="1" height="1" fill="#808080"/><rect x="1" y="9" width="1" height="1" fill="#fff"/><rect x="2" y="9" width="1" height="1" fill="#c0c0c0"/><rect x="3" y="9" width="1" height="1" fill="#ffff00"/><rect x="4" y="9" width="1" height="1" fill="#c0c0c0"/><rect x="5" y="9" width="1" height="1" fill="#ffff00"/><rect x="6" y="9" width="1" height="1" fill="#c0c0c0"/><rect x="7" y="9" width="1" height="1" fill="#ffff00"/><rect x="8" y="9" width="1" height="1" fill="#c0c0c0"/><rect x="9" y="9" width="1" height="1" fill="#ffff00"/><rect x="10" y="9" width="1" height="1" fill="#c0c0c0"/><rect x="11" y="9" width="1" height="1" fill="#ffff00"/><rect x="12" y="9" width="1" height="1" fill="#c0c0c0"/><rect x="13" y="9" width="1" height="1" fill="#808080"/><rect x="14" y="9" width="1" height="1" fill="#000"/><rect x="0" y="10" width="1" height="1" fill="#808080"/><rect x="1" y="10" width="1" height="1" fill="#fff"/><rect x="2" y="10" width="1" height="1" fill="#ffff00"/><rect x="3" y="10" width="1" height="1" fill="#c0c0c0"/><rect x="4" y="10" width="1" height="1" fill="#ffff00"/><rect x="5" y="10" width="1" height="1" fill="#c0c0c0"/><rect x="6" y="10" width="1" height="1" fill="#ffff00"/><rect x="7" y="10" width="1" height="1" fill="#c0c0c0"/><rect x="8" y="10" width="1" height="1" fill="#ffff00"/><rect x="9" y="10" width="1" height="1" fill="#c0c0c0"/><rect x="10" y="10" width="1" height="1" fill="#ffff00"/><rect x="11" y="10" width="1" height="1" fill="#c0c0c0"/><rect x="12" y="10" width="1" height="1" fill="#ffff00"/><rect x="13" y="10" width="1" height="1" fill="#808080"/><rect x="14" y="10" width="1" height="1" fill="#000"/><rect x="0" y="11" width="14" height="1" fill="#808080"/><rect x="14" y="11" width="1" height="1" fill="#000"/><rect x="1" y="12" width="14" height="1" fill="#000"/></svg>
<div class=t style="left:238.5px;top:1183.60px;font-size:24px;color:#000;letter-spacing:0.565px;">objects</div>
<svg style="left:202px;top:1218px" width="30" height="26" viewBox="0 0 15 13" shape-rendering="crispEdges"><rect x="2" y="0" width="5" height="1" fill="#808080"/><rect x="1" y="1" width="1" height="1" fill="#808080"/><rect x="2" y="1" width="1" height="1" fill="#c0c0c0"/><rect x="3" y="1" width="1" height="1" fill="#ffff00"/><rect x="4" y="1" width="1" height="1" fill="#c0c0c0"/><rect x="5" y="1" width="1" height="1" fill="#ffff00"/><rect x="6" y="1" width="1" height="1" fill="#c0c0c0"/><rect x="7" y="1" width="1" height="1" fill="#808080"/><rect x="0" y="2" width="1" height="1" fill="#808080"/><rect x="1" y="2" width="1" height="1" fill="#c0c0c0"/><rect x="2" y="2" width="1" height="1" fill="#ffff00"/><rect x="3" y="2" width="1" height="1" fill="#c0c0c0"/><rect x="4" y="2" width="1" height="1" fill="#ffff00"/><rect x="5" y="2" width="1" height="1" fill="#c0c0c0"/><rect x="6" y="2" width="1" height="1" fill="#ffff00"/><rect x="7" y="2" width="1" height="1" fill="#c0c0c0"/><rect x="8" y="2" width="6" height="1" fill="#808080"/><rect x="0" y="3" width="1" height="1" fill="#808080"/><rect x="1" y="3" width="12" height="1" fill="#fff"/><rect x="13" y="3" width="1" height="1" fill="#808080"/><rect x="14" y="3" width="1" height="1" fill="#000"/><rect x="0" y="4" width="1" height="1" fill="#808080"/><rect x="1" y="4" width="1" height="1" fill="#fff"/><rect x="2" y="4" width="1" height="1" fill="#ffff00"/><rect x="3" y="4" width="1" height="1" fill="#c0c0c0"/><rect x="4" y="4" width="1" height="1" fill="#ffff00"/><rect x="5" y="4" width="1" height="1" fill="#c0c0c0"/><rect x="6" y="4" width="1" height="1" fill="#ffff00"/><rect x="7" y="4" width="1" height="1" fill="#c0c0c0"/><rect x="8" y="4" width="1" height="1" fill="#ffff00"/><rect x="9" y="4" width="1" height="1" fill="#c0c0c0"/><rect x="10" y="4" width="1" height="1" fill="#ffff00"/><rect x="11" y="4" width="1" height="1" fill="#c0c0c0"/><rect x="12" y="4" width="1" height="1" fill="#ffff00"/><rect x="13" y="4" width="1" height="1" fill="#808080"/><rect x="14" y="4" width="1" height="1" fill="#000"/><rect x="0" y="5" width="1" height="1" fill="#808080"/><rect x="1" y="5" width="1" height="1" fill="#fff"/><rect x="2" y="5" width="1" height="1" fill="#c0c0c0"/><rect x="3" y="5" width="1" height="1" fill="#ffff00"/><rect x="4" y="5" width="1" height="1" fill="#c0c0c0"/><rect x="5" y="5" width="1" height="1" fill="#ffff00"/><rect x="6" y="5" width="1" height="1" fill="#c0c0c0"/><rect x="7" y="5" width="1" height="1" fill="#ffff00"/><rect x="8" y="5" width="1" height="1" fill="#c0c0c0"/><rect x="9" y="5" width="1" height="1" fill="#ffff00"/><rect x="10" y="5" width="1" height="1" fill="#c0c0c0"/><rect x="11" y="5" width="1" height="1" fill="#ffff00"/><rect x="12" y="5" width="1" height="1" fill="#c0c0c0"/><rect x="13" y="5" width="1" height="1" fill="#808080"/><rect x="14" y="5" width="1" height="1" fill="#000"/><rect x="0" y="6" width="1" height="1" fill="#808080"/><rect x="1" y="6" width="1" height="1" fill="#fff"/><rect x="2" y="6" width="1" height="1" fill="#ffff00"/><rect x="3" y="6" width="1" height="1" fill="#c0c0c0"/><rect x="4" y="6" width="1" height="1" fill="#ffff00"/><rect x="5" y="6" width="1" height="1" fill="#c0c0c0"/><rect x="6" y="6" width="1" height="1" fill="#ffff00"/><rect x="7" y="6" width="1" height="1" fill="#c0c0c0"/><rect x="8" y="6" width="1" height="1" fill="#ffff00"/><rect x="9" y="6" width="1" height="1" fill="#c0c0c0"/><rect x="10" y="6" width="1" height="1" fill="#ffff00"/><rect x="11" y="6" width="1" height="1" fill="#c0c0c0"/><rect x="12" y="6" width="1" height="1" fill="#ffff00"/><rect x="13" y="6" width="1" height="1" fill="#808080"/><rect x="14" y="6" width="1" height="1" fill="#000"/><rect x="0" y="7" width="1" height="1" fill="#808080"/><rect x="1" y="7" width="1" height="1" fill="#fff"/><rect x="2" y="7" width="1" height="1" fill="#c0c0c0"/><rect x="3" y="7" width="1" height="1" fill="#ffff00"/><rect x="4" y="7" width="1" height="1" fill="#c0c0c0"/><rect x="5" y="7" width="1" height="1" fill="#ffff00"/><rect x="6" y="7" width="1" height="1" fill="#c0c0c0"/><rect x="7" y="7" width="1" height="1" fill="#ffff00"/><rect x="8" y="7" width="1" height="1" fill="#c0c0c0"/><rect x="9" y="7" width="1" height="1" fill="#ffff00"/><rect x="10" y="7" width="1" height="1" fill="#c0c0c0"/><rect x="11" y="7" width="1" height="1" fill="#ffff00"/><rect x="12" y="7" width="1" height="1" fill="#c0c0c0"/><rect x="13" y="7" width="1" height="1" fill="#808080"/><rect x="14" y="7" width="1" height="1" fill="#000"/><rect x="0" y="8" width="1" height="1" fill="#808080"/><rect x="1" y="8" width="1" height="1" fill="#fff"/><rect x="2" y="8" width="1" height="1" fill="#ffff00"/><rect x="3" y="8" width="1" height="1" fill="#c0c0c0"/><rect x="4" y="8" width="1" height="1" fill="#ffff00"/><rect x="5" y="8" width="1" height="1" fill="#c0c0c0"/><rect x="6" y="8" width="1" height="1" fill="#ffff00"/><rect x="7" y="8" width="1" height="1" fill="#c0c0c0"/><rect x="8" y="8" width="1" height="1" fill="#ffff00"/><rect x="9" y="8" width="1" height="1" fill="#c0c0c0"/><rect x="10" y="8" width="1" height="1" fill="#ffff00"/><rect x="11" y="8" width="1" height="1" fill="#c0c0c0"/><rect x="12" y="8" width="1" height="1" fill="#ffff00"/><rect x="13" y="8" width="1" height="1" fill="#808080"/><rect x="14" y="8" width="1" height="1" fill="#000"/><rect x="0" y="9" width="1" height="1" fill="#808080"/><rect x="1" y="9" width="1" height="1" fill="#fff"/><rect x="2" y="9" width="1" height="1" fill="#c0c0c0"/><rect x="3" y="9" width="1" height="1" fill="#ffff00"/><rect x="4" y="9" width="1" height="1" fill="#c0c0c0"/><rect x="5" y="9" width="1" height="1" fill="#ffff00"/><rect x="6" y="9" width="1" height="1" fill="#c0c0c0"/><rect x="7" y="9" width="1" height="1" fill="#ffff00"/><rect x="8" y="9" width="1" height="1" fill="#c0c0c0"/><rect x="9" y="9" width="1" height="1" fill="#ffff00"/><rect x="10" y="9" width="1" height="1" fill="#c0c0c0"/><rect x="11" y="9" width="1" height="1" fill="#ffff00"/><rect x="12" y="9" width="1" height="1" fill="#c0c0c0"/><rect x="13" y="9" width="1" height="1" fill="#808080"/><rect x="14" y="9" width="1" height="1" fill="#000"/><rect x="0" y="10" width="1" height="1" fill="#808080"/><rect x="1" y="10" width="1" height="1" fill="#fff"/><rect x="2" y="10" width="1" height="1" fill="#ffff00"/><rect x="3" y="10" width="1" height="1" fill="#c0c0c0"/><rect x="4" y="10" width="1" height="1" fill="#ffff00"/><rect x="5" y="10" width="1" height="1" fill="#c0c0c0"/><rect x="6" y="10" width="1" height="1" fill="#ffff00"/><rect x="7" y="10" width="1" height="1" fill="#c0c0c0"/><rect x="8" y="10" width="1" height="1" fill="#ffff00"/><rect x="9" y="10" width="1" height="1" fill="#c0c0c0"/><rect x="10" y="10" width="1" height="1" fill="#ffff00"/><rect x="11" y="10" width="1" height="1" fill="#c0c0c0"/><rect x="12" y="10" width="1" height="1" fill="#ffff00"/><rect x="13" y="10" width="1" height="1" fill="#808080"/><rect x="14" y="10" width="1" height="1" fill="#000"/><rect x="0" y="11" width="14" height="1" fill="#808080"/><rect x="14" y="11" width="1" height="1" fill="#000"/><rect x="1" y="12" width="14" height="1" fill="#000"/></svg>
<div class=t style="left:238.5px;top:1219.60px;font-size:24px;color:#000;letter-spacing:0.496px;">sets</div>
<svg style="left:202px;top:1254px" width="30" height="26" viewBox="0 0 15 13" shape-rendering="crispEdges"><rect x="2" y="0" width="5" height="1" fill="#808080"/><rect x="1" y="1" width="1" height="1" fill="#808080"/><rect x="2" y="1" width="1" height="1" fill="#c0c0c0"/><rect x="3" y="1" width="1" height="1" fill="#ffff00"/><rect x="4" y="1" width="1" height="1" fill="#c0c0c0"/><rect x="5" y="1" width="1" height="1" fill="#ffff00"/><rect x="6" y="1" width="1" height="1" fill="#c0c0c0"/><rect x="7" y="1" width="1" height="1" fill="#808080"/><rect x="0" y="2" width="1" height="1" fill="#808080"/><rect x="1" y="2" width="1" height="1" fill="#c0c0c0"/><rect x="2" y="2" width="1" height="1" fill="#ffff00"/><rect x="3" y="2" width="1" height="1" fill="#c0c0c0"/><rect x="4" y="2" width="1" height="1" fill="#ffff00"/><rect x="5" y="2" width="1" height="1" fill="#c0c0c0"/><rect x="6" y="2" width="1" height="1" fill="#ffff00"/><rect x="7" y="2" width="1" height="1" fill="#c0c0c0"/><rect x="8" y="2" width="6" height="1" fill="#808080"/><rect x="0" y="3" width="1" height="1" fill="#808080"/><rect x="1" y="3" width="12" height="1" fill="#fff"/><rect x="13" y="3" width="1" height="1" fill="#808080"/><rect x="14" y="3" width="1" height="1" fill="#000"/><rect x="0" y="4" width="1" height="1" fill="#808080"/><rect x="1" y="4" width="1" height="1" fill="#fff"/><rect x="2" y="4" width="1" height="1" fill="#ffff00"/><rect x="3" y="4" width="1" height="1" fill="#c0c0c0"/><rect x="4" y="4" width="1" height="1" fill="#ffff00"/><rect x="5" y="4" width="1" height="1" fill="#c0c0c0"/><rect x="6" y="4" width="1" height="1" fill="#ffff00"/><rect x="7" y="4" width="1" height="1" fill="#c0c0c0"/><rect x="8" y="4" width="1" height="1" fill="#ffff00"/><rect x="9" y="4" width="1" height="1" fill="#c0c0c0"/><rect x="10" y="4" width="1" height="1" fill="#ffff00"/><rect x="11" y="4" width="1" height="1" fill="#c0c0c0"/><rect x="12" y="4" width="1" height="1" fill="#ffff00"/><rect x="13" y="4" width="1" height="1" fill="#808080"/><rect x="14" y="4" width="1" height="1" fill="#000"/><rect x="0" y="5" width="1" height="1" fill="#808080"/><rect x="1" y="5" width="1" height="1" fill="#fff"/><rect x="2" y="5" width="1" height="1" fill="#c0c0c0"/><rect x="3" y="5" width="1" height="1" fill="#ffff00"/><rect x="4" y="5" width="1" height="1" fill="#c0c0c0"/><rect x="5" y="5" width="1" height="1" fill="#ffff00"/><rect x="6" y="5" width="1" height="1" fill="#c0c0c0"/><rect x="7" y="5" width="1" height="1" fill="#ffff00"/><rect x="8" y="5" width="1" height="1" fill="#c0c0c0"/><rect x="9" y="5" width="1" height="1" fill="#ffff00"/><rect x="10" y="5" width="1" height="1" fill="#c0c0c0"/><rect x="11" y="5" width="1" height="1" fill="#ffff00"/><rect x="12" y="5" width="1" height="1" fill="#c0c0c0"/><rect x="13" y="5" width="1" height="1" fill="#808080"/><rect x="14" y="5" width="1" height="1" fill="#000"/><rect x="0" y="6" width="1" height="1" fill="#808080"/><rect x="1" y="6" width="1" height="1" fill="#fff"/><rect x="2" y="6" width="1" height="1" fill="#ffff00"/><rect x="3" y="6" width="1" height="1" fill="#c0c0c0"/><rect x="4" y="6" width="1" height="1" fill="#ffff00"/><rect x="5" y="6" width="1" height="1" fill="#c0c0c0"/><rect x="6" y="6" width="1" height="1" fill="#ffff00"/><rect x="7" y="6" width="1" height="1" fill="#c0c0c0"/><rect x="8" y="6" width="1" height="1" fill="#ffff00"/><rect x="9" y="6" width="1" height="1" fill="#c0c0c0"/><rect x="10" y="6" width="1" height="1" fill="#ffff00"/><rect x="11" y="6" width="1" height="1" fill="#c0c0c0"/><rect x="12" y="6" width="1" height="1" fill="#ffff00"/><rect x="13" y="6" width="1" height="1" fill="#808080"/><rect x="14" y="6" width="1" height="1" fill="#000"/><rect x="0" y="7" width="1" height="1" fill="#808080"/><rect x="1" y="7" width="1" height="1" fill="#fff"/><rect x="2" y="7" width="1" height="1" fill="#c0c0c0"/><rect x="3" y="7" width="1" height="1" fill="#ffff00"/><rect x="4" y="7" width="1" height="1" fill="#c0c0c0"/><rect x="5" y="7" width="1" height="1" fill="#ffff00"/><rect x="6" y="7" width="1" height="1" fill="#c0c0c0"/><rect x="7" y="7" width="1" height="1" fill="#ffff00"/><rect x="8" y="7" width="1" height="1" fill="#c0c0c0"/><rect x="9" y="7" width="1" height="1" fill="#ffff00"/><rect x="10" y="7" width="1" height="1" fill="#c0c0c0"/><rect x="11" y="7" width="1" height="1" fill="#ffff00"/><rect x="12" y="7" width="1" height="1" fill="#c0c0c0"/><rect x="13" y="7" width="1" height="1" fill="#808080"/><rect x="14" y="7" width="1" height="1" fill="#000"/><rect x="0" y="8" width="1" height="1" fill="#808080"/><rect x="1" y="8" width="1" height="1" fill="#fff"/><rect x="2" y="8" width="1" height="1" fill="#ffff00"/><rect x="3" y="8" width="1" height="1" fill="#c0c0c0"/><rect x="4" y="8" width="1" height="1" fill="#ffff00"/><rect x="5" y="8" width="1" height="1" fill="#c0c0c0"/><rect x="6" y="8" width="1" height="1" fill="#ffff00"/><rect x="7" y="8" width="1" height="1" fill="#c0c0c0"/><rect x="8" y="8" width="1" height="1" fill="#ffff00"/><rect x="9" y="8" width="1" height="1" fill="#c0c0c0"/><rect x="10" y="8" width="1" height="1" fill="#ffff00"/><rect x="11" y="8" width="1" height="1" fill="#c0c0c0"/><rect x="12" y="8" width="1" height="1" fill="#ffff00"/><rect x="13" y="8" width="1" height="1" fill="#808080"/><rect x="14" y="8" width="1" height="1" fill="#000"/><rect x="0" y="9" width="1" height="1" fill="#808080"/><rect x="1" y="9" width="1" height="1" fill="#fff"/><rect x="2" y="9" width="1" height="1" fill="#c0c0c0"/><rect x="3" y="9" width="1" height="1" fill="#ffff00"/><rect x="4" y="9" width="1" height="1" fill="#c0c0c0"/><rect x="5" y="9" width="1" height="1" fill="#ffff00"/><rect x="6" y="9" width="1" height="1" fill="#c0c0c0"/><rect x="7" y="9" width="1" height="1" fill="#ffff00"/><rect x="8" y="9" width="1" height="1" fill="#c0c0c0"/><rect x="9" y="9" width="1" height="1" fill="#ffff00"/><rect x="10" y="9" width="1" height="1" fill="#c0c0c0"/><rect x="11" y="9" width="1" height="1" fill="#ffff00"/><rect x="12" y="9" width="1" height="1" fill="#c0c0c0"/><rect x="13" y="9" width="1" height="1" fill="#808080"/><rect x="14" y="9" width="1" height="1" fill="#000"/><rect x="0" y="10" width="1" height="1" fill="#808080"/><rect x="1" y="10" width="1" height="1" fill="#fff"/><rect x="2" y="10" width="1" height="1" fill="#ffff00"/><rect x="3" y="10" width="1" height="1" fill="#c0c0c0"/><rect x="4" y="10" width="1" height="1" fill="#ffff00"/><rect x="5" y="10" width="1" height="1" fill="#c0c0c0"/><rect x="6" y="10" width="1" height="1" fill="#ffff00"/><rect x="7" y="10" width="1" height="1" fill="#c0c0c0"/><rect x="8" y="10" width="1" height="1" fill="#ffff00"/><rect x="9" y="10" width="1" height="1" fill="#c0c0c0"/><rect x="10" y="10" width="1" height="1" fill="#ffff00"/><rect x="11" y="10" width="1" height="1" fill="#c0c0c0"/><rect x="12" y="10" width="1" height="1" fill="#ffff00"/><rect x="13" y="10" width="1" height="1" fill="#808080"/><rect x="14" y="10" width="1" height="1" fill="#000"/><rect x="0" y="11" width="14" height="1" fill="#808080"/><rect x="14" y="11" width="1" height="1" fill="#000"/><rect x="1" y="12" width="14" height="1" fill="#000"/></svg>
<div class=t style="left:238.5px;top:1255.60px;font-size:24px;color:#000;letter-spacing:0.510px;">snapshots</div>
<svg style="left:202px;top:1290px" width="32" height="26" viewBox="0 0 16 13" shape-rendering="crispEdges"><rect x="3" y="0" width="5" height="1" fill="#808080"/><rect x="2" y="1" width="1" height="1" fill="#808080"/><rect x="3" y="1" width="5" height="1" fill="#fff"/><rect x="8" y="1" width="1" height="1" fill="#808080"/><rect x="1" y="2" width="1" height="1" fill="#808080"/><rect x="2" y="2" width="1" height="1" fill="#fff"/><rect x="3" y="2" width="1" height="1" fill="#c0c0c0"/><rect x="4" y="2" width="1" height="1" fill="#ffff00"/><rect x="5" y="2" width="1" height="1" fill="#c0c0c0"/><rect x="6" y="2" width="1" height="1" fill="#ffff00"/><rect x="7" y="2" width="1" height="1" fill="#c0c0c0"/><rect x="8" y="2" width="1" height="1" fill="#fff"/><rect x="9" y="2" width="6" height="1" fill="#808080"/><rect x="1" y="3" width="1" height="1" fill="#808080"/><rect x="2" y="3" width="1" height="1" fill="#fff"/><rect x="3" y="3" width="1" height="1" fill="#ffff00"/><rect x="4" y="3" width="1" height="1" fill="#c0c0c0"/><rect x="5" y="3" width="1" height="1" fill="#ffff00"/><rect x="6" y="3" width="1" height="1" fill="#c0c0c0"/><rect x="7" y="3" width="1" height="1" fill="#ffff00"/><rect x="8" y="3" width="1" height="1" fill="#c0c0c0"/><rect x="9" y="3" width="5" height="1" fill="#fff"/><rect x="14" y="3" width="1" height="1" fill="#808080"/><rect x="15" y="3" width="1" height="1" fill="#000"/><rect x="1" y="4" width="1" height="1" fill="#808080"/><rect x="2" y="4" width="1" height="1" fill="#fff"/><rect x="3" y="4" width="1" height="1" fill="#c0c0c0"/><rect x="4" y="4" width="1" height="1" fill="#ffff00"/><rect x="5" y="4" width="1" height="1" fill="#c0c0c0"/><rect x="6" y="4" width="1" height="1" fill="#ffff00"/><rect x="7" y="4" width="1" height="1" fill="#c0c0c0"/><rect x="8" y="4" width="1" height="1" fill="#ffff00"/><rect x="9" y="4" width="1" height="1" fill="#c0c0c0"/><rect x="10" y="4" width="1" height="1" fill="#ffff00"/><rect x="11" y="4" width="1" height="1" fill="#c0c0c0"/><rect x="12" y="4" width="1" height="1" fill="#ffff00"/><rect x="13" y="4" width="1" height="1" fill="#c0c0c0"/><rect x="14" y="4" width="1" height="1" fill="#808080"/><rect x="15" y="4" width="1" height="1" fill="#000"/><rect x="0" y="5" width="13" height="1" fill="#808080"/><rect x="13" y="5" width="1" height="1" fill="#ffff00"/><rect x="14" y="5" width="1" height="1" fill="#808080"/><rect x="15" y="5" width="1" height="1" fill="#000"/><rect x="0" y="6" width="1" height="1" fill="#808080"/><rect x="1" y="6" width="10" height="1" fill="#fff"/><rect x="11" y="6" width="1" height="1" fill="#808080"/><rect x="12" y="6" width="1" height="1" fill="#000"/><rect x="13" y="6" width="1" height="1" fill="#c0c0c0"/><rect x="14" y="6" width="1" height="1" fill="#808080"/><rect x="15" y="6" width="1" height="1" fill="#000"/><rect x="0" y="7" width="1" height="1" fill="#808080"/><rect x="1" y="7" width="1" height="1" fill="#fff"/><rect x="2" y="7" width="1" height="1" fill="#808080"/><rect x="3" y="7" width="1" height="1" fill="#ffff00"/><rect x="4" y="7" width="1" height="1" fill="#c0c0c0"/><rect x="5" y="7" width="1" height="1" fill="#ffff00"/><rect x="6" y="7" width="1" height="1" fill="#c0c0c0"/><rect x="7" y="7" width="1" height="1" fill="#ffff00"/><rect x="8" y="7" width="1" height="1" fill="#c0c0c0"/><rect x="9" y="7" width="1" height="1" fill="#ffff00"/><rect x="10" y="7" width="1" height="1" fill="#c0c0c0"/><rect x="11" y="7" width="1" height="1" fill="#ffff00"/><rect x="12" y="7" width="1" height="1" fill="#000"/><rect x="13" y="7" width="2" height="1" fill="#808080"/><rect x="15" y="7" width="1" height="1" fill="#000"/><rect x="1" y="8" width="1" height="1" fill="#808080"/><rect x="2" y="8" width="1" height="1" fill="#fff"/><rect x="3" y="8" width="1" height="1" fill="#c0c0c0"/><rect x="4" y="8" width="1" height="1" fill="#ffff00"/><rect x="5" y="8" width="1" height="1" fill="#c0c0c0"/><rect x="6" y="8" width="1" height="1" fill="#ffff00"/><rect x="7" y="8" width="1" height="1" fill="#c0c0c0"/><rect x="8" y="8" width="1" height="1" fill="#ffff00"/><rect x="9" y="8" width="1" height="1" fill="#c0c0c0"/><rect x="10" y="8" width="1" height="1" fill="#ffff00"/><rect x="11" y="8" width="1" height="1" fill="#c0c0c0"/><rect x="12" y="8" width="1" height="1" fill="#ffff00"/><rect x="13" y="8" width="1" height="1" fill="#000"/><rect x="14" y="8" width="1" height="1" fill="#808080"/><rect x="15" y="8" width="1" height="1" fill="#000"/><rect x="1" y="9" width="1" height="1" fill="#808080"/><rect x="2" y="9" width="1" height="1" fill="#fff"/><rect x="3" y="9" width="1" height="1" fill="#ffff00"/><rect x="4" y="9" width="1" height="1" fill="#c0c0c0"/><rect x="5" y="9" width="1" height="1" fill="#ffff00"/><rect x="6" y="9" width="1" height="1" fill="#c0c0c0"/><rect x="7" y="9" width="1" height="1" fill="#ffff00"/><rect x="8" y="9" width="1" height="1" fill="#c0c0c0"/><rect x="9" y="9" width="1" height="1" fill="#ffff00"/><rect x="10" y="9" width="1" height="1" fill="#c0c0c0"/><rect x="11" y="9" width="1" height="1" fill="#ffff00"/><rect x="12" y="9" width="1" height="1" fill="#c0c0c0"/><rect x="13" y="9" width="1" height="1" fill="#000"/><rect x="14" y="9" width="1" height="1" fill="#808080"/><rect x="15" y="9" width="1" height="1" fill="#000"/><rect x="2" y="10" width="1" height="1" fill="#808080"/><rect x="3" y="10" width="1" height="1" fill="#fff"/><rect x="4" y="10" width="1" height="1" fill="#ffff00"/><rect x="5" y="10" width="1" height="1" fill="#c0c0c0"/><rect x="6" y="10" width="1" height="1" fill="#ffff00"/><rect x="7" y="10" width="1" height="1" fill="#c0c0c0"/><rect x="8" y="10" width="1" height="1" fill="#ffff00"/><rect x="9" y="10" width="1" height="1" fill="#c0c0c0"/><rect x="10" y="10" width="1" height="1" fill="#ffff00"/><rect x="11" y="10" width="1" height="1" fill="#c0c0c0"/><rect x="12" y="10" width="1" height="1" fill="#ffff00"/><rect x="13" y="10" width="2" height="1" fill="#808080"/><rect x="15" y="10" width="1" height="1" fill="#000"/><rect x="2" y="11" width="12" height="1" fill="#808080"/><rect x="14" y="11" width="2" height="1" fill="#000"/><rect x="3" y="12" width="13" height="1" fill="#000"/></svg>
<div class=r style="left:171px;top:1295px;width:14px;height:14px;border:2px solid #808080;border-radius:2px;background:#fff"></div>
<div class=r style="left:176px;top:1303px;width:8px;height:2px;background:#000;"></div>
<div class=r style="left:184px;top:1303px;width:2px;height:2px;background:#808080;"></div>
<div class=t style="left:238.5px;top:1291.60px;font-size:24px;color:#000;letter-spacing:0.833px;">fits</div>
<svg style="left:240px;top:1324px" width="32" height="32" viewBox="0 0 32 32"><path d="M16 1 L31 8.5 V23.5 L16 31 L1 23.5 V8.5Z" fill="#fbe3b0" stroke="#dca24a" stroke-width="1.6"/><path d="M16 15.5 L31 8.5 V23.5 L16 31Z" fill="#efb850"/><path d="M1 8.5 L16 1 L31 8.5 L16 15.5Z" fill="#fdf0d4"/><path d="M16 15.5 V31" stroke="#d8983a" stroke-width="1.4"/><path d="M1 8.5 L16 15.5 L31 8.5" fill="none" stroke="#e0b060" stroke-width="1.2"/><path d="M3 11 L14 16.5 V28 L3 22.5Z" fill="#fff6e2" opacity="0.7"/></svg>
<div class=r style="left:276px;top:1326px;width:20px;height:20px;border-top:2px solid #808080;border-left:2px solid #808080;border-bottom:2px solid #c8c8c8;border-right:2px solid #c8c8c8;background:#fff"></div>
<div class=r style="left:278px;top:1328px;width:18px;height:18px;border-top:2px solid #000;border-left:2px solid #000;box-sizing:border-box"></div>
<svg style="left:280px;top:1330px" width="16" height="16"><path d="M1.5 7 L5.5 12 L13.5 2" fill="none" stroke="#000" stroke-width="3.2"/></svg>
<div class=t style="left:308.5px;top:1325.60px;font-size:24px;color:#000;letter-spacing:0.672px;">RooFitResult::faed54a8-7d53-11ed-8c37-1cbbf90abeef</div>
</div></div>
<div class=r style="left:1032px;top:175px;width:170px;height:2px;background:#ffffff;"></div>
<svg style="left:1028px;top:175px" width="6" height="6"><path d="M0 6 L0 4 L4 0 L6 0 L6 2 L2 6Z" fill="#fff"/></svg>
<div class=r style="left:1028px;top:179px;width:2px;height:37px;background:#ffffff;"></div>
<div class=r style="left:1202px;top:177px;width:2px;height:38px;background:#808080;"></div>
<div class=t style="left:1040px;top:181.60px;font-size:24px;color:#000;letter-spacing:0.491px;">Canvas_1</div>
<div class=r style="left:1164px;top:180px;width:24px;height:24px;border:2px solid #8a8a8a;border-radius:4px;background:linear-gradient(#f4f4f4,#d8d8d8)"></div>
<svg style="left:1168px;top:184px" width="20" height="20"><path d="M5 5 L15 15 M15 5 L5 15" stroke="#e41010" stroke-width="4.2" stroke-linecap="square"/></svg>
<div class=r style="left:1210px;top:178px;width:140px;height:2px;background:#ffffff;"></div>
<svg style="left:1206px;top:178px" width="6" height="6"><path d="M0 6 L0 4 L4 0 L6 0 L6 2 L2 6Z" fill="#fff"/></svg>
<div class=r style="left:1206px;top:182px;width:2px;height:32px;background:#ffffff;"></div>
<div class=r style="left:1350px;top:181px;width:2px;height:33px;background:#808080;"></div>
<div class=t style="left:1217px;top:185.60px;font-size:24px;color:#000;letter-spacing:0.911px;">Editor 1</div>
<div class=r style="left:1318px;top:182px;width:24px;height:24px;border:2px solid #a0a0a0;border-radius:4px;background:linear-gradient(#f0f0f0,#d6d6d6)"></div>
<svg style="left:1322px;top:186px" width="20" height="20"><path d="M5 5 L15 15 M15 5 L5 15" stroke="#c6c6c6" stroke-width="4.2" stroke-linecap="square"/></svg>
<div class=r style="left:1204px;top:214px;width:1120px;height:2px;background:#ffffff;"></div>
<div class=r style="left:1028px;top:214px;width:2px;height:1033px;background:#ffffff;"></div>
<div class=r style="left:2322px;top:214px;width:2px;height:1033px;background:#808080;"></div>
<div class=r style="left:1028px;top:1245px;width:1296px;height:2px;background:#808080;"></div>
<div class=r style="left:1032px;top:218px;width:1288px;height:1027px;background:#ffffff;"></div>
<div class=r style="left:1032px;top:218px;width:1286px;height:2px;background:#808080;"></div>
<div class=r style="left:1032px;top:218px;width:2px;height:1025px;background:#808080;"></div>
<svg style="left:1568px;top:1251px" width="15" height="11"><path d="M1.5 1.5 L7.5 8.5 L13.5 1.5" fill="none" stroke="#000" stroke-width="2.4"/></svg>
<svg style="left:1768px;top:1251px" width="15" height="11"><path d="M1.5 1.5 L7.5 8.5 L13.5 1.5" fill="none" stroke="#000" stroke-width="2.4"/></svg>
<svg style="left:1589px;top:1255px" width="178" height="3"><line x1="0" y1="1.5" x2="178" y2="1.5" stroke="#8a8a8a" stroke-width="2" stroke-dasharray="2 4"/></svg>
<div class=r style="left:1032px;top:1264px;width:136px;height:2px;background:#ffffff;"></div>
<svg style="left:1028px;top:1264px" width="6" height="6"><path d="M0 6 L0 4 L4 0 L6 0 L6 2 L2 6Z" fill="#fff"/></svg>
<div class=r style="left:1028px;top:1268px;width:2px;height:38px;background:#ffffff;"></div>
<div class=r style="left:1168px;top:1267px;width:2px;height:38px;background:#808080;"></div>
<div class=t style="left:1040px;top:1271.60px;font-size:24px;color:#000;letter-spacing:0.470px;">Command</div>
<div class=r style="left:1170px;top:1304px;width:1154px;height:2px;background:#ffffff;"></div>
<div class=r style="left:1028px;top:1304px;width:2px;height:151px;background:#ffffff;"></div>
<div class=r style="left:2322px;top:1304px;width:2px;height:151px;background:#808080;"></div>
<div class=r style="left:1028px;top:1453px;width:1296px;height:2px;background:#808080;"></div>
<div class=t style="left:1048px;top:1323.60px;font-size:24px;color:#000;letter-spacing:0.538px;">Command (local):</div>
<div class=r style="left:1266px;top:1316px;width:1038px;height:42px;background:#ffffff;"></div>
<div class=r style="left:1266px;top:1316px;width:1036px;height:2px;background:#808080;"></div>
<div class=r style="left:1266px;top:1316px;width:2px;height:40px;background:#808080;"></div>
<div class=r style="left:2270px;top:1319px;width:27px;height:32px;border:2px solid #808080;background:#e6e6e6"></div>
<svg style="left:2277px;top:1332px" width="16" height="9"><path d="M0 0H16L8 8Z" fill="#000"/></svg>
<div class=r style="left:1038px;top:1372px;width:1276px;height:74px;background:#fdfdfd;"></div>
<div class=r style="left:1038px;top:1372px;width:1274px;height:2px;background:#808080;"></div>
<div class=r style="left:1038px;top:1372px;width:2px;height:72px;background:#808080;"></div>
<div class=r style="left:113px;top:1460px;width:724px;height:2px;background:#808080;"></div>
<div class=r style="left:113px;top:1460px;width:2px;height:37px;background:#808080;"></div>
<div class=r style="left:835px;top:1460px;width:2px;height:37px;background:#ffffff;"></div>
<div class=r style="left:113px;top:1495px;width:724px;height:2px;background:#ffffff;"></div>
<div class=r style="left:842px;top:1460px;width:215px;height:2px;background:#808080;"></div>
<div class=r style="left:842px;top:1460px;width:2px;height:37px;background:#808080;"></div>
<div class=r style="left:1055px;top:1460px;width:2px;height:37px;background:#ffffff;"></div>
<div class=r style="left:842px;top:1495px;width:215px;height:2px;background:#ffffff;"></div>
<div class=r style="left:1062px;top:1460px;width:215px;height:2px;background:#808080;"></div>
<div class=r style="left:1062px;top:1460px;width:2px;height:37px;background:#808080;"></div>
<div class=r style="left:1275px;top:1460px;width:2px;height:37px;background:#ffffff;"></div>
<div class=r style="left:1062px;top:1495px;width:215px;height:2px;background:#ffffff;"></div>
<div class=r style="left:1282px;top:1460px;width:1044px;height:2px;background:#808080;"></div>
<div class=r style="left:1282px;top:1460px;width:2px;height:37px;background:#808080;"></div>
<div class=r style="left:2324px;top:1460px;width:2px;height:37px;background:#ffffff;"></div>
<div class=r style="left:1282px;top:1495px;width:1044px;height:2px;background:#ffffff;"></div>
<svg style="left:2300px;top:1468px" width="28" height="30"><g stroke="#fff" stroke-width="2"><line x1="6" y1="29" x2="27" y2="8"/><line x1="14" y1="29" x2="27" y2="16"/><line x1="22" y1="29" x2="27" y2="24"/></g><g stroke="#888" stroke-width="2"><line x1="8" y1="29" x2="27" y2="10"/><line x1="16" y1="29" x2="27" y2="18"/><line x1="24" y1="29" x2="27" y2="26"/></g></svg>
<svg style="left:0;top:0" width="2440" height="1646" font-family="Liberation Sans"><style>.cs text{stroke:#000;stroke-width:0.5px}</style><g class="cs"><defs><pattern id="hat" patternUnits="userSpaceOnUse" x="5.3" y="0" width="8" height="8"><path d="M0 0L8 8M-1 7L1 9M7 -1L9 1" stroke="#00008c" stroke-width="1.0"/></pattern></defs><rect x="1162" y="896.2" width="514" height="36.799999999999955" fill="#fc1c1c"/><rect x="1162" y="536.7" width="514" height="359.5" fill="#0019fb"/><rect x="1676" y="888.3" width="512" height="44.700000000000045" fill="#28f94a"/><rect x="1676" y="707" width="512" height="181.29999999999995" fill="#0019fb"/><path d="M1162 536.7 H1676 V707 H2188 M1676 888.3 V933 M1676 888.3 H2188 M1162 896.2 H1676" stroke="#00009a" stroke-width="1.2" fill="none"/><rect x="1162" y="370.2" width="514" height="334.8" fill="url(#hat)"/><rect x="1676" y="575.8" width="512" height="263.8" fill="url(#hat)"/><path d="M1162 928.4H1172M1162 912.3H1172M1162 896.2H1184M1162 880.1H1172M1162 864.0H1172M1162 847.9H1172M1162 831.7H1172M1162 815.6H1184M1162 799.5H1172M1162 783.4H1172M1162 767.3H1172M1162 751.2H1172M1162 735.1H1184M1162 718.9H1172M1162 702.8H1172M1162 686.7H1172M1162 670.6H1172M1162 654.5H1184M1162 638.4H1172M1162 622.3H1172M1162 606.1H1172M1162 590.0H1172M1162 573.9H1184M1162 557.8H1172M1162 541.7H1172M1162 525.6H1172M1162 509.5H1172M1162 493.4H1184M1162 477.2H1172M1162 461.1H1172M1162 445.0H1172M1162 428.9H1172M1162 412.8H1184M1162 396.7H1172M1162 380.6H1172M1162 364.4H1172M1162 348.3H1172M1162 332.2H1184M1162.0 933V910M1182.5 933V922.5M1203.0 933V922.5M1223.6 933V922.5M1244.1 933V922.5M1264.6 933V910M1285.1 933V922.5M1305.6 933V922.5M1326.2 933V922.5M1346.7 933V922.5M1367.2 933V910M1387.7 933V922.5M1408.2 933V922.5M1428.8 933V922.5M1449.3 933V922.5M1469.8 933V910M1490.3 933V922.5M1510.8 933V922.5M1531.4 933V922.5M1551.9 933V922.5M1572.4 933V910M1592.9 933V922.5M1613.4 933V922.5M1634.0 933V922.5M1654.5 933V922.5M1675.0 933V910M1695.5 933V922.5M1716.0 933V922.5M1736.6 933V922.5M1757.1 933V922.5M1777.6 933V910M1798.1 933V922.5M1818.6 933V922.5M1839.2 933V922.5M1859.7 933V922.5M1880.2 933V910M1900.7 933V922.5M1921.2 933V922.5M1941.8 933V922.5M1962.3 933V922.5M1982.8 933V910M2003.3 933V922.5M2023.8 933V922.5M2044.4 933V922.5M2064.9 933V922.5M2085.4 933V910M2105.9 933V922.5M2126.4 933V922.5M2147.0 933V922.5M2167.5 933V922.5M2188.0 933V910" stroke="#000" stroke-width="2" fill="none"/><rect x="1162" y="322" width="1026" height="611" stroke="#000" stroke-width="2" fill="none"/><path d="M1418 348V717" stroke="#000" stroke-width="2"/><circle cx="1418" cy="541.8" r="8.6" fill="#000"/><path d="M1932 515.4V871.9" stroke="#000" stroke-width="2"/><circle cx="1932" cy="701.5" r="8.6" fill="#000"/><text x="1155.5" y="908.2" font-size="32" text-anchor="end">100</text><text x="1155.5" y="827.6" font-size="32" text-anchor="end">105</text><text x="1155.5" y="747.1" font-size="32" text-anchor="end">110</text><text x="1155.5" y="666.5" font-size="32" text-anchor="end">115</text><text x="1155.5" y="585.9" font-size="32" text-anchor="end">120</text><text x="1155.5" y="505.4" font-size="32" text-anchor="end">125</text><text x="1155.5" y="424.8" font-size="32" text-anchor="end">130</text><text x="1155.5" y="344.2" font-size="32" text-anchor="end">135</text><text transform="translate(1103,320.5) rotate(-90)" font-size="32" text-anchor="end">Events</text><text x="1584.7" y="268" font-size="43">channel1</text><rect x="1792.5" y="356" width="67" height="35" rx="2" fill="#0019fb" stroke="#00009a" stroke-width="2"/><rect x="1792.5" y="408" width="67" height="35" rx="2" fill="#28f94a" stroke="#00009a" stroke-width="2"/><rect x="1792.5" y="458.4" width="67" height="35" rx="2" fill="#fc1c1c" stroke="#00009a" stroke-width="2"/><text x="1873.1" y="385.6" font-size="36">signal</text><text x="1873.1" y="436.1" font-size="36">background2</text><text x="1873.1" y="487.3" font-size="36">background1</text><text x="1873.1" y="539.2" font-size="36">observed</text><path d="M1826.2 511.8V542" stroke="#000" stroke-width="2"/><circle cx="1826.2" cy="527.5" r="8.4" fill="#000"/><rect x="1162" y="1003.9" width="514" height="74.1" fill="url(#hat)"/><rect x="1676" y="1010" width="512" height="63.9" fill="url(#hat)"/><path d="M1189 953.8H2188M1189 997.4H2188M1189 1084.6H2188M1189 1128.2H2188" stroke="#000" stroke-width="2.6" stroke-dasharray="2.6 3.4" fill="none"/><path d="M1162 1042H2188" stroke="#a8a8f0" stroke-width="2.6" fill="none"/><path d="M1162 1042H2188" stroke="#00007a" stroke-width="1.6" fill="none"/><path d="M1162 1128.2H1186M1162 1084.6H1186M1162 1041.0H1186M1162 997.4H1186M1162 953.8H1186M1162.0 1138V1112M1182.5 1138V1126M1203.0 1138V1126M1223.6 1138V1126M1244.1 1138V1126M1264.6 1138V1112M1285.1 1138V1126M1305.6 1138V1126M1326.2 1138V1126M1346.7 1138V1126M1367.2 1138V1112M1387.7 1138V1126M1408.2 1138V1126M1428.8 1138V1126M1449.3 1138V1126M1469.8 1138V1112M1490.3 1138V1126M1510.8 1138V1126M1531.4 1138V1126M1551.9 1138V1126M1572.4 1138V1112M1592.9 1138V1126M1613.4 1138V1126M1634.0 1138V1126M1654.5 1138V1126M1675.0 1138V1112M1695.5 1138V1126M1716.0 1138V1126M1736.6 1138V1126M1757.1 1138V1126M1777.6 1138V1112M1798.1 1138V1126M1818.6 1138V1126M1839.2 1138V1126M1859.7 1138V1126M1880.2 1138V1112M1900.7 1138V1126M1921.2 1138V1126M1941.8 1138V1126M1962.3 1138V1126M1982.8 1138V1112M2003.3 1138V1126M2023.8 1138V1126M2044.4 1138V1126M2064.9 1138V1126M2085.4 1138V1112M2105.9 1138V1126M2126.4 1138V1126M2147.0 1138V1126M2167.5 1138V1126M2188.0 1138V1112" stroke="#000" stroke-width="2" fill="none"/><rect x="1162" y="946" width="1026" height="192" stroke="#000" stroke-width="2" fill="none"/><path d="M1418 1000V1081.7" stroke="#000" stroke-width="2"/><circle cx="1418" cy="1042" r="8.6" fill="#000"/><path d="M1932 994.3V1081.5" stroke="#000" stroke-width="2"/><circle cx="1932" cy="1040" r="8.6" fill="#000"/><text x="1154.6" y="968.1" font-size="32" text-anchor="end">1.2</text><text x="1154.6" y="1011.4" font-size="32" text-anchor="end">1.1</text><text x="1154.6" y="1053.3" font-size="32" text-anchor="end">1</text><text x="1154.6" y="1095.3" font-size="32" text-anchor="end">0.9</text><text x="1154.6" y="1139.4" font-size="32" text-anchor="end">0.8</text><text transform="translate(1101.5,944) rotate(-90)" font-size="32" text-anchor="end">Ratio</text><text x="1163.0" y="1165.5" font-size="32" text-anchor="middle">1</text><text x="1265.6" y="1165.5" font-size="32" text-anchor="middle">1.1</text><text x="1368.2" y="1165.5" font-size="32" text-anchor="middle">1.2</text><text x="1470.8" y="1165.5" font-size="32" text-anchor="middle">1.3</text><text x="1573.4" y="1165.5" font-size="32" text-anchor="middle">1.4</text><text x="1676.0" y="1165.5" font-size="32" text-anchor="middle">1.5</text><text x="1778.6" y="1165.5" font-size="32" text-anchor="middle">1.6</text><text x="1881.2" y="1165.5" font-size="32" text-anchor="middle">1.7</text><text x="1983.8" y="1165.5" font-size="32" text-anchor="middle">1.8</text><text x="2086.4" y="1165.5" font-size="32" text-anchor="middle">1.9</text><text x="2189.0" y="1165.5" font-size="32" text-anchor="middle">2</text><text x="2187.3" y="1205.3" font-size="32" text-anchor="end">obs_x_channel1</text></g></svg>
</body></html>
